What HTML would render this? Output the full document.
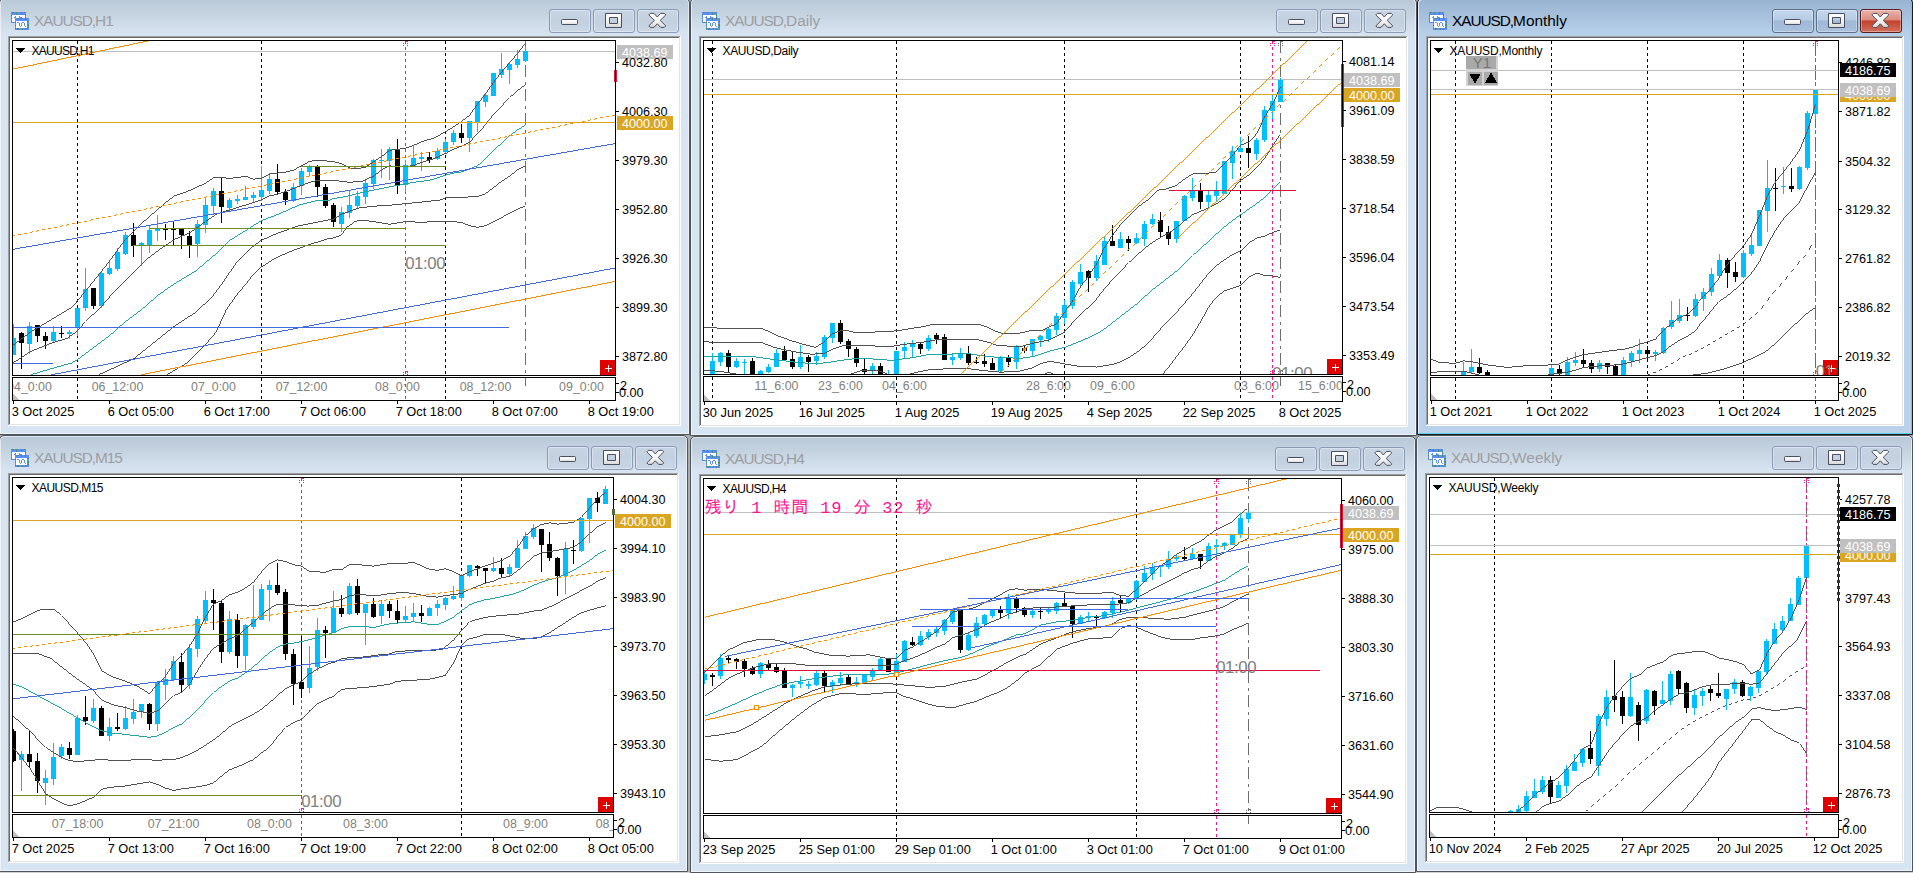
<!DOCTYPE html>
<html lang="ja"><head><meta charset="utf-8"><title>XAUUSD charts</title>
<style>
html,body{margin:0;padding:0}
body{width:1913px;height:873px;overflow:hidden;background:#ababab;position:relative;font-family:"Liberation Sans",sans-serif}
.win{position:absolute;box-sizing:border-box;border:1px solid #50565e;border-radius:5px 5px 0 0;
 background:linear-gradient(#b9c8d8 0,#c4d2e0 14px,#d7e3f0 34px,#d7e4f2 40px);box-shadow:inset 0 0 0 1px rgba(255,255,255,.55)}
.win.act{border-color:#1b1b1b;background:linear-gradient(#98b3d1 0,#a4bedb 14px,#b6cfe9 34px,#b9d1ea 40px);box-shadow:inset -1px -1px 0 0 #5fd0ea, inset 1px 1px 0 0 rgba(255,255,255,.7)}
.ico{position:absolute;left:11px;top:13px}
.tt{position:absolute;left:34px;top:11px;font-size:15.4px;line-height:22px;color:#9c9ea3;letter-spacing:-1.05px;white-space:nowrap}
.act .tt{color:#000}
.tt .lc{letter-spacing:0}
.b{position:absolute;top:10px;width:41.5px;height:23.5px;box-sizing:border-box;border:1px solid #8c9bb7;border-radius:3px;
 background:linear-gradient(#c6d4e3,#c2d0e0 50%,#c9d6e5);box-shadow:inset 0 0 0 1px rgba(255,255,255,.35)}
.b svg{position:absolute;left:-1px;top:-1px}
.act .b{border-color:#5f708c;background:linear-gradient(#c3d6ec 0,#b7cde6 45%,#9fb8d6 50%,#a9c1dd 100%)}
.act .b.x{border-color:#5a1e1e;background:linear-gradient(#e9b3a9 0,#dc8c7f 45%,#c4402a 50%,#d0705c 100%)}
.cl{position:absolute;left:8px;top:37px;overflow:hidden}
.cl svg{display:block}
</style></head><body>
<svg width="0" height="0" style="position:absolute"><defs><linearGradient id="gw" x1="0" y1="0" x2="0" y2="1"><stop offset="0" stop-color="#fff"/><stop offset=".55" stop-color="#f4f4f4"/><stop offset="1" stop-color="#d8d8d8"/></linearGradient></defs></svg>
<div style="position:absolute;left:0;top:872px;width:1913px;height:1px;background:#d2d2d2"></div>
<div class="win" style="left:-1px;top:-2px;width:691px;height:437px">
<svg class="ico" width="19" height="19" viewBox="0 0 19 19" shape-rendering="crispEdges"><rect x="0" y="0" width="15" height="11" fill="#5b8ff9"/><rect x="1" y="3" width="13" height="7" fill="#fff"/><path d="M3 5.5h2M4.5 4v2M8.5 4v2M8.5 5.5h2" stroke="#5b8ff9" fill="none"/><rect x="1" y="0" width="2" height="1" fill="#4c8d6a"/><rect x="5" y="0" width="1" height="3" fill="#4c8d6a"/><rect x="10" y="0" width="1" height="3" fill="#4c8d6a"/><rect x="13" y="0" width="1" height="1" fill="#4c8d6a"/><rect x="0" y="3" width="1" height="1" fill="#4c8d6a"/><rect x="0" y="6" width="1" height="1" fill="#4c8d6a"/><rect x="0" y="9" width="1" height="1" fill="#4c8d6a"/><rect x="14" y="2" width="1" height="2" fill="#4c8d6a"/><rect x="14" y="5" width="1" height="1" fill="#4c8d6a"/><rect x="2" y="10" width="1" height="1" fill="#4c8d6a"/><rect x="4" y="6" width="14" height="12" fill="#5b8ff9"/><rect x="5" y="9" width="11" height="7" fill="#fff"/><rect x="6" y="6" width="2" height="1" fill="#4c8d6a"/><rect x="10" y="6" width="1" height="2" fill="#4c8d6a"/><rect x="14" y="6" width="1" height="2" fill="#4c8d6a"/><rect x="4" y="10" width="1" height="1" fill="#4c8d6a"/><rect x="4" y="13" width="1" height="1" fill="#4c8d6a"/><rect x="4" y="16" width="1" height="1" fill="#4c8d6a"/><rect x="16" y="9" width="2" height="1" fill="#4c8d6a"/><rect x="16" y="12" width="2" height="2" fill="#4c8d6a"/><rect x="16" y="15" width="2" height="1" fill="#4c8d6a"/><rect x="6" y="16" width="2" height="2" fill="#4c8d6a"/><rect x="11" y="16" width="1" height="2" fill="#4c8d6a"/><rect x="14" y="16" width="1" height="2" fill="#4c8d6a"/><rect x="6" y="10" width="2" height="1" fill="#5b8ff9"/><rect x="8" y="11" width="1" height="3" fill="#5b8ff9"/><rect x="9" y="14" width="1" height="1" fill="#5b8ff9"/><rect x="10" y="11" width="1" height="3" fill="#5b8ff9"/><rect x="11" y="10" width="2" height="1" fill="#5b8ff9"/><rect x="13" y="11" width="1" height="3" fill="#5b8ff9"/><rect x="14" y="14" width="1" height="1" fill="#5b8ff9"/></svg>
<div class="tt">XAUUSD,H1</div>
<div class="b n" style="left:549px"><svg width="42" height="24" viewBox="0 0 42 24"><rect x="12.5" y="10.5" width="16" height="5" rx="1" fill="url(#gw)" stroke="#4b4f63"/></svg></div>
<div class="b m" style="left:593px"><svg width="42" height="24" viewBox="0 0 42 24"><path fill-rule="evenodd" d="M12.5 4.5h16v14h-16zM16.5 8.5v6h8v-6z" fill="url(#gw)" stroke="#4b4f63" stroke-linejoin="round"/></svg></div>
<div class="b x" style="left:637px"><svg width="42" height="24" viewBox="0 0 42 24"><path d="M11.8 5.9L13.3 4.4H17L20.3 8L23.6 4.4H27.3L28.8 5.9L23.2 11.4L28.8 16.9L27.3 18.4H23.6L20.3 14.8L17 18.4H13.3L11.8 16.9L17.4 11.4Z" fill="url(#gw)" stroke="#4b4f63" stroke-linejoin="round"/></svg></div>
<div class="cl" style="width:673px;height:390px">
<svg width="673" height="390" viewBox="8 36 673 390" font-family='"Liberation Sans", sans-serif' shape-rendering="crispEdges">
<defs><clipPath id="c139881245814864"><rect x="13" y="41" width="602" height="334"/></clipPath><clipPath id="s139881245814864"><rect x="13" y="378" width="602" height="22"/></clipPath></defs>
<rect x="8" y="36" width="673" height="390" fill="#fff"/>
<rect x="8" y="36" width="673" height="1" fill="#a0a0a0"/><rect x="8" y="36" width="1" height="390" fill="#a0a0a0"/>
<rect x="9" y="37" width="671" height="1" fill="#696969"/><rect x="9" y="37" width="1" height="388" fill="#696969"/>
<rect x="9" y="424" width="671" height="1" fill="#e3e3e3"/><rect x="679" y="37" width="1" height="388" fill="#e3e3e3"/>
<rect x="8" y="425" width="673" height="1" fill="#fff"/><rect x="680" y="36" width="1" height="390" fill="#fff"/>
<g clip-path="url(#c139881245814864)">
<line x1="77.5" y1="41" x2="77.5" y2="375" stroke="#000" stroke-width="1" stroke-dasharray="3 3"/>
<line x1="261.5" y1="41" x2="261.5" y2="375" stroke="#000" stroke-width="1" stroke-dasharray="3 3"/>
<line x1="445.5" y1="41" x2="445.5" y2="375" stroke="#000" stroke-width="1" stroke-dasharray="3 3"/>
<line x1="405.5" y1="41" x2="405.5" y2="375" stroke="#ff1493" stroke-width="1" stroke-dasharray="3 3"/>
<line x1="525.5" y1="41" x2="525.5" y2="375" stroke="#6e6e6e" stroke-width="1" stroke-dasharray="12 4.5 3 4.5"/>
<line x1="12" y1="51.5" x2="616" y2="51.5" stroke="#c0c0c0" stroke-width="1"/>
<rect x="13" y="324" width="1" height="31" fill="#00bfff"/>
<rect x="11" y="338" width="5" height="17" fill="#00bfff"/>
<rect x="21" y="332" width="1" height="37" fill="#000"/>
<rect x="19" y="333" width="5" height="10" fill="#000"/>
<rect x="29" y="322" width="1" height="32" fill="#00bfff"/>
<rect x="27" y="326" width="5" height="18" fill="#00bfff"/>
<rect x="37" y="325" width="1" height="17" fill="#000"/>
<rect x="35" y="325" width="5" height="11" fill="#000"/>
<rect x="45" y="332" width="1" height="17" fill="#000"/>
<rect x="43" y="336" width="5" height="5" fill="#000"/>
<rect x="53" y="326" width="1" height="16" fill="#00bfff"/>
<rect x="51" y="332" width="5" height="9" fill="#00bfff"/>
<rect x="61" y="326" width="1" height="12" fill="#000"/>
<rect x="59" y="333" width="5" height="1" fill="#000"/>
<rect x="69" y="330" width="1" height="9" fill="#00bfff"/>
<rect x="67" y="332" width="5" height="2" fill="#00bfff"/>
<rect x="77" y="308" width="1" height="28" fill="#00bfff"/>
<rect x="75" y="308" width="5" height="20" fill="#00bfff"/>
<rect x="85" y="268" width="1" height="43" fill="#00bfff"/>
<rect x="83" y="289" width="5" height="19" fill="#00bfff"/>
<rect x="93" y="288" width="1" height="21" fill="#000"/>
<rect x="91" y="288" width="5" height="18" fill="#000"/>
<rect x="101" y="272" width="1" height="36" fill="#00bfff"/>
<rect x="99" y="273" width="5" height="33" fill="#00bfff"/>
<rect x="109" y="261" width="1" height="14" fill="#00bfff"/>
<rect x="107" y="268" width="5" height="6" fill="#00bfff"/>
<rect x="117" y="248" width="1" height="23" fill="#00bfff"/>
<rect x="115" y="252" width="5" height="17" fill="#00bfff"/>
<rect x="125" y="232" width="1" height="23" fill="#00bfff"/>
<rect x="123" y="235" width="5" height="19" fill="#00bfff"/>
<rect x="133" y="223" width="1" height="34" fill="#000"/>
<rect x="131" y="235" width="5" height="11" fill="#000"/>
<rect x="141" y="242" width="1" height="24" fill="#00bfff"/>
<rect x="139" y="243" width="5" height="3" fill="#00bfff"/>
<rect x="149" y="226" width="1" height="27" fill="#00bfff"/>
<rect x="147" y="230" width="5" height="15" fill="#00bfff"/>
<rect x="157" y="215" width="1" height="26" fill="#00bfff"/>
<rect x="155" y="229" width="5" height="2" fill="#00bfff"/>
<rect x="165" y="224" width="1" height="16" fill="#000"/>
<rect x="163" y="229" width="5" height="1" fill="#000"/>
<rect x="173" y="222" width="1" height="24" fill="#000"/>
<rect x="171" y="229" width="5" height="1" fill="#000"/>
<rect x="181" y="229" width="1" height="20" fill="#000"/>
<rect x="179" y="229" width="5" height="6" fill="#000"/>
<rect x="189" y="231" width="1" height="27" fill="#000"/>
<rect x="187" y="236" width="5" height="9" fill="#000"/>
<rect x="197" y="220" width="1" height="37" fill="#00bfff"/>
<rect x="195" y="224" width="5" height="20" fill="#00bfff"/>
<rect x="205" y="198" width="1" height="35" fill="#00bfff"/>
<rect x="203" y="205" width="5" height="20" fill="#00bfff"/>
<rect x="213" y="188" width="1" height="27" fill="#00bfff"/>
<rect x="211" y="191" width="5" height="15" fill="#00bfff"/>
<rect x="221" y="178" width="1" height="45" fill="#000"/>
<rect x="219" y="191" width="5" height="16" fill="#000"/>
<rect x="229" y="198" width="1" height="14" fill="#00bfff"/>
<rect x="227" y="200" width="5" height="8" fill="#00bfff"/>
<rect x="237" y="195" width="1" height="9" fill="#00bfff"/>
<rect x="235" y="199" width="5" height="2" fill="#00bfff"/>
<rect x="245" y="186" width="1" height="14" fill="#00bfff"/>
<rect x="243" y="197" width="5" height="3" fill="#00bfff"/>
<rect x="253" y="192" width="1" height="10" fill="#00bfff"/>
<rect x="251" y="195" width="5" height="3" fill="#00bfff"/>
<rect x="261" y="166" width="1" height="35" fill="#00bfff"/>
<rect x="259" y="190" width="5" height="7" fill="#00bfff"/>
<rect x="269" y="173" width="1" height="21" fill="#00bfff"/>
<rect x="267" y="179" width="5" height="12" fill="#00bfff"/>
<rect x="277" y="164" width="1" height="30" fill="#000"/>
<rect x="275" y="179" width="5" height="13" fill="#000"/>
<rect x="285" y="189" width="1" height="16" fill="#000"/>
<rect x="283" y="192" width="5" height="8" fill="#000"/>
<rect x="293" y="183" width="1" height="19" fill="#00bfff"/>
<rect x="291" y="187" width="5" height="14" fill="#00bfff"/>
<rect x="301" y="168" width="1" height="27" fill="#00bfff"/>
<rect x="299" y="171" width="5" height="15" fill="#00bfff"/>
<rect x="309" y="165" width="1" height="11" fill="#00bfff"/>
<rect x="307" y="166" width="5" height="6" fill="#00bfff"/>
<rect x="317" y="165" width="1" height="32" fill="#000"/>
<rect x="315" y="167" width="5" height="20" fill="#000"/>
<rect x="325" y="184" width="1" height="24" fill="#000"/>
<rect x="323" y="187" width="5" height="19" fill="#000"/>
<rect x="333" y="203" width="1" height="24" fill="#000"/>
<rect x="331" y="205" width="5" height="17" fill="#000"/>
<rect x="341" y="207" width="1" height="25" fill="#00bfff"/>
<rect x="339" y="212" width="5" height="12" fill="#00bfff"/>
<rect x="349" y="190" width="1" height="28" fill="#00bfff"/>
<rect x="347" y="205" width="5" height="8" fill="#00bfff"/>
<rect x="357" y="191" width="1" height="17" fill="#00bfff"/>
<rect x="355" y="196" width="5" height="10" fill="#00bfff"/>
<rect x="365" y="179" width="1" height="25" fill="#00bfff"/>
<rect x="363" y="183" width="5" height="14" fill="#00bfff"/>
<rect x="373" y="159" width="1" height="30" fill="#00bfff"/>
<rect x="371" y="160" width="5" height="24" fill="#00bfff"/>
<rect x="381" y="149" width="1" height="29" fill="#00bfff"/>
<rect x="379" y="160" width="5" height="1" fill="#00bfff"/>
<rect x="389" y="147" width="1" height="33" fill="#00bfff"/>
<rect x="387" y="149" width="5" height="12" fill="#00bfff"/>
<rect x="397" y="139" width="1" height="55" fill="#000"/>
<rect x="395" y="149" width="5" height="37" fill="#000"/>
<rect x="405" y="160" width="1" height="32" fill="#00bfff"/>
<rect x="403" y="165" width="5" height="20" fill="#00bfff"/>
<rect x="413" y="145" width="1" height="21" fill="#00bfff"/>
<rect x="411" y="158" width="5" height="8" fill="#00bfff"/>
<rect x="421" y="152" width="1" height="19" fill="#00bfff"/>
<rect x="419" y="157" width="5" height="2" fill="#00bfff"/>
<rect x="429" y="152" width="1" height="11" fill="#000"/>
<rect x="427" y="157" width="5" height="3" fill="#000"/>
<rect x="437" y="148" width="1" height="12" fill="#00bfff"/>
<rect x="435" y="151" width="5" height="8" fill="#00bfff"/>
<rect x="445" y="139" width="1" height="14" fill="#00bfff"/>
<rect x="443" y="142" width="5" height="10" fill="#00bfff"/>
<rect x="453" y="130" width="1" height="15" fill="#00bfff"/>
<rect x="451" y="133" width="5" height="9" fill="#00bfff"/>
<rect x="461" y="124" width="1" height="19" fill="#000"/>
<rect x="459" y="133" width="5" height="5" fill="#000"/>
<rect x="469" y="121" width="1" height="31" fill="#00bfff"/>
<rect x="467" y="121" width="5" height="17" fill="#00bfff"/>
<rect x="477" y="101" width="1" height="31" fill="#00bfff"/>
<rect x="475" y="101" width="5" height="21" fill="#00bfff"/>
<rect x="485" y="93" width="1" height="14" fill="#00bfff"/>
<rect x="483" y="95" width="5" height="7" fill="#00bfff"/>
<rect x="493" y="73" width="1" height="23" fill="#00bfff"/>
<rect x="491" y="73" width="5" height="23" fill="#00bfff"/>
<rect x="501" y="53" width="1" height="25" fill="#00bfff"/>
<rect x="499" y="69" width="5" height="6" fill="#00bfff"/>
<rect x="509" y="62" width="1" height="22" fill="#00bfff"/>
<rect x="507" y="64" width="5" height="6" fill="#00bfff"/>
<rect x="517" y="50" width="1" height="18" fill="#00bfff"/>
<rect x="515" y="59" width="5" height="6" fill="#00bfff"/>
<rect x="525" y="47" width="1" height="15" fill="#00bfff"/>
<rect x="523" y="51" width="5" height="10" fill="#00bfff"/>
<path d="M10 346.9L30.6 331.5L30.6 332.5L10 347.9ZM30.6 331.5L51.2 319.1L51.2 320.1L30.6 332.5ZM51.2 319.1L71.9 306.7L71.9 307.7L51.2 320.1ZM71.4 307.2L76.9 301L77.9 301L72.4 307.2ZM76.9 301L92 282.5L93 282.5L77.9 301ZM92 282.5L108.5 261.9L109.5 261.9L93 282.5ZM108.5 261.9L125 239.2L126 239.2L109.5 261.9ZM125 239.2L137.3 226.8L138.3 226.8L126 239.2ZM137.8 226.3L154.3 211.9L154.3 212.9L137.8 227.3ZM154.3 211.9L168.8 199.5L168.8 200.5L154.3 212.9ZM168.8 199.5L174.9 195.2L174.9 196.2L168.8 200.5ZM174.9 195.2L187.3 191.1L187.3 192.1L174.9 196.2ZM187.3 191.1L195.6 187L195.6 188L187.3 192.1ZM195.6 187L205.5 182.9L205.5 183.9L195.6 188ZM205.5 182.9L213.5 177.3L213.5 178.3L205.5 183.9ZM213.5 177.3L221.5 177.3L221.5 178.3L213.5 178.3ZM221.5 177.3L229.6 177.7L229.6 178.7L221.5 178.3ZM229.6 177.7L237.6 177.3L237.6 178.3L229.6 178.7ZM237.6 177.3L245.7 175.6L245.7 176.6L237.6 178.3ZM245.7 175.6L253.5 178.7L253.5 179.7L245.7 176.6ZM253.5 178.7L261.5 177.7L261.5 178.7L253.5 179.7ZM261.5 177.7L269.6 173.6L269.6 174.6L261.5 178.7ZM269.6 173.6L277.6 172.6L277.6 173.6L269.6 174.6ZM277.6 172.6L285.7 171.5L285.7 172.5L277.6 173.6ZM285.7 171.5L293.7 169.5L293.7 170.5L285.7 172.5ZM293.7 169.5L301.5 165.3L301.5 166.3L293.7 170.5ZM301.5 165.3L309.6 160.8L309.6 161.8L301.5 166.3ZM309.6 160.8L317.6 159.6L317.6 160.6L309.6 161.8ZM317.6 159.6L330 160.8L330 161.8L317.6 160.6ZM330 160.8L333 160.8L333 161.8L330 161.8ZM333 160.8L341.2 163.3L341.2 164.3L333 161.8ZM341.2 163.3L349.5 167.4L349.5 168.4L341.2 164.3ZM349.5 167.4L357.7 168.4L357.7 169.4L349.5 168.4ZM357.7 168.4L366 166.4L366 167.4L357.7 169.4ZM366 166.4L373.6 161.2L373.6 162.2L366 167.4ZM373.6 161.2L381.6 156.1L381.6 157.1L373.6 162.2ZM381.6 156.1L389.5 149.9L389.5 150.9L381.6 157.1ZM389.5 149.9L397.5 148.8L397.5 149.8L389.5 150.9ZM397.5 148.8L405.6 147.8L405.6 148.8L397.5 149.8ZM405.6 147.8L413.6 144.7L413.6 145.7L405.6 148.8ZM413.6 144.7L423.7 140.6L423.7 141.6L413.6 145.7ZM423.7 140.6L434 137.5L434 138.5L423.7 141.6ZM434 137.5L445.6 131.3L445.6 132.3L434 138.5ZM445.6 131.3L453.6 126.2L453.6 127.2L445.6 132.3ZM453.6 126.2L461.4 121L461.4 122L453.6 127.2ZM461.4 121L469.5 114.8L469.5 115.8L461.4 122ZM469 115.3L477 104L478 104L470 115.3ZM477 104L485.1 93.7L486.1 93.7L478 104ZM485.1 93.7L493.1 82.3L494.1 82.3L486.1 93.7ZM493.1 82.3L501.1 72L502.1 72L494.1 82.3ZM501.1 72L509 62.7L510 62.7L502.1 72ZM509 62.7L517 53.5L518 53.5L510 62.7ZM517 53.5L524.2 44.2L525.2 44.2L518 53.5Z" fill="#505050"/>
<path d="M13.1 362.4L30.6 351L30.6 352L13.1 363.4ZM30.6 351L51.2 342.8L51.2 343.8L30.6 352ZM51.2 342.8L67.7 337.6L67.7 338.6L51.2 343.8ZM67.7 337.6L77.4 330.4L77.4 331.4L67.7 338.6ZM76.9 330.9L85 321.6L86 321.6L77.9 330.9ZM85.5 321.1L100.7 306.7L100.7 307.7L85.5 322.1ZM100.2 307.2L112.6 292.8L113.6 292.8L101.2 307.2ZM112.6 292.8L129.1 276.3L130.1 276.3L113.6 292.8ZM129.1 276.3L145.6 259.8L146.6 259.8L130.1 276.3ZM146.1 259.3L162.6 246.9L162.6 247.9L146.1 260.3ZM162.6 246.9L174.9 238.7L174.9 239.7L162.6 247.9ZM174.9 238.7L189.4 232.5L189.4 233.5L174.9 239.7ZM189.4 232.5L203.8 222.2L203.8 223.2L189.4 233.5ZM203.8 222.2L216.2 213.9L216.2 214.9L203.8 223.2ZM216.2 213.9L228.6 209.8L228.6 210.8L216.2 214.9ZM228.6 209.8L245.1 204.7L245.1 205.7L228.6 210.8ZM245.1 204.7L261.5 199.5L261.5 200.5L245.1 205.7ZM261.5 199.5L269.6 195.2L269.6 196.2L261.5 200.5ZM269.6 195.2L277.6 193.8L277.6 194.8L269.6 196.2ZM277.6 193.8L285.7 191.1L285.7 192.1L277.6 194.8ZM285.7 191.1L293.7 188L293.7 189L285.7 192.1ZM293.7 188L301.5 184.9L301.5 185.9L293.7 189ZM301.5 184.9L309.6 181.8L309.6 182.8L301.5 185.9ZM309.6 181.8L317.6 179.8L317.6 180.8L309.6 182.8ZM317.6 179.8L330 179.8L330 180.8L317.6 180.8ZM330 179.8L333 179.8L333 180.8L330 180.8ZM333 179.8L349.5 181.8L349.5 182.8L333 180.8ZM349.5 181.8L361.9 180.8L361.9 181.8L349.5 182.8ZM361.9 180.8L373.6 175.6L373.6 176.6L361.9 181.8ZM373.6 175.6L381.6 169.5L381.6 170.5L373.6 176.6ZM381.6 169.5L389.5 165.3L389.5 166.3L381.6 170.5ZM389.5 165.3L397.5 166.4L397.5 167.4L389.5 166.3ZM397.5 166.4L405.6 166.4L405.6 167.4L397.5 167.4ZM405.6 166.4L413.6 164.9L413.6 165.9L405.6 167.4ZM413.6 164.9L423.7 161.2L423.7 162.2L413.6 165.9ZM423.7 161.2L434 158.1L434 159.1L423.7 162.2ZM434 158.1L445.6 153L445.6 154L434 159.1ZM445.6 153L453.6 148.8L453.6 149.8L445.6 154ZM453.6 148.8L461.4 145.7L461.4 146.7L453.6 149.8ZM461.4 145.7L469.5 141.6L469.5 142.6L461.4 146.7ZM469 142.1L477 133.9L478 133.9L470 142.1ZM477 133.9L485.1 124.6L486.1 124.6L478 133.9ZM485.1 124.6L493.1 114.3L494.1 114.3L486.1 124.6ZM493.1 114.3L501.1 106L502.1 106L494.1 114.3ZM501.1 106L509 97.8L510 97.8L502.1 106ZM509.5 97.3L517.5 90.1L517.5 91.1L509.5 98.3ZM517.5 90.1L524.7 84.9L524.7 85.9L517.5 91.1Z" fill="#505050"/>
<path d="M30.6 374.3L51.2 368.2L51.2 369.2L30.6 375.3ZM51.2 368.2L71.9 362.4L71.9 363.4L51.2 369.2ZM71.9 362.4L77.4 359.3L77.4 360.3L71.9 363.4ZM77.4 359.3L92.5 348L92.5 349L77.4 360.3ZM92.5 348L109 335.6L109 336.6L92.5 349ZM109 335.6L125.5 321.1L125.5 322.1L109 336.6ZM125.5 321.1L142 308.8L142 309.8L125.5 322.1ZM142 308.8L158.5 294.3L158.5 295.3L142 309.8ZM158.5 294.3L174.9 283L174.9 284L158.5 295.3ZM174.9 283L195.6 270.6L195.6 271.6L174.9 284ZM195.6 270.6L216.2 253.1L216.2 254.1L195.6 271.6ZM216.2 253.1L228.6 240.7L228.6 241.7L216.2 254.1ZM228.6 240.7L245.1 230.4L245.1 231.4L228.6 241.7ZM245.1 230.4L261.5 220.1L261.5 221.1L245.1 231.4ZM261.5 220.1L278 213.9L278 214.9L261.5 221.1ZM278 213.9L298.7 204.7L298.7 205.7L278 214.9ZM298.7 204.7L315.2 200.5L315.2 201.5L298.7 205.7ZM315.2 200.5L330 199.5L330 200.5L315.2 201.5ZM330 199.5L333 198.3L333 199.3L330 200.5ZM333 198.3L349.5 195.2L349.5 196.2L333 199.3ZM349.5 195.2L366 191.1L366 192.1L349.5 196.2ZM366 191.1L381.6 188L381.6 189L366 192.1ZM381.6 188L397.5 184.9L397.5 185.9L381.6 189ZM397.5 184.9L413.6 181.8L413.6 182.8L397.5 185.9ZM413.6 181.8L429.5 179.8L429.5 180.8L413.6 182.8ZM429.5 179.8L445.6 174.6L445.6 175.6L429.5 180.8ZM445.6 174.6L453.6 172.6L453.6 173.6L445.6 175.6ZM453.6 172.6L461.4 171.5L461.4 172.5L453.6 173.6ZM461.4 171.5L469.5 168.4L469.5 169.4L461.4 172.5ZM469.5 168.4L477.5 165.3L477.5 166.3L469.5 169.4ZM477.5 165.3L485.6 158.1L485.6 159.1L477.5 166.3ZM485.1 158.6L493.1 150.4L494.1 150.4L486.1 158.6ZM493.6 149.9L501.6 142.7L501.6 143.7L493.6 150.9ZM501.6 142.7L509.5 135.4L509.5 136.4L501.6 143.7ZM509.5 135.4L517.5 129.3L517.5 130.3L509.5 136.4ZM517.5 129.3L524.7 125.1L524.7 126.1L517.5 130.3Z" fill="#1fa5a5"/>
<path d="M98.7 374.3L133.7 358.3L133.7 359.3L98.7 375.3ZM133.7 358.3L154.3 341.8L154.3 342.8L133.7 359.3ZM154.3 341.8L174.9 325.3L174.9 326.3L154.3 342.8ZM174.9 325.3L195.6 311.9L195.6 312.9L174.9 326.3ZM195.6 311.9L212.1 296.4L212.1 297.4L195.6 312.9ZM211.6 296.9L223.9 280.4L224.9 280.4L212.6 296.9ZM223.9 280.4L236.3 261.9L237.3 261.9L224.9 280.4ZM236.8 261.4L249.2 249L249.2 250L236.8 262.4ZM249.2 249L261.5 239.7L261.5 240.7L249.2 250ZM261.5 239.7L278 232.5L278 233.5L261.5 240.7ZM278 232.5L298.7 225.3L298.7 226.3L278 233.5ZM298.7 225.3L330 219.1L330 220.1L298.7 226.3ZM330 219.1L333 219.1L333 220.1L330 220.1ZM333 219.1L341.2 213.9L341.2 214.9L333 220.1ZM341.2 213.9L349.5 210.8L349.5 211.8L341.2 214.9ZM349.5 210.8L357.7 207.7L357.7 208.7L349.5 211.8ZM357.7 207.7L373.6 205.7L373.6 206.7L357.7 208.7ZM373.6 205.7L389.5 204.7L389.5 205.7L373.6 206.7ZM389.5 204.7L405.6 203.2L405.6 204.2L389.5 205.7ZM405.6 203.2L421.6 201.6L421.6 202.6L405.6 204.2ZM421.6 201.6L440.2 199.5L440.2 200.5L421.6 202.6ZM440.2 199.5L445.6 197.3L445.6 198.3L440.2 200.5ZM445.6 197.3L461.4 196.9L461.4 197.9L445.6 198.3ZM461.4 196.9L477.5 195.9L477.5 196.9L461.4 197.9ZM477.5 195.9L485.6 193.2L485.6 194.2L477.5 196.9ZM485.6 193.2L493.6 187L493.6 188L485.6 194.2ZM493.6 187L501.6 180.8L501.6 181.8L493.6 188ZM501.6 180.8L509.5 175.6L509.5 176.6L501.6 181.8ZM509.5 175.6L517.5 169.5L517.5 170.5L509.5 176.6ZM517.5 169.5L524.7 165.7L524.7 166.7L517.5 170.5Z" fill="#505050"/>
<path d="M166.7 374.3L187.3 362.4L187.3 363.4L166.7 375.3ZM187.3 362.4L203.8 345.9L203.8 346.9L187.3 363.4ZM203.3 346.4L215.7 332L216.7 332L204.3 346.4ZM215.7 332L226 309.3L227 309.3L216.7 332ZM226 309.3L236.3 294.8L237.3 294.8L227 309.3ZM236.3 294.8L246.6 282.5L247.6 282.5L237.3 294.8ZM246.6 282.5L252.8 274.2L253.8 274.2L247.6 282.5ZM253.3 273.7L261.5 266.5L261.5 267.5L253.3 274.7ZM261.5 266.5L273.9 258.3L273.9 259.3L261.5 267.5ZM273.9 258.3L290.4 251L290.4 252L273.9 259.3ZM290.4 251L306.9 244.9L306.9 245.9L290.4 252ZM306.9 244.9L330 237.6L330 238.6L306.9 245.9ZM330 237.6L333 237.6L333 238.6L330 238.6ZM333 237.6L341.2 234.6L341.2 235.6L333 238.6ZM340.7 235.1L346.9 226.8L347.9 226.8L341.7 235.1ZM347.4 226.3L355.7 220.7L355.7 221.7L347.4 227.3ZM355.7 220.7L363.9 219.7L363.9 220.7L355.7 221.7ZM363.9 219.7L373.6 221.1L373.6 222.1L363.9 220.7ZM373.6 221.1L389.5 223.8L389.5 224.8L373.6 222.1ZM389.5 223.8L405.6 221.1L405.6 222.1L389.5 224.8ZM405.6 221.1L421.6 221.8L421.6 222.8L405.6 222.1ZM421.6 221.8L434 221.1L434 222.1L421.6 222.8ZM434 221.1L445.6 220.7L445.6 221.7L434 222.1ZM445.6 220.7L461.4 221.8L461.4 222.8L445.6 221.7ZM461.4 221.8L469.5 225.3L469.5 226.3L461.4 222.8ZM469.5 225.3L477.5 226.7L477.5 227.7L469.5 226.3ZM477.5 226.7L485.6 225.3L485.6 226.3L477.5 227.7ZM485.6 225.3L493.6 221.1L493.6 222.1L485.6 226.3ZM493.6 221.1L501.6 217L501.6 218L493.6 222.1ZM501.6 217L509.5 212.9L509.5 213.9L501.6 218ZM509.5 212.9L517.5 208.8L517.5 209.8L509.5 213.9ZM517.5 208.8L524.7 205.7L524.7 206.7L517.5 209.8Z" fill="#505050"/>
<line x1="12" y1="122.5" x2="616" y2="122.5" stroke="#daa520" stroke-width="1"/>
<path d="M12 68.8L150.2 40L150.2 41L12 69.8Z" fill="#ff8c00"/>
<path d="M12 235.5L15 234.9L15 235.9L12 236.5ZM18 234.3L21 233.7L21 234.7L18 235.3ZM24 233.1L27 232.5L27 233.5L24 234.1ZM30 231.9L33 231.3L33 232.3L30 232.9ZM36 230.7L39 230.1L39 231.1L36 231.7ZM42 229.5L45 228.9L45 229.9L42 230.5ZM48 228.3L51 227.7L51 228.7L48 229.3ZM54 227.1L57 226.5L57 227.5L54 228.1ZM60 225.9L63 225.3L63 226.3L60 226.9ZM66 224.7L69 224.1L69 225.1L66 225.7ZM72 223.5L75 222.9L75 223.9L72 224.5ZM78 222.3L81 221.7L81 222.7L78 223.3ZM84 221.1L87 220.5L87 221.5L84 222.1ZM90 219.8L93 219.2L93 220.2L90 220.8ZM96 218.6L99 218L99 219L96 219.6ZM102 217.4L105 216.8L105 217.8L102 218.4ZM108 216.2L111 215.6L111 216.6L108 217.2ZM114 215L117 214.4L117 215.4L114 216ZM120 213.8L123 213.2L123 214.2L120 214.8ZM126 212.6L129 212L129 213L126 213.6ZM132 211.4L135 210.8L135 211.8L132 212.4ZM138 210.2L141 209.6L141 210.6L138 211.2ZM144 209L147 208.4L147 209.4L144 210ZM150 207.8L153 207.2L153 208.2L150 208.8ZM156 206.6L159 206L159 207L156 207.6ZM162 205.4L165 204.8L165 205.8L162 206.4ZM168 204.2L171 203.6L171 204.6L168 205.2ZM174 203L177 202.4L177 203.4L174 204ZM180 201.8L183 201.2L183 202.2L180 202.8ZM186 200.6L189 200L189 201L186 201.6ZM192 199.4L195 198.8L195 199.8L192 200.4ZM198 198.2L201 197.6L201 198.6L198 199.2ZM204 197L207 196.4L207 197.4L204 198ZM210 195.8L213 195.2L213 196.2L210 196.8ZM216 194.6L219 194L219 195L216 195.6ZM222 193.4L225 192.8L225 193.8L222 194.4ZM228 192.2L231 191.6L231 192.6L228 193.2ZM234 191L237 190.4L237 191.4L234 192ZM240 189.7L243 189.1L243 190.1L240 190.7ZM246 188.5L249 187.9L249 188.9L246 189.5ZM252 187.3L255 186.7L255 187.7L252 188.3ZM258 186.1L261 185.5L261 186.5L258 187.1ZM264 184.9L267 184.3L267 185.3L264 185.9ZM270 183.7L273 183.1L273 184.1L270 184.7ZM276 182.5L279 181.9L279 182.9L276 183.5ZM282 181.3L285 180.7L285 181.7L282 182.3ZM288 180.1L291 179.5L291 180.5L288 181.1ZM294 178.9L297 178.3L297 179.3L294 179.9ZM300 177.7L303 177.1L303 178.1L300 178.7ZM306 176.5L309 175.9L309 176.9L306 177.5ZM312 175.3L315 174.7L315 175.7L312 176.3ZM318 174.1L321 173.5L321 174.5L318 175.1ZM324 172.9L327 172.3L327 173.3L324 173.9ZM330 171.7L333 171.1L333 172.1L330 172.7ZM336 170.5L339 169.9L339 170.9L336 171.5ZM342 169.3L345 168.7L345 169.7L342 170.3ZM348 168.1L351 167.5L351 168.5L348 169.1ZM354 166.9L357 166.3L357 167.3L354 167.9ZM360 165.7L363 165.1L363 166.1L360 166.7ZM366 164.5L369 163.9L369 164.9L366 165.5ZM372 163.3L375 162.7L375 163.7L372 164.3ZM378 162.1L381 161.5L381 162.5L378 163.1ZM384 160.9L387 160.3L387 161.3L384 161.9ZM390 159.6L393 159L393 160L390 160.6ZM396 158.4L399 157.8L399 158.8L396 159.4ZM402 157.2L405 156.6L405 157.6L402 158.2ZM408 156L411 155.4L411 156.4L408 157ZM414 154.8L417 154.2L417 155.2L414 155.8ZM420 153.6L423 153L423 154L420 154.6ZM426 152.4L429 151.8L429 152.8L426 153.4ZM432 151.2L435 150.6L435 151.6L432 152.2ZM438 150L441 149.4L441 150.4L438 151ZM444 148.8L447 148.2L447 149.2L444 149.8ZM450 147.6L453 147L453 148L450 148.6ZM456 146.4L459 145.8L459 146.8L456 147.4ZM462 145.2L465 144.6L465 145.6L462 146.2ZM468 144L471 143.4L471 144.4L468 145ZM474 142.8L477 142.2L477 143.2L474 143.8ZM480 141.6L483 141L483 142L480 142.6ZM486 140.4L489 139.8L489 140.8L486 141.4ZM492 139.2L495 138.6L495 139.6L492 140.2ZM498 138L501 137.4L501 138.4L498 139ZM504 136.8L507 136.2L507 137.2L504 137.8ZM510 135.6L513 135L513 136L510 136.6ZM516 134.4L519 133.8L519 134.8L516 135.4ZM522 133.2L525 132.6L525 133.6L522 134.2ZM528 132L531 131.4L531 132.4L528 133ZM534 130.8L537 130.2L537 131.2L534 131.8ZM540 129.6L543 128.9L543 129.9L540 130.6ZM546 128.3L549 127.7L549 128.7L546 129.3ZM552 127.1L555 126.5L555 127.5L552 128.1ZM558 125.9L561 125.3L561 126.3L558 126.9ZM564 124.7L567 124.1L567 125.1L564 125.7ZM570 123.5L573 122.9L573 123.9L570 124.5ZM576 122.3L579 121.7L579 122.7L576 123.3ZM582 121.1L585 120.5L585 121.5L582 122.1ZM588 119.9L591 119.3L591 120.3L588 120.9ZM594 118.7L597 118.1L597 119.1L594 119.7ZM600 117.5L603 116.9L603 117.9L600 118.5ZM606 116.3L609 115.7L609 116.7L606 117.3ZM612 115.1L615 114.5L615 115.5L612 116.1Z" fill="#ff8c00"/>
<path d="M12 249L616 142.9L616 143.9L12 250Z" fill="#4169e1"/>
<path d="M51.2 374.3L616 267.3L616 268.3L51.2 375.3Z" fill="#4169e1"/>
<path d="M140.9 374.3L616 280.7L616 281.7L140.9 375.3Z" fill="#ff8c00"/>
<line x1="12" y1="327.5" x2="509" y2="327.5" stroke="#4169e1" stroke-width="1"/>
<line x1="12" y1="363.5" x2="53" y2="363.5" stroke="#4169e1" stroke-width="1"/>
<line x1="301" y1="166.5" x2="446" y2="166.5" stroke="#6b8e23" stroke-width="1"/>
<line x1="149" y1="228.5" x2="406" y2="228.5" stroke="#6b8e23" stroke-width="1"/>
<line x1="133" y1="245.5" x2="446" y2="245.5" stroke="#6b8e23" stroke-width="1"/>
<rect x="405" y="41" width="3" height="1" fill="#ff1493"/>
<rect x="403" y="43" width="1" height="1" fill="#ff1493"/>
<rect x="403" y="45" width="1" height="1" fill="#ff1493"/>
<rect x="407" y="43" width="1" height="1" fill="#ff1493"/>
<rect x="407" y="45" width="1" height="1" fill="#ff1493"/>
<rect x="405" y="371" width="3" height="1" fill="#ff1493"/>
<rect x="403" y="372" width="1" height="1" fill="#ff1493"/>
<rect x="403" y="374" width="1" height="1" fill="#ff1493"/>
<rect x="407" y="372" width="1" height="1" fill="#ff1493"/>
<rect x="407" y="374" width="1" height="1" fill="#ff1493"/>
<text x="405.2" y="269" font-size="16.8" fill="#808080" letter-spacing="-0.4">01:00</text>
<rect x="600" y="360" width="15" height="15" fill="#e00000"/>
<rect x="605" y="368" width="7" height="1" fill="#fff"/><rect x="608" y="365" width="1" height="7" fill="#fff"/>
</g>
<rect x="12.5" y="40.5" width="603" height="335" fill="none" stroke="#000"/>
<rect x="12.5" y="377.5" width="603" height="23" fill="none" stroke="#000"/>
<polygon points="13,394 13,400 19,400" fill="#c0c0c0"/>
<g clip-path="url(#s139881245814864)">
<text x="29.5" y="390.7" font-size="12.4" fill="#808080" text-anchor="middle">04_0:00</text>
<text x="117.5" y="390.7" font-size="12.4" fill="#808080" text-anchor="middle">06_12:00</text>
<text x="213.5" y="390.7" font-size="12.4" fill="#808080" text-anchor="middle">07_0:00</text>
<text x="301.5" y="390.7" font-size="12.4" fill="#808080" text-anchor="middle">07_12:00</text>
<text x="397.5" y="390.7" font-size="12.4" fill="#808080" text-anchor="middle">08_0:00</text>
<text x="485.5" y="390.7" font-size="12.4" fill="#808080" text-anchor="middle">08_12:00</text>
<text x="581.5" y="390.7" font-size="12.4" fill="#808080" text-anchor="middle">09_0:00</text>
</g>
<rect x="616" y="383" width="3" height="1" fill="#000"/><rect x="616" y="392" width="3" height="1" fill="#000"/>
<text x="620" y="389.6" font-size="12.6">2</text><text x="619" y="397" font-size="12.6">0.00</text>
<line x1="77.5" y1="378" x2="77.5" y2="400" stroke="#000" stroke-dasharray="3 3"/>
<line x1="261.5" y1="378" x2="261.5" y2="400" stroke="#000" stroke-dasharray="3 3"/>
<line x1="445.5" y1="378" x2="445.5" y2="400" stroke="#000" stroke-dasharray="3 3"/>
<line x1="405.5" y1="378" x2="405.5" y2="400" stroke="#ff1493" stroke-dasharray="3 3"/>
<line x1="525.5" y1="378" x2="525.5" y2="386" stroke="#6e6e6e"/>
<rect x="614" y="70" width="3" height="12" fill="#dc143c"/><rect x="615" y="70" width="1" height="12" fill="#000"/>
<polygon points="16,48 25,48 20.5,53" fill="#000"/>
<text x="31.5" y="55" font-size="12" fill="#000" textLength="63" lengthAdjust="spacing">XAUUSD,H1</text>
<rect x="617" y="45" width="56" height="14" fill="#c0c0c0"/>
<text x="622" y="56.6" font-size="12.6" fill="#fff">4038.69</text>
<rect x="616" y="62" width="3" height="1" fill="#000"/>
<text x="622" y="67" font-size="12.6" fill="#000">4032.80</text>
<rect x="616" y="111" width="3" height="1" fill="#000"/>
<text x="622" y="116" font-size="12.6" fill="#000">4006.30</text>
<rect x="616" y="160" width="3" height="1" fill="#000"/>
<text x="622" y="165" font-size="12.6" fill="#000">3979.30</text>
<rect x="616" y="209" width="3" height="1" fill="#000"/>
<text x="622" y="214" font-size="12.6" fill="#000">3952.80</text>
<rect x="616" y="258" width="3" height="1" fill="#000"/>
<text x="622" y="263" font-size="12.6" fill="#000">3926.30</text>
<rect x="616" y="307" width="3" height="1" fill="#000"/>
<text x="622" y="312" font-size="12.6" fill="#000">3899.30</text>
<rect x="616" y="356" width="3" height="1" fill="#000"/>
<text x="622" y="361" font-size="12.6" fill="#000">3872.80</text>
<rect x="617" y="116" width="56" height="14" fill="#daa520"/>
<text x="622" y="127.6" font-size="12.6" fill="#fff">4000.00</text>
<rect x="13" y="401" width="1" height="3" fill="#000"/>
<text x="11.7" y="416" font-size="12.8" fill="#000">3 Oct 2025</text>
<rect x="109" y="401" width="1" height="3" fill="#000"/>
<text x="107.7" y="416" font-size="12.8" fill="#000">6 Oct 05:00</text>
<rect x="205" y="401" width="1" height="3" fill="#000"/>
<text x="203.7" y="416" font-size="12.8" fill="#000">6 Oct 17:00</text>
<rect x="301" y="401" width="1" height="3" fill="#000"/>
<text x="299.7" y="416" font-size="12.8" fill="#000">7 Oct 06:00</text>
<rect x="397" y="401" width="1" height="3" fill="#000"/>
<text x="395.7" y="416" font-size="12.8" fill="#000">7 Oct 18:00</text>
<rect x="493" y="401" width="1" height="3" fill="#000"/>
<text x="491.7" y="416" font-size="12.8" fill="#000">8 Oct 07:00</text>
<rect x="589" y="401" width="1" height="3" fill="#000"/>
<text x="587.7" y="416" font-size="12.8" fill="#000">8 Oct 19:00</text>
</svg>
</div></div>
<div class="win" style="left:690px;top:-2px;width:727px;height:438px">
<svg class="ico" width="19" height="19" viewBox="0 0 19 19" shape-rendering="crispEdges"><rect x="0" y="0" width="15" height="11" fill="#5b8ff9"/><rect x="1" y="3" width="13" height="7" fill="#fff"/><path d="M3 5.5h2M4.5 4v2M8.5 4v2M8.5 5.5h2" stroke="#5b8ff9" fill="none"/><rect x="1" y="0" width="2" height="1" fill="#4c8d6a"/><rect x="5" y="0" width="1" height="3" fill="#4c8d6a"/><rect x="10" y="0" width="1" height="3" fill="#4c8d6a"/><rect x="13" y="0" width="1" height="1" fill="#4c8d6a"/><rect x="0" y="3" width="1" height="1" fill="#4c8d6a"/><rect x="0" y="6" width="1" height="1" fill="#4c8d6a"/><rect x="0" y="9" width="1" height="1" fill="#4c8d6a"/><rect x="14" y="2" width="1" height="2" fill="#4c8d6a"/><rect x="14" y="5" width="1" height="1" fill="#4c8d6a"/><rect x="2" y="10" width="1" height="1" fill="#4c8d6a"/><rect x="4" y="6" width="14" height="12" fill="#5b8ff9"/><rect x="5" y="9" width="11" height="7" fill="#fff"/><rect x="6" y="6" width="2" height="1" fill="#4c8d6a"/><rect x="10" y="6" width="1" height="2" fill="#4c8d6a"/><rect x="14" y="6" width="1" height="2" fill="#4c8d6a"/><rect x="4" y="10" width="1" height="1" fill="#4c8d6a"/><rect x="4" y="13" width="1" height="1" fill="#4c8d6a"/><rect x="4" y="16" width="1" height="1" fill="#4c8d6a"/><rect x="16" y="9" width="2" height="1" fill="#4c8d6a"/><rect x="16" y="12" width="2" height="2" fill="#4c8d6a"/><rect x="16" y="15" width="2" height="1" fill="#4c8d6a"/><rect x="6" y="16" width="2" height="2" fill="#4c8d6a"/><rect x="11" y="16" width="1" height="2" fill="#4c8d6a"/><rect x="14" y="16" width="1" height="2" fill="#4c8d6a"/><rect x="6" y="10" width="2" height="1" fill="#5b8ff9"/><rect x="8" y="11" width="1" height="3" fill="#5b8ff9"/><rect x="9" y="14" width="1" height="1" fill="#5b8ff9"/><rect x="10" y="11" width="1" height="3" fill="#5b8ff9"/><rect x="11" y="10" width="2" height="1" fill="#5b8ff9"/><rect x="13" y="11" width="1" height="3" fill="#5b8ff9"/><rect x="14" y="14" width="1" height="1" fill="#5b8ff9"/></svg>
<div class="tt">XAUUSD,<span class="lc">Daily</span></div>
<div class="b n" style="left:585px"><svg width="42" height="24" viewBox="0 0 42 24"><rect x="12.5" y="10.5" width="16" height="5" rx="1" fill="url(#gw)" stroke="#4b4f63"/></svg></div>
<div class="b m" style="left:629px"><svg width="42" height="24" viewBox="0 0 42 24"><path fill-rule="evenodd" d="M12.5 4.5h16v14h-16zM16.5 8.5v6h8v-6z" fill="url(#gw)" stroke="#4b4f63" stroke-linejoin="round"/></svg></div>
<div class="b x" style="left:673px"><svg width="42" height="24" viewBox="0 0 42 24"><path d="M11.8 5.9L13.3 4.4H17L20.3 8L23.6 4.4H27.3L28.8 5.9L23.2 11.4L28.8 16.9L27.3 18.4H23.6L20.3 14.8L17 18.4H13.3L11.8 16.9L17.4 11.4Z" fill="url(#gw)" stroke="#4b4f63" stroke-linejoin="round"/></svg></div>
<div class="cl" style="width:709px;height:391px">
<svg width="709" height="391" viewBox="699 36 709 391" font-family='"Liberation Sans", sans-serif' shape-rendering="crispEdges">
<defs><clipPath id="c139881245814816"><rect x="704" y="41" width="638" height="333"/></clipPath><clipPath id="s139881245814816"><rect x="704" y="377" width="638" height="24"/></clipPath></defs>
<rect x="699" y="36" width="709" height="391" fill="#fff"/>
<rect x="699" y="36" width="709" height="1" fill="#a0a0a0"/><rect x="699" y="36" width="1" height="391" fill="#a0a0a0"/>
<rect x="700" y="37" width="707" height="1" fill="#696969"/><rect x="700" y="37" width="1" height="389" fill="#696969"/>
<rect x="700" y="425" width="707" height="1" fill="#e3e3e3"/><rect x="1406" y="37" width="1" height="389" fill="#e3e3e3"/>
<rect x="699" y="426" width="709" height="1" fill="#fff"/><rect x="1407" y="36" width="1" height="391" fill="#fff"/>
<g clip-path="url(#c139881245814816)">
<line x1="712.5" y1="41" x2="712.5" y2="374" stroke="#000" stroke-width="1" stroke-dasharray="3 3"/>
<line x1="896.5" y1="41" x2="896.5" y2="374" stroke="#000" stroke-width="1" stroke-dasharray="3 3"/>
<line x1="1064.5" y1="41" x2="1064.5" y2="374" stroke="#000" stroke-width="1" stroke-dasharray="3 3"/>
<line x1="1240.5" y1="41" x2="1240.5" y2="374" stroke="#000" stroke-width="1" stroke-dasharray="3 3"/>
<line x1="1272.5" y1="41" x2="1272.5" y2="374" stroke="#ff1493" stroke-width="1" stroke-dasharray="3 3"/>
<line x1="1280.5" y1="41" x2="1280.5" y2="374" stroke="#6e6e6e" stroke-width="1" stroke-dasharray="12 4.5 3 4.5"/>
<line x1="703" y1="79.5" x2="1343" y2="79.5" stroke="#c0c0c0" stroke-width="1"/>
<rect x="712" y="353" width="1" height="24" fill="#00bfff"/>
<rect x="710" y="361" width="5" height="16" fill="#00bfff"/>
<rect x="720" y="352" width="1" height="14" fill="#00bfff"/>
<rect x="718" y="353" width="5" height="9" fill="#00bfff"/>
<rect x="728" y="350" width="1" height="22" fill="#000"/>
<rect x="726" y="353" width="5" height="14" fill="#000"/>
<rect x="736" y="358" width="1" height="10" fill="#00bfff"/>
<rect x="734" y="361" width="5" height="6" fill="#00bfff"/>
<rect x="744" y="359" width="1" height="18" fill="#00bfff"/>
<rect x="742" y="362" width="5" height="1" fill="#00bfff"/>
<rect x="752" y="358" width="1" height="19" fill="#000"/>
<rect x="750" y="361" width="5" height="16" fill="#000"/>
<rect x="760" y="370" width="1" height="7" fill="#00bfff"/>
<rect x="758" y="371" width="5" height="6" fill="#00bfff"/>
<rect x="768" y="364" width="1" height="9" fill="#00bfff"/>
<rect x="766" y="367" width="5" height="5" fill="#00bfff"/>
<rect x="776" y="349" width="1" height="18" fill="#00bfff"/>
<rect x="774" y="353" width="5" height="14" fill="#00bfff"/>
<rect x="784" y="346" width="1" height="15" fill="#000"/>
<rect x="782" y="351" width="5" height="9" fill="#000"/>
<rect x="792" y="351" width="1" height="18" fill="#000"/>
<rect x="790" y="359" width="5" height="8" fill="#000"/>
<rect x="800" y="345" width="1" height="24" fill="#00bfff"/>
<rect x="798" y="357" width="5" height="10" fill="#00bfff"/>
<rect x="808" y="355" width="1" height="17" fill="#000"/>
<rect x="806" y="357" width="5" height="5" fill="#000"/>
<rect x="816" y="352" width="1" height="13" fill="#00bfff"/>
<rect x="814" y="356" width="5" height="5" fill="#00bfff"/>
<rect x="824" y="335" width="1" height="24" fill="#00bfff"/>
<rect x="822" y="337" width="5" height="20" fill="#00bfff"/>
<rect x="832" y="323" width="1" height="20" fill="#00bfff"/>
<rect x="830" y="323" width="5" height="15" fill="#00bfff"/>
<rect x="840" y="320" width="1" height="24" fill="#000"/>
<rect x="838" y="323" width="5" height="19" fill="#000"/>
<rect x="848" y="339" width="1" height="18" fill="#000"/>
<rect x="846" y="341" width="5" height="8" fill="#000"/>
<rect x="856" y="347" width="1" height="20" fill="#000"/>
<rect x="854" y="349" width="5" height="14" fill="#000"/>
<rect x="864" y="359" width="1" height="18" fill="#000"/>
<rect x="862" y="369" width="5" height="3" fill="#000"/>
<rect x="872" y="363" width="1" height="14" fill="#00bfff"/>
<rect x="870" y="366" width="5" height="5" fill="#00bfff"/>
<rect x="880" y="363" width="1" height="14" fill="#000"/>
<rect x="878" y="366" width="5" height="11" fill="#000"/>
<rect x="888" y="370" width="1" height="9" fill="#00bfff"/>
<rect x="886" y="376" width="5" height="3" fill="#00bfff"/>
<rect x="896" y="351" width="1" height="26" fill="#00bfff"/>
<rect x="894" y="351" width="5" height="26" fill="#00bfff"/>
<rect x="904" y="342" width="1" height="17" fill="#00bfff"/>
<rect x="902" y="347" width="5" height="4" fill="#00bfff"/>
<rect x="912" y="340" width="1" height="18" fill="#00bfff"/>
<rect x="910" y="344" width="5" height="3" fill="#00bfff"/>
<rect x="920" y="342" width="1" height="12" fill="#000"/>
<rect x="918" y="344" width="5" height="5" fill="#000"/>
<rect x="928" y="335" width="1" height="16" fill="#00bfff"/>
<rect x="926" y="338" width="5" height="11" fill="#00bfff"/>
<rect x="936" y="333" width="1" height="11" fill="#000"/>
<rect x="934" y="335" width="5" height="4" fill="#000"/>
<rect x="944" y="334" width="1" height="26" fill="#000"/>
<rect x="942" y="337" width="5" height="23" fill="#000"/>
<rect x="952" y="354" width="1" height="11" fill="#00bfff"/>
<rect x="950" y="357" width="5" height="3" fill="#00bfff"/>
<rect x="960" y="348" width="1" height="12" fill="#00bfff"/>
<rect x="958" y="354" width="5" height="4" fill="#00bfff"/>
<rect x="968" y="346" width="1" height="19" fill="#000"/>
<rect x="966" y="354" width="5" height="9" fill="#000"/>
<rect x="976" y="357" width="1" height="7" fill="#000"/>
<rect x="974" y="362" width="5" height="1" fill="#000"/>
<rect x="984" y="354" width="1" height="13" fill="#000"/>
<rect x="982" y="361" width="5" height="3" fill="#000"/>
<rect x="992" y="358" width="1" height="12" fill="#000"/>
<rect x="990" y="363" width="5" height="7" fill="#000"/>
<rect x="1000" y="356" width="1" height="16" fill="#00bfff"/>
<rect x="998" y="358" width="5" height="13" fill="#00bfff"/>
<rect x="1008" y="355" width="1" height="12" fill="#000"/>
<rect x="1006" y="357" width="5" height="5" fill="#000"/>
<rect x="1016" y="345" width="1" height="24" fill="#00bfff"/>
<rect x="1014" y="347" width="5" height="15" fill="#00bfff"/>
<rect x="1024" y="345" width="1" height="8" fill="#000"/>
<rect x="1022" y="348" width="5" height="3" fill="#000"/>
<rect x="1032" y="339" width="1" height="17" fill="#00bfff"/>
<rect x="1030" y="339" width="5" height="12" fill="#00bfff"/>
<rect x="1040" y="335" width="1" height="12" fill="#00bfff"/>
<rect x="1038" y="336" width="5" height="4" fill="#00bfff"/>
<rect x="1048" y="328" width="1" height="14" fill="#00bfff"/>
<rect x="1046" y="329" width="5" height="10" fill="#00bfff"/>
<rect x="1056" y="313" width="1" height="22" fill="#00bfff"/>
<rect x="1054" y="316" width="5" height="14" fill="#00bfff"/>
<rect x="1064" y="300" width="1" height="24" fill="#00bfff"/>
<rect x="1062" y="305" width="5" height="13" fill="#00bfff"/>
<rect x="1072" y="280" width="1" height="29" fill="#00bfff"/>
<rect x="1070" y="282" width="5" height="24" fill="#00bfff"/>
<rect x="1080" y="264" width="1" height="22" fill="#00bfff"/>
<rect x="1078" y="272" width="5" height="12" fill="#00bfff"/>
<rect x="1088" y="270" width="1" height="22" fill="#000"/>
<rect x="1086" y="271" width="5" height="7" fill="#000"/>
<rect x="1096" y="255" width="1" height="26" fill="#00bfff"/>
<rect x="1094" y="261" width="5" height="17" fill="#00bfff"/>
<rect x="1104" y="237" width="1" height="28" fill="#00bfff"/>
<rect x="1102" y="241" width="5" height="24" fill="#00bfff"/>
<rect x="1112" y="225" width="1" height="21" fill="#000"/>
<rect x="1110" y="241" width="5" height="5" fill="#000"/>
<rect x="1120" y="232" width="1" height="16" fill="#00bfff"/>
<rect x="1118" y="239" width="5" height="9" fill="#00bfff"/>
<rect x="1128" y="236" width="1" height="15" fill="#000"/>
<rect x="1126" y="239" width="5" height="4" fill="#000"/>
<rect x="1136" y="233" width="1" height="11" fill="#00bfff"/>
<rect x="1134" y="238" width="5" height="5" fill="#00bfff"/>
<rect x="1144" y="221" width="1" height="25" fill="#00bfff"/>
<rect x="1142" y="224" width="5" height="15" fill="#00bfff"/>
<rect x="1152" y="214" width="1" height="11" fill="#00bfff"/>
<rect x="1150" y="219" width="5" height="5" fill="#00bfff"/>
<rect x="1160" y="212" width="1" height="26" fill="#000"/>
<rect x="1158" y="220" width="5" height="12" fill="#000"/>
<rect x="1168" y="226" width="1" height="19" fill="#000"/>
<rect x="1166" y="232" width="5" height="7" fill="#000"/>
<rect x="1176" y="221" width="1" height="22" fill="#00bfff"/>
<rect x="1174" y="221" width="5" height="18" fill="#00bfff"/>
<rect x="1184" y="195" width="1" height="26" fill="#00bfff"/>
<rect x="1182" y="196" width="5" height="25" fill="#00bfff"/>
<rect x="1192" y="178" width="1" height="23" fill="#00bfff"/>
<rect x="1190" y="190" width="5" height="8" fill="#00bfff"/>
<rect x="1200" y="183" width="1" height="26" fill="#000"/>
<rect x="1198" y="190" width="5" height="12" fill="#000"/>
<rect x="1208" y="191" width="1" height="16" fill="#00bfff"/>
<rect x="1206" y="195" width="5" height="7" fill="#00bfff"/>
<rect x="1216" y="181" width="1" height="21" fill="#00bfff"/>
<rect x="1214" y="190" width="5" height="6" fill="#00bfff"/>
<rect x="1224" y="161" width="1" height="33" fill="#00bfff"/>
<rect x="1222" y="161" width="5" height="33" fill="#00bfff"/>
<rect x="1232" y="146" width="1" height="33" fill="#00bfff"/>
<rect x="1230" y="151" width="5" height="12" fill="#00bfff"/>
<rect x="1240" y="137" width="1" height="15" fill="#00bfff"/>
<rect x="1238" y="148" width="5" height="4" fill="#00bfff"/>
<rect x="1248" y="136" width="1" height="32" fill="#000"/>
<rect x="1246" y="148" width="5" height="5" fill="#000"/>
<rect x="1256" y="138" width="1" height="22" fill="#00bfff"/>
<rect x="1254" y="140" width="5" height="14" fill="#00bfff"/>
<rect x="1264" y="106" width="1" height="36" fill="#00bfff"/>
<rect x="1262" y="110" width="5" height="30" fill="#00bfff"/>
<rect x="1272" y="95" width="1" height="24" fill="#00bfff"/>
<rect x="1270" y="101" width="5" height="10" fill="#00bfff"/>
<rect x="1280" y="78" width="1" height="24" fill="#00bfff"/>
<rect x="1278" y="80" width="5" height="22" fill="#00bfff"/>
<path d="M704.1 326.9L720.6 327.7L720.6 328.7L704.1 327.9ZM720.6 327.7L761.9 328L761.9 329L720.6 328.7ZM761.9 328L770.1 331.5L770.1 332.5L761.9 329ZM770.1 331.5L778.4 335.6L778.4 336.6L770.1 332.5ZM778.4 335.6L792.8 340.7L792.8 341.7L778.4 336.6ZM792.8 340.7L807.2 344.9L807.2 345.9L792.8 341.7ZM807.2 344.9L815.5 346.9L815.5 347.9L807.2 345.9ZM815.5 346.9L823.7 341.8L823.7 342.8L815.5 347.9ZM823.7 341.8L832 333.5L832 334.5L823.7 342.8ZM832 333.5L840.2 330.4L840.2 331.4L832 334.5ZM840.2 330.4L848.5 330.4L848.5 331.4L840.2 331.4ZM848.5 330.4L856.7 332.5L856.7 333.5L848.5 331.4ZM856.7 332.5L875.3 331.5L875.3 332.5L856.7 333.5ZM875.3 331.5L896.5 330.4L896.5 331.4L875.3 332.5ZM896.5 330.4L912.6 327.7L912.6 328.7L896.5 331.4ZM912.6 327.7L922.7 326.3L922.7 327.3L912.6 328.7ZM922.7 326.3L933 323.8L933 324.8L922.7 327.3ZM933 323.8L978.4 323.8L978.4 324.8L933 324.8ZM978.4 323.8L986.6 326.3L986.6 327.3L978.4 324.8ZM986.6 326.3L994.8 330.4L994.8 331.4L986.6 327.3ZM994.8 330.4L1003.1 333.1L1003.1 334.1L994.8 331.4ZM1003.1 333.1L1020 332.5L1020 333.5L1003.1 334.1ZM1020 332.5L1032.4 329.8L1032.4 330.8L1020 333.5ZM1032.4 329.8L1040.6 330.4L1040.6 331.4L1032.4 330.8ZM1040.6 330.4L1048.5 326.9L1048.5 327.9L1040.6 331.4ZM1048.5 326.9L1056.5 323.2L1056.5 324.2L1048.5 327.9ZM1056 323.7L1064 312.4L1065 312.4L1057 323.7ZM1064 312.4L1072.1 301L1073.1 301L1065 312.4ZM1072.1 301L1080.1 286.6L1081.1 286.6L1073.1 301ZM1080.1 286.6L1088 276.3L1089 276.3L1081.1 286.6ZM1088 276.3L1096 263.9L1097 263.9L1089 276.3ZM1096 263.9L1104 247.4L1105 247.4L1097 263.9ZM1104 247.4L1112.1 235.1L1113.1 235.1L1105 247.4ZM1112.1 235.1L1120.1 224.7L1121.1 224.7L1113.1 235.1ZM1120.1 224.7L1128 216.5L1129 216.5L1121.1 224.7ZM1128 216.5L1136 208.2L1137 208.2L1129 216.5ZM1136.5 207.7L1144.5 201.6L1144.5 202.6L1136.5 208.7ZM1144.5 201.6L1147.8 199.5L1147.8 200.5L1144.5 202.6ZM1147.8 199.5L1157.8 189.7L1157.8 190.7L1147.8 200.5ZM1157.8 189.7L1166.1 188.6L1166.1 189.6L1157.8 190.7ZM1166.1 188.6L1176.4 184.9L1176.4 185.9L1166.1 189.6ZM1176.4 184.9L1184.4 178.7L1184.4 179.7L1176.4 185.9ZM1184.4 178.7L1192.5 173.6L1192.5 174.6L1184.4 179.7ZM1192.5 173.6L1200.5 172.8L1200.5 173.8L1192.5 174.6ZM1200.5 172.8L1208.6 172.6L1208.6 173.6L1200.5 173.8ZM1208.6 172.6L1216.4 171.5L1216.4 172.5L1208.6 173.6ZM1215.9 172L1223.9 163.8L1224.9 163.8L1216.9 172ZM1223.9 163.8L1232 155.5L1233 155.5L1224.9 163.8ZM1232 155.5L1240 145.2L1241 145.2L1233 155.5ZM1240.5 144.7L1248.6 141.6L1248.6 142.6L1240.5 145.7ZM1248.1 142.1L1256.1 133.9L1257.1 133.9L1249.1 142.1ZM1256.1 133.9L1263.9 117.4L1264.9 117.4L1257.1 133.9ZM1263.9 117.4L1272 104L1273 104L1264.9 117.4ZM1272 104L1280 87.1L1281 87.1L1273 104Z" fill="#505050"/>
<path d="M704.1 341.4L720.6 341.8L720.6 342.8L704.1 342.4ZM720.6 341.8L761.9 342.2L761.9 343.2L720.6 342.8ZM761.9 342.2L774.2 346.9L774.2 347.9L761.9 343.2ZM774.2 346.9L792.8 351L792.8 352L774.2 347.9ZM792.8 351L811.3 353.7L811.3 354.7L792.8 352ZM811.3 353.7L823.7 353.1L823.7 354.1L811.3 354.7ZM823.7 353.1L834 348L834 349L823.7 354.1ZM834 348L844.3 344.9L844.3 345.9L834 349ZM844.3 344.9L856.7 344.9L856.7 345.9L844.3 345.9ZM856.7 344.9L875.3 345.5L875.3 346.5L856.7 345.9ZM875.3 345.5L891.8 345.9L891.8 346.9L875.3 346.5ZM891.8 345.9L904.5 343.8L904.5 344.8L891.8 346.9ZM904.5 343.8L922.7 341.8L922.7 342.8L904.5 344.8ZM922.7 341.8L936.5 339.3L936.5 340.3L922.7 342.8ZM936.5 339.3L959.8 338.9L959.8 339.9L936.5 340.3ZM959.8 338.9L978.4 339.3L978.4 340.3L959.8 339.9ZM978.4 339.3L988.7 341.8L988.7 342.8L978.4 340.3ZM988.7 341.8L996.9 344.9L996.9 345.9L988.7 342.8ZM996.9 344.9L1020 346.3L1020 347.3L996.9 345.9ZM1020 346.3L1032.4 342.8L1032.4 343.8L1020 347.3ZM1032.4 342.8L1048.5 339.7L1048.5 340.7L1032.4 343.8ZM1048.5 339.7L1056.5 335.6L1056.5 336.6L1048.5 340.7ZM1056.5 335.6L1064.5 331.5L1064.5 332.5L1056.5 336.6ZM1064 332L1072.1 322.7L1073.1 322.7L1065 332ZM1072.1 322.7L1080.1 314.4L1081.1 314.4L1073.1 322.7ZM1080.6 313.9L1088.5 306.7L1088.5 307.7L1080.6 314.9ZM1088 307.2L1096 299L1097 299L1089 307.2ZM1096 299L1104 288.7L1105 288.7L1097 299ZM1104 288.7L1112.1 279.4L1113.1 279.4L1105 288.7ZM1112.1 279.4L1120.1 271.1L1121.1 271.1L1113.1 279.4ZM1120.1 271.1L1128 262.9L1129 262.9L1121.1 271.1ZM1128.5 262.4L1136.5 255.2L1136.5 256.2L1128.5 263.4ZM1136.5 255.2L1144.5 248L1144.5 249L1136.5 256.2ZM1144.5 248L1152.6 241.8L1152.6 242.8L1144.5 249ZM1152.6 241.8L1160.6 237L1160.6 238L1152.6 242.8ZM1160.6 237L1168.7 232.5L1168.7 233.5L1160.6 238ZM1168.7 232.5L1176.5 227.3L1176.5 228.3L1168.7 233.5ZM1176.5 227.3L1184.5 220.1L1184.5 221.1L1176.5 228.3ZM1184.5 220.1L1192.6 214.3L1192.6 215.3L1184.5 221.1ZM1192.6 214.3L1200.6 210.8L1200.6 211.8L1192.6 215.3ZM1200.6 210.8L1208.7 207.3L1208.7 208.3L1200.6 211.8ZM1208.7 207.3L1216.5 203.2L1216.5 204.2L1208.7 208.3ZM1216.5 203.2L1222.1 199.5L1222.1 200.5L1216.5 204.2ZM1222.1 199.5L1224.4 198.3L1224.4 199.3L1222.1 200.5ZM1223.9 198.8L1232 189.5L1233 189.5L1224.9 198.8ZM1232 189.5L1240 180.3L1241 180.3L1233 189.5ZM1240.5 179.8L1248.6 174.6L1248.6 175.6L1240.5 180.8ZM1248.6 174.6L1256.6 167.4L1256.6 168.4L1248.6 175.6ZM1256.1 167.9L1263.9 158.6L1264.9 158.6L1257.1 167.9ZM1263.9 158.6L1272 146.2L1273 146.2L1264.9 158.6ZM1272 146.2L1279 135.3L1280 135.3L1273 146.2Z" fill="#505050"/>
<path d="M704.1 356.2L751.5 355.8L751.5 356.8L704.1 357.2ZM751.5 355.8L768 358.3L768 359.3L751.5 356.8ZM768 358.3L792.8 361.4L792.8 362.4L768 359.3ZM792.8 361.4L815.5 363.4L815.5 364.4L792.8 362.4ZM815.5 363.4L832 361.4L832 362.4L815.5 364.4ZM832 361.4L848.5 358.7L848.5 359.7L832 362.4ZM848.5 358.7L864.9 357.9L864.9 358.9L848.5 359.7ZM864.9 357.9L891.8 359.9L891.8 360.9L864.9 358.9ZM891.8 359.9L912.6 357.2L912.6 358.2L891.8 360.9ZM912.6 357.2L928.5 354.1L928.5 355.1L912.6 358.2ZM928.5 354.1L944.5 353.7L944.5 354.7L928.5 355.1ZM944.5 353.7L968 353.1L968 354.1L944.5 354.7ZM968 353.1L988.7 356.2L988.7 357.2L968 354.1ZM988.7 356.2L1020 357.9L1020 358.9L988.7 357.2ZM1020 357.9L1032.4 356.2L1032.4 357.2L1020 358.9ZM1032.4 356.2L1048.5 351L1048.5 352L1032.4 357.2ZM1048.5 351L1064.5 346.9L1064.5 347.9L1048.5 352ZM1064.5 346.9L1080.6 340.7L1080.6 341.7L1064.5 347.9ZM1080.6 340.7L1096.5 333.5L1096.5 334.5L1080.6 341.7ZM1096.5 333.5L1104.5 328.4L1104.5 329.4L1096.5 334.5ZM1104.5 328.4L1112.6 322.2L1112.6 323.2L1104.5 329.4ZM1112.6 322.2L1120.6 316L1120.6 317L1112.6 323.2ZM1120.6 316L1128.5 309.8L1128.5 310.8L1120.6 317ZM1128.5 309.8L1136.5 303.6L1136.5 304.6L1128.5 310.8ZM1136.5 303.6L1144.5 296.4L1144.5 297.4L1136.5 304.6ZM1144.5 296.4L1152.6 289.2L1152.6 290.2L1144.5 297.4ZM1152.6 289.2L1160.6 283L1160.6 284L1152.6 290.2ZM1160.6 283L1168.7 276.8L1168.7 277.8L1160.6 284ZM1168.7 276.8L1176.5 270.6L1176.5 271.6L1168.7 277.8ZM1176.5 270.6L1184.5 263.4L1184.5 264.4L1176.5 271.6ZM1184 263.9L1192.1 255.7L1193.1 255.7L1185 263.9ZM1192.6 255.2L1200.6 248L1200.6 249L1192.6 256.2ZM1200.6 248L1208.7 240.7L1208.7 241.7L1200.6 249ZM1208.7 240.7L1216.5 233.5L1216.5 234.5L1208.7 241.7ZM1216.5 233.5L1224.5 226.3L1224.5 227.3L1216.5 234.5ZM1224.5 226.3L1232.6 220.1L1232.6 221.1L1224.5 227.3ZM1232.6 220.1L1240.4 214.3L1240.4 215.3L1232.6 221.1ZM1240.4 214.3L1248.5 208.8L1248.5 209.8L1240.4 215.3ZM1248.5 208.8L1256.5 203.2L1256.5 204.2L1248.5 209.8ZM1256.5 203.2L1261.2 199.5L1261.2 200.5L1256.5 204.2ZM1261.2 199.5L1264.4 197.3L1264.4 198.3L1261.2 200.5ZM1263.9 197.8L1272 189.5L1273 189.5L1264.9 197.8ZM1272 189.5L1279 182.3L1280 182.3L1273 189.5Z" fill="#1fa5a5"/>
<path d="M704.1 369.6L720.6 371L720.6 372L704.1 370.6ZM720.6 371L741.2 374.3L741.2 375.3L720.6 372ZM741.2 374.3L753.6 380.9L753.6 381.9L741.2 375.3ZM753.6 380.9L836.1 380.9L836.1 381.9L753.6 381.9ZM836.1 380.9L848.5 374.3L848.5 375.3L836.1 381.9ZM848.5 374.3L860.8 370.2L860.8 371.2L848.5 375.3ZM860.8 370.2L877.3 369.8L877.3 370.8L860.8 371.2ZM877.3 369.8L889.7 374.3L889.7 375.3L877.3 370.8ZM889.7 374.3L897.9 378.9L897.9 379.9L889.7 375.3ZM897.9 378.9L906.2 374.3L906.2 375.3L897.9 379.9ZM906.2 374.3L926.8 369.6L926.8 370.6L906.2 375.3ZM926.8 369.6L947.4 368.2L947.4 369.2L926.8 370.6ZM947.4 368.2L968 368.2L968 369.2L947.4 369.2ZM968 368.2L988.7 370.6L988.7 371.6L968 369.2ZM988.7 370.6L1001 371.7L1001 372.7L988.7 371.6ZM1001 371.7L1020 370.6L1020 371.6L1001 372.7ZM1020 370.6L1032.4 367.5L1032.4 368.5L1020 371.6ZM1032.4 367.5L1040.6 363.4L1040.6 364.4L1032.4 368.5ZM1040.6 363.4L1048.5 360.9L1048.5 361.9L1040.6 364.4ZM1048.5 360.9L1056.5 361.8L1056.5 362.8L1048.5 361.9ZM1056.5 361.8L1064.5 363.4L1064.5 364.4L1056.5 362.8ZM1064.5 363.4L1080.6 366.1L1080.6 367.1L1064.5 364.4ZM1080.6 366.1L1096.5 366.5L1096.5 367.5L1080.6 367.1ZM1096.5 366.5L1112.6 364L1112.6 365L1096.5 367.5ZM1112.6 364L1120.6 361.4L1120.6 362.4L1112.6 365ZM1120.6 361.4L1128.5 357.2L1128.5 358.2L1120.6 362.4ZM1128.5 357.2L1136.5 352.1L1136.5 353.1L1128.5 358.2ZM1136.5 352.1L1144.5 345.9L1144.5 346.9L1136.5 353.1ZM1144 346.4L1152.1 338.1L1153.1 338.1L1145 346.4ZM1152.1 338.1L1160.1 328.9L1161.1 328.9L1153.1 338.1ZM1160.1 328.9L1168.2 320.6L1169.2 320.6L1161.1 328.9ZM1168.2 320.6L1176 312.4L1177 312.4L1169.2 320.6ZM1176 312.4L1184 303.1L1185 303.1L1177 312.4ZM1184 303.1L1192.1 293.8L1193.1 293.8L1185 303.1ZM1192.1 293.8L1200.1 283.5L1201.1 283.5L1193.1 293.8ZM1200.1 283.5L1208.2 273.2L1209.2 273.2L1201.1 283.5ZM1208.7 272.7L1216.5 265.1L1216.5 266.1L1208.7 273.7ZM1216.5 265.1L1224.5 259.3L1224.5 260.3L1216.5 266.1ZM1224.5 259.3L1232.6 254.1L1232.6 255.1L1224.5 260.3ZM1232.6 254.1L1240.4 250.6L1240.4 251.6L1232.6 255.1ZM1240.4 250.6L1248.5 242.8L1248.5 243.8L1240.4 251.6ZM1248.5 242.8L1256.5 237.6L1256.5 238.6L1248.5 243.8ZM1256.5 237.6L1264.5 235.6L1264.5 236.6L1256.5 238.6ZM1264.5 235.6L1272.6 232.1L1272.6 233.1L1264.5 236.6ZM1272.6 232.1L1279.8 229.4L1279.8 230.4L1272.6 233.1Z" fill="#505050"/>
<path d="M1042.7 374.3L1048.9 371.7L1048.9 372.7L1042.7 375.3ZM1048.9 371.7L1055.1 374.3L1055.1 375.3L1048.9 372.7Z" fill="#505050"/>
<path d="M1161.8 374.8L1168.2 367L1169.2 367L1162.8 374.8ZM1168.2 367L1176 356.7L1177 356.7L1169.2 367ZM1176 356.7L1184 346.4L1185 346.4L1177 356.7ZM1184 346.4L1192.1 335.1L1193.1 335.1L1185 346.4ZM1192.1 335.1L1200.1 321.6L1201.1 321.6L1193.1 335.1ZM1200.1 321.6L1208.2 307.2L1209.2 307.2L1201.1 321.6ZM1208.2 307.2L1216 296.9L1217 296.9L1209.2 307.2ZM1216.5 296.4L1224.5 290.2L1224.5 291.2L1216.5 297.4ZM1224.5 290.2L1232.6 287.7L1232.6 288.7L1224.5 291.2ZM1232.6 287.7L1240.4 285.1L1240.4 286.1L1232.6 288.7ZM1239.9 285.6L1248 277.3L1249 277.3L1240.9 285.6ZM1248.5 276.8L1256.5 272.7L1256.5 273.7L1248.5 277.8ZM1256.5 272.7L1264.5 274.8L1264.5 275.8L1256.5 273.7ZM1264.5 274.8L1272.6 275.4L1272.6 276.4L1264.5 275.8ZM1272.6 275.4L1279.8 276.8L1279.8 277.8L1272.6 276.4Z" fill="#505050"/>
<line x1="703" y1="94.5" x2="1343" y2="94.5" stroke="#daa520" stroke-width="1"/>
<path d="M960.8 373.7L1307.3 40.6L1307.3 41.6L960.8 374.7Z" fill="#ff8c00"/>
<path d="M995 377.5L998 374.6L998 375.6L995 378.5ZM1001 371.7L1004 368.9L1004 369.9L1001 372.7ZM1007 366L1010 363.1L1010 364.1L1007 367ZM1013 360.2L1016 357.3L1016 358.3L1013 361.2ZM1019 354.5L1022 351.6L1022 352.6L1019 355.5ZM1025 348.7L1028 345.8L1028 346.8L1025 349.7ZM1031 342.9L1034 340.1L1034 341.1L1031 343.9ZM1037 337.2L1040 334.3L1040 335.3L1037 338.2ZM1043 331.4L1046 328.6L1046 329.6L1043 332.4ZM1049 325.7L1052 322.8L1052 323.8L1049 326.7ZM1055 319.9L1058 317L1058 318L1055 320.9ZM1061 314.2L1064 311.3L1064 312.3L1061 315.2ZM1067 308.4L1070 305.5L1070 306.5L1067 309.4ZM1073 302.6L1076 299.8L1076 300.8L1073 303.6ZM1079 296.9L1082 294L1082 295L1079 297.9ZM1085 291.1L1088 288.2L1088 289.2L1085 292.1ZM1091 285.4L1094 282.5L1094 283.5L1091 286.4ZM1097 279.6L1100 276.7L1100 277.7L1097 280.6ZM1103 273.8L1106 271L1106 272L1103 274.8ZM1109 268.1L1112 265.2L1112 266.2L1109 269.1ZM1115 262.3L1118 259.4L1118 260.4L1115 263.3ZM1121 256.6L1124 253.7L1124 254.7L1121 257.6ZM1127 250.8L1130 247.9L1130 248.9L1127 251.8ZM1133 245.1L1136 242.2L1136 243.2L1133 246.1ZM1139 239.3L1142 236.4L1142 237.4L1139 240.3ZM1145 233.5L1148 230.7L1148 231.7L1145 234.5ZM1151 227.8L1154 224.9L1154 225.9L1151 228.8ZM1157 222L1160 219.1L1160 220.1L1157 223ZM1163 216.3L1166 213.4L1166 214.4L1163 217.3ZM1169 210.5L1172 207.6L1172 208.6L1169 211.5ZM1175 204.7L1178 201.9L1178 202.9L1175 205.7ZM1181 199L1184 196.1L1184 197.1L1181 200ZM1187 193.2L1190 190.3L1190 191.3L1187 194.2ZM1193 187.5L1196 184.6L1196 185.6L1193 188.5ZM1199 181.7L1202 178.8L1202 179.8L1199 182.7ZM1205 175.9L1208 173.1L1208 174.1L1205 176.9ZM1211 170.2L1214 167.3L1214 168.3L1211 171.2ZM1217 164.4L1220 161.6L1220 162.6L1217 165.4ZM1223 158.7L1226 155.8L1226 156.8L1223 159.7ZM1229 152.9L1232 150L1232 151L1229 153.9ZM1235 147.2L1238 144.3L1238 145.3L1235 148.2ZM1241 141.4L1244 138.5L1244 139.5L1241 142.4ZM1247 135.6L1250 132.8L1250 133.8L1247 136.6ZM1253 129.9L1256 127L1256 128L1253 130.9ZM1259 124.1L1262 121.2L1262 122.2L1259 125.1ZM1265 118.4L1268 115.5L1268 116.5L1265 119.4ZM1271 112.6L1274 109.7L1274 110.7L1271 113.6ZM1277 106.8L1280 104L1280 105L1277 107.8ZM1283 101.1L1286 98.2L1286 99.2L1283 102.1ZM1289 95.3L1292 92.4L1292 93.4L1289 96.3ZM1295 89.6L1298 86.7L1298 87.7L1295 90.6ZM1301 83.8L1304 80.9L1304 81.9L1301 84.8ZM1307 78.1L1310 75.2L1310 76.2L1307 79.1ZM1313 72.3L1316 69.4L1316 70.4L1313 73.3ZM1319 66.5L1322 63.7L1322 64.7L1319 67.5ZM1325 60.8L1328 57.9L1328 58.9L1325 61.8ZM1331 55L1334 52.1L1334 53.1L1331 56ZM1337 49.3L1340 46.4L1340 47.4L1337 50.3Z" fill="#ff8c00"/>
<path d="M1176.5 238.7L1343 80.2L1343 81.2L1176.5 239.7Z" fill="#ff8c00"/>
<line x1="1169" y1="190.5" x2="1296" y2="190.5" stroke="#dc143c" stroke-width="1"/>
<rect x="1023" y="348" width="3" height="3" fill="#ff8c00"/>
<rect x="1272" y="41" width="3" height="1" fill="#ff1493"/>
<rect x="1270" y="43" width="1" height="1" fill="#ff1493"/>
<rect x="1270" y="45" width="1" height="1" fill="#ff1493"/>
<rect x="1274" y="43" width="1" height="1" fill="#ff1493"/>
<rect x="1274" y="45" width="1" height="1" fill="#ff1493"/>
<rect x="1272" y="370" width="3" height="1" fill="#ff1493"/>
<rect x="1270" y="371" width="1" height="1" fill="#ff1493"/>
<rect x="1270" y="373" width="1" height="1" fill="#ff1493"/>
<rect x="1274" y="371" width="1" height="1" fill="#ff1493"/>
<rect x="1274" y="373" width="1" height="1" fill="#ff1493"/>
<rect x="1280" y="41" width="3" height="1" fill="#6e6e6e"/>
<rect x="1278" y="43" width="1" height="1" fill="#6e6e6e"/>
<rect x="1278" y="45" width="1" height="1" fill="#6e6e6e"/>
<rect x="1282" y="43" width="1" height="1" fill="#6e6e6e"/>
<rect x="1282" y="45" width="1" height="1" fill="#6e6e6e"/>
<rect x="1280" y="370" width="3" height="1" fill="#6e6e6e"/>
<rect x="1278" y="371" width="1" height="1" fill="#6e6e6e"/>
<rect x="1278" y="373" width="1" height="1" fill="#6e6e6e"/>
<rect x="1282" y="371" width="1" height="1" fill="#6e6e6e"/>
<rect x="1282" y="373" width="1" height="1" fill="#6e6e6e"/>
<text x="1272.2" y="378.5" font-size="16.8" fill="#808080" letter-spacing="-0.4">01:00</text>
<rect x="1327" y="359" width="15" height="15" fill="#e00000"/>
<rect x="1332" y="367" width="7" height="1" fill="#fff"/><rect x="1335" y="364" width="1" height="7" fill="#fff"/>
</g>
<rect x="703.5" y="40.5" width="639" height="334" fill="none" stroke="#000"/>
<rect x="703.5" y="376.5" width="639" height="25" fill="none" stroke="#000"/>
<polygon points="704,395 704,401 710,401" fill="#c0c0c0"/>
<g clip-path="url(#s139881245814816)">
<text x="776.5" y="389.7" font-size="12.4" fill="#808080" text-anchor="middle">11_6:00</text>
<text x="840.5" y="389.7" font-size="12.4" fill="#808080" text-anchor="middle">23_6:00</text>
<text x="904.5" y="389.7" font-size="12.4" fill="#808080" text-anchor="middle">04_6:00</text>
<text x="1048.5" y="389.7" font-size="12.4" fill="#808080" text-anchor="middle">28_6:00</text>
<text x="1112.5" y="389.7" font-size="12.4" fill="#808080" text-anchor="middle">09_6:00</text>
<text x="1256.5" y="389.7" font-size="12.4" fill="#808080" text-anchor="middle">03_6:00</text>
<text x="1320.5" y="389.7" font-size="12.4" fill="#808080" text-anchor="middle">15_6:00</text>
</g>
<rect x="1343" y="382" width="3" height="1" fill="#000"/><rect x="1343" y="391" width="3" height="1" fill="#000"/>
<text x="1347" y="388.6" font-size="12.6">2</text><text x="1346" y="396" font-size="12.6">0.00</text>
<line x1="712.5" y1="377" x2="712.5" y2="401" stroke="#000" stroke-dasharray="3 3"/>
<line x1="896.5" y1="377" x2="896.5" y2="401" stroke="#000" stroke-dasharray="3 3"/>
<line x1="1064.5" y1="377" x2="1064.5" y2="401" stroke="#000" stroke-dasharray="3 3"/>
<line x1="1240.5" y1="377" x2="1240.5" y2="401" stroke="#000" stroke-dasharray="3 3"/>
<line x1="1272.5" y1="377" x2="1272.5" y2="401" stroke="#ff1493" stroke-dasharray="3 3"/>
<line x1="1280.5" y1="377" x2="1280.5" y2="386" stroke="#6e6e6e"/>
<rect x="1341" y="64" width="3" height="63" fill="#dc143c"/><rect x="1342" y="64" width="1" height="63" fill="#000"/>
<polygon points="707,48 716,48 711.5,53" fill="#000"/>
<text x="722.5" y="55" font-size="12" fill="#000" textLength="76" lengthAdjust="spacing">XAUUSD,Daily</text>
<rect x="1343" y="61" width="3" height="1" fill="#000"/>
<text x="1349" y="66" font-size="12.6" fill="#000">4081.14</text>
<rect x="1343" y="110" width="3" height="1" fill="#000"/>
<text x="1349" y="115" font-size="12.6" fill="#000">3961.09</text>
<rect x="1343" y="159" width="3" height="1" fill="#000"/>
<text x="1349" y="164" font-size="12.6" fill="#000">3838.59</text>
<rect x="1343" y="208" width="3" height="1" fill="#000"/>
<text x="1349" y="213" font-size="12.6" fill="#000">3718.54</text>
<rect x="1343" y="257" width="3" height="1" fill="#000"/>
<text x="1349" y="262" font-size="12.6" fill="#000">3596.04</text>
<rect x="1343" y="306" width="3" height="1" fill="#000"/>
<text x="1349" y="311" font-size="12.6" fill="#000">3473.54</text>
<rect x="1343" y="355" width="3" height="1" fill="#000"/>
<text x="1349" y="360" font-size="12.6" fill="#000">3353.49</text>
<rect x="1344" y="73" width="56" height="14" fill="#c0c0c0"/>
<text x="1349" y="84.6" font-size="12.6" fill="#fff">4038.69</text>
<rect x="1344" y="88" width="56" height="14" fill="#daa520"/>
<text x="1349" y="99.6" font-size="12.6" fill="#fff">4000.00</text>
<rect x="704" y="402" width="1" height="3" fill="#000"/>
<text x="702.7" y="417" font-size="12.8" fill="#000">30 Jun 2025</text>
<rect x="800" y="402" width="1" height="3" fill="#000"/>
<text x="798.7" y="417" font-size="12.8" fill="#000">16 Jul 2025</text>
<rect x="896" y="402" width="1" height="3" fill="#000"/>
<text x="894.7" y="417" font-size="12.8" fill="#000">1 Aug 2025</text>
<rect x="992" y="402" width="1" height="3" fill="#000"/>
<text x="990.7" y="417" font-size="12.8" fill="#000">19 Aug 2025</text>
<rect x="1088" y="402" width="1" height="3" fill="#000"/>
<text x="1086.7" y="417" font-size="12.8" fill="#000">4 Sep 2025</text>
<rect x="1184" y="402" width="1" height="3" fill="#000"/>
<text x="1182.7" y="417" font-size="12.8" fill="#000">22 Sep 2025</text>
<rect x="1280" y="402" width="1" height="3" fill="#000"/>
<text x="1278.7" y="417" font-size="12.8" fill="#000">8 Oct 2025</text>
</svg>
</div></div>
<div class="win act" style="left:1417px;top:-2px;width:496px;height:437px">
<svg class="ico" width="19" height="19" viewBox="0 0 19 19" shape-rendering="crispEdges"><rect x="0" y="0" width="15" height="11" fill="#5b8ff9"/><rect x="1" y="3" width="13" height="7" fill="#fff"/><path d="M3 5.5h2M4.5 4v2M8.5 4v2M8.5 5.5h2" stroke="#5b8ff9" fill="none"/><rect x="1" y="0" width="2" height="1" fill="#4c8d6a"/><rect x="5" y="0" width="1" height="3" fill="#4c8d6a"/><rect x="10" y="0" width="1" height="3" fill="#4c8d6a"/><rect x="13" y="0" width="1" height="1" fill="#4c8d6a"/><rect x="0" y="3" width="1" height="1" fill="#4c8d6a"/><rect x="0" y="6" width="1" height="1" fill="#4c8d6a"/><rect x="0" y="9" width="1" height="1" fill="#4c8d6a"/><rect x="14" y="2" width="1" height="2" fill="#4c8d6a"/><rect x="14" y="5" width="1" height="1" fill="#4c8d6a"/><rect x="2" y="10" width="1" height="1" fill="#4c8d6a"/><rect x="4" y="6" width="14" height="12" fill="#5b8ff9"/><rect x="5" y="9" width="11" height="7" fill="#fff"/><rect x="6" y="6" width="2" height="1" fill="#4c8d6a"/><rect x="10" y="6" width="1" height="2" fill="#4c8d6a"/><rect x="14" y="6" width="1" height="2" fill="#4c8d6a"/><rect x="4" y="10" width="1" height="1" fill="#4c8d6a"/><rect x="4" y="13" width="1" height="1" fill="#4c8d6a"/><rect x="4" y="16" width="1" height="1" fill="#4c8d6a"/><rect x="16" y="9" width="2" height="1" fill="#4c8d6a"/><rect x="16" y="12" width="2" height="2" fill="#4c8d6a"/><rect x="16" y="15" width="2" height="1" fill="#4c8d6a"/><rect x="6" y="16" width="2" height="2" fill="#4c8d6a"/><rect x="11" y="16" width="1" height="2" fill="#4c8d6a"/><rect x="14" y="16" width="1" height="2" fill="#4c8d6a"/><rect x="6" y="10" width="2" height="1" fill="#5b8ff9"/><rect x="8" y="11" width="1" height="3" fill="#5b8ff9"/><rect x="9" y="14" width="1" height="1" fill="#5b8ff9"/><rect x="10" y="11" width="1" height="3" fill="#5b8ff9"/><rect x="11" y="10" width="2" height="1" fill="#5b8ff9"/><rect x="13" y="11" width="1" height="3" fill="#5b8ff9"/><rect x="14" y="14" width="1" height="1" fill="#5b8ff9"/></svg>
<div class="tt">XAUUSD,<span class="lc">Monthly</span></div>
<div class="b n" style="left:354px"><svg width="42" height="24" viewBox="0 0 42 24"><rect x="12.5" y="10.5" width="16" height="5" rx="1" fill="url(#gw)" stroke="#4b4f63"/></svg></div>
<div class="b m" style="left:398px"><svg width="42" height="24" viewBox="0 0 42 24"><path fill-rule="evenodd" d="M12.5 4.5h16v14h-16zM16.5 8.5v6h8v-6z" fill="url(#gw)" stroke="#4b4f63" stroke-linejoin="round"/></svg></div>
<div class="b x" style="left:442px"><svg width="42" height="24" viewBox="0 0 42 24"><path d="M11.8 5.9L13.3 4.4H17L20.3 8L23.6 4.4H27.3L28.8 5.9L23.2 11.4L28.8 16.9L27.3 18.4H23.6L20.3 14.8L17 18.4H13.3L11.8 16.9L17.4 11.4Z" fill="url(#gw)" stroke="#4b4f63" stroke-linejoin="round"/></svg></div>
<div class="cl" style="width:478px;height:390px">
<svg width="478" height="390" viewBox="1426 36 478 390" font-family='"Liberation Sans", sans-serif' shape-rendering="crispEdges">
<defs><clipPath id="c139881247097536"><rect x="1431" y="41" width="407" height="334"/></clipPath><clipPath id="s139881247097536"><rect x="1431" y="378" width="407" height="22"/></clipPath></defs>
<rect x="1426" y="36" width="478" height="390" fill="#fff"/>
<rect x="1426" y="36" width="478" height="1" fill="#a0a0a0"/><rect x="1426" y="36" width="1" height="390" fill="#a0a0a0"/>
<rect x="1427" y="37" width="476" height="1" fill="#696969"/><rect x="1427" y="37" width="1" height="388" fill="#696969"/>
<rect x="1427" y="424" width="476" height="1" fill="#e3e3e3"/><rect x="1902" y="37" width="1" height="388" fill="#e3e3e3"/>
<rect x="1426" y="425" width="478" height="1" fill="#fff"/><rect x="1903" y="36" width="1" height="390" fill="#fff"/>
<g clip-path="url(#c139881247097536)">
<line x1="1455.5" y1="41" x2="1455.5" y2="375" stroke="#000" stroke-width="1" stroke-dasharray="3 3"/>
<line x1="1551.5" y1="41" x2="1551.5" y2="375" stroke="#000" stroke-width="1" stroke-dasharray="3 3"/>
<line x1="1647.5" y1="41" x2="1647.5" y2="375" stroke="#000" stroke-width="1" stroke-dasharray="3 3"/>
<line x1="1743.5" y1="41" x2="1743.5" y2="375" stroke="#000" stroke-width="1" stroke-dasharray="3 3"/>
<line x1="1815.5" y1="41" x2="1815.5" y2="375" stroke="#6e6e6e" stroke-width="1" stroke-dasharray="12 4.5 3 4.5"/>
<line x1="1815.5" y1="41" x2="1815.5" y2="375" stroke="#ff1493" stroke-width="1" stroke-dasharray="3 3"/>
<line x1="1430" y1="70.5" x2="1839" y2="70.5" stroke="#c0c0c0" stroke-width="1"/>
<line x1="1430" y1="89.5" x2="1839" y2="89.5" stroke="#c0c0c0" stroke-width="1"/>
<rect x="1463" y="362" width="1" height="15" fill="#00bfff"/>
<rect x="1461" y="371" width="5" height="6" fill="#00bfff"/>
<rect x="1471" y="349" width="1" height="25" fill="#00bfff"/>
<rect x="1469" y="367" width="5" height="5" fill="#00bfff"/>
<rect x="1479" y="358" width="1" height="16" fill="#000"/>
<rect x="1477" y="367" width="5" height="6" fill="#000"/>
<rect x="1487" y="370" width="1" height="7" fill="#000"/>
<rect x="1485" y="372" width="5" height="5" fill="#000"/>
<rect x="1551" y="365" width="1" height="12" fill="#00bfff"/>
<rect x="1549" y="368" width="5" height="9" fill="#00bfff"/>
<rect x="1559" y="365" width="1" height="10" fill="#000"/>
<rect x="1557" y="369" width="5" height="5" fill="#000"/>
<rect x="1567" y="357" width="1" height="20" fill="#00bfff"/>
<rect x="1565" y="362" width="5" height="15" fill="#00bfff"/>
<rect x="1575" y="352" width="1" height="14" fill="#00bfff"/>
<rect x="1573" y="360" width="5" height="3" fill="#00bfff"/>
<rect x="1583" y="349" width="1" height="19" fill="#000"/>
<rect x="1581" y="360" width="5" height="4" fill="#000"/>
<rect x="1591" y="360" width="1" height="13" fill="#000"/>
<rect x="1589" y="363" width="5" height="6" fill="#000"/>
<rect x="1599" y="360" width="1" height="12" fill="#00bfff"/>
<rect x="1597" y="363" width="5" height="6" fill="#00bfff"/>
<rect x="1607" y="363" width="1" height="11" fill="#000"/>
<rect x="1605" y="363" width="5" height="4" fill="#000"/>
<rect x="1615" y="365" width="1" height="12" fill="#000"/>
<rect x="1613" y="366" width="5" height="11" fill="#000"/>
<rect x="1623" y="357" width="1" height="20" fill="#00bfff"/>
<rect x="1621" y="360" width="5" height="17" fill="#00bfff"/>
<rect x="1631" y="351" width="1" height="16" fill="#00bfff"/>
<rect x="1629" y="353" width="5" height="8" fill="#00bfff"/>
<rect x="1639" y="339" width="1" height="24" fill="#00bfff"/>
<rect x="1637" y="350" width="5" height="4" fill="#00bfff"/>
<rect x="1647" y="346" width="1" height="14" fill="#000"/>
<rect x="1645" y="350" width="5" height="4" fill="#000"/>
<rect x="1655" y="350" width="1" height="11" fill="#00bfff"/>
<rect x="1653" y="352" width="5" height="2" fill="#00bfff"/>
<rect x="1663" y="327" width="1" height="27" fill="#00bfff"/>
<rect x="1661" y="328" width="5" height="25" fill="#00bfff"/>
<rect x="1671" y="301" width="1" height="28" fill="#00bfff"/>
<rect x="1669" y="320" width="5" height="7" fill="#00bfff"/>
<rect x="1679" y="299" width="1" height="24" fill="#00bfff"/>
<rect x="1677" y="315" width="5" height="6" fill="#00bfff"/>
<rect x="1687" y="307" width="1" height="14" fill="#000"/>
<rect x="1685" y="315" width="5" height="1" fill="#000"/>
<rect x="1695" y="294" width="1" height="23" fill="#00bfff"/>
<rect x="1693" y="299" width="5" height="17" fill="#00bfff"/>
<rect x="1703" y="288" width="1" height="23" fill="#00bfff"/>
<rect x="1701" y="292" width="5" height="7" fill="#00bfff"/>
<rect x="1711" y="268" width="1" height="28" fill="#00bfff"/>
<rect x="1709" y="274" width="5" height="18" fill="#00bfff"/>
<rect x="1719" y="254" width="1" height="24" fill="#00bfff"/>
<rect x="1717" y="260" width="5" height="16" fill="#00bfff"/>
<rect x="1727" y="258" width="1" height="30" fill="#000"/>
<rect x="1725" y="260" width="5" height="13" fill="#000"/>
<rect x="1735" y="262" width="1" height="20" fill="#000"/>
<rect x="1733" y="272" width="5" height="5" fill="#000"/>
<rect x="1743" y="250" width="1" height="28" fill="#00bfff"/>
<rect x="1741" y="253" width="5" height="24" fill="#00bfff"/>
<rect x="1751" y="234" width="1" height="22" fill="#00bfff"/>
<rect x="1749" y="245" width="5" height="9" fill="#00bfff"/>
<rect x="1759" y="210" width="1" height="36" fill="#00bfff"/>
<rect x="1757" y="210" width="5" height="36" fill="#00bfff"/>
<rect x="1767" y="160" width="1" height="72" fill="#00bfff"/>
<rect x="1765" y="188" width="5" height="23" fill="#00bfff"/>
<rect x="1775" y="168" width="1" height="43" fill="#000"/>
<rect x="1773" y="188" width="5" height="1" fill="#000"/>
<rect x="1783" y="167" width="1" height="27" fill="#00bfff"/>
<rect x="1781" y="186" width="5" height="1" fill="#00bfff"/>
<rect x="1791" y="168" width="1" height="24" fill="#000"/>
<rect x="1789" y="186" width="5" height="3" fill="#000"/>
<rect x="1799" y="166" width="1" height="24" fill="#00bfff"/>
<rect x="1797" y="167" width="5" height="22" fill="#00bfff"/>
<rect x="1807" y="111" width="1" height="59" fill="#00bfff"/>
<rect x="1805" y="113" width="5" height="55" fill="#00bfff"/>
<rect x="1815" y="90" width="1" height="29" fill="#00bfff"/>
<rect x="1813" y="90" width="5" height="24" fill="#00bfff"/>
<path d="M1431.2 358.7L1439.4 362L1439.4 363L1431.2 359.7ZM1439.4 362L1455.5 362.8L1455.5 363.8L1439.4 363ZM1455.5 362.8L1463.6 360.3L1463.6 361.3L1455.5 363.8ZM1463.6 360.3L1472.4 361.4L1472.4 362.4L1463.6 361.3ZM1472.4 361.4L1486.9 364.4L1486.9 365.4L1472.4 362.4ZM1486.9 364.4L1507.5 366.9L1507.5 367.9L1486.9 365.4ZM1507.5 366.9L1528.1 365.1L1528.1 366.1L1507.5 367.9ZM1528.1 365.1L1551.6 364.4L1551.6 365.4L1528.1 366.1ZM1551.6 364.4L1559.4 363.4L1559.4 364.4L1551.6 365.4ZM1559.4 363.4L1567.5 359.3L1567.5 360.3L1559.4 364.4ZM1567.5 359.3L1575.5 356.6L1575.5 357.6L1567.5 360.3ZM1575.5 356.6L1583.6 354.1L1583.6 355.1L1575.5 357.6ZM1583.6 354.1L1600.3 351.7L1600.3 352.7L1583.6 355.1ZM1600.3 351.7L1615.5 349.6L1615.5 350.6L1600.3 352.7ZM1615.5 349.6L1623.6 349L1623.6 350L1615.5 350.6ZM1623.6 349L1631.6 346.9L1631.6 347.9L1623.6 350ZM1631.6 346.9L1639.4 343.8L1639.4 344.8L1631.6 347.9ZM1639.4 343.8L1647.5 341.4L1647.5 342.4L1639.4 344.8ZM1647.5 341.4L1655.5 338.7L1655.5 339.7L1647.5 342.4ZM1655 339.2L1663.1 329.9L1664.1 329.9L1656 339.2ZM1663.6 329.4L1671.6 323.2L1671.6 324.2L1663.6 330.4ZM1671.6 323.2L1679.4 317L1679.4 318L1671.6 324.2ZM1679.4 317L1687.5 313.9L1687.5 314.9L1679.4 318ZM1687.5 313.9L1695.5 306.7L1695.5 307.7L1687.5 314.9ZM1695 307.2L1698.1 301.7L1699.1 301.7L1696 307.2ZM1698.6 301.2L1707.2 292.6L1707.2 293.6L1698.6 302.2ZM1706.7 293.1L1718.1 278.8L1719.1 278.8L1707.7 293.1ZM1718.1 278.8L1726.7 264.5L1727.7 264.5L1719.1 278.8ZM1726.7 264.5L1735.3 254.5L1736.3 254.5L1727.7 264.5ZM1735.3 254.5L1743 245.9L1744 245.9L1736.3 254.5ZM1743 245.9L1751 234.5L1752 234.5L1744 245.9ZM1751 234.5L1759 215.9L1760 215.9L1752 234.5ZM1759 215.9L1767.1 195.8L1768.1 195.8L1760 215.9ZM1767.1 195.8L1775.1 181.5L1776.1 181.5L1768.1 195.8ZM1775.1 181.5L1783.1 172L1784.1 172L1776.1 181.5ZM1783.1 172L1790.9 161.7L1791.9 161.7L1784.1 172ZM1790.9 161.7L1799 150.4L1800 150.4L1791.9 161.7ZM1799 150.4L1807 130.8L1808 130.8L1800 150.4ZM1807 130.8L1815.1 104L1816.1 104L1808 130.8Z" fill="#505050"/>
<path d="M1431.2 371.7L1463.6 370.6L1463.6 371.6L1431.2 372.7ZM1463.6 370.6L1478.6 374.3L1478.6 375.3L1463.6 371.6ZM1478.6 374.3L1486.9 380.9L1486.9 381.9L1478.6 375.3ZM1486.9 380.9L1540.5 380.9L1540.5 381.9L1486.9 381.9ZM1540.5 380.9L1548.7 374.3L1548.7 375.3L1540.5 381.9ZM1548.7 374.3L1567.5 371.7L1567.5 372.7L1548.7 375.3ZM1567.5 371.7L1575.5 369.6L1575.5 370.6L1567.5 372.7ZM1575.5 369.6L1583.6 366.9L1583.6 367.9L1575.5 370.6ZM1583.6 366.9L1591.6 366.1L1591.6 367.1L1583.6 367.9ZM1591.6 366.1L1607.5 364.9L1607.5 365.9L1591.6 367.1ZM1607.5 364.9L1615.5 364.4L1615.5 365.4L1607.5 365.9ZM1615.5 364.4L1623.6 363.4L1623.6 364.4L1615.5 365.4ZM1623.6 363.4L1631.6 361.4L1631.6 362.4L1623.6 364.4ZM1631.6 361.4L1639.4 359.3L1639.4 360.3L1631.6 362.4ZM1639.4 359.3L1647.5 357.2L1647.5 358.2L1639.4 360.3ZM1647.5 357.2L1655.5 355.2L1655.5 356.2L1647.5 358.2ZM1655.5 355.2L1663.6 351L1663.6 352L1655.5 356.2ZM1663.6 351L1671.6 344.9L1671.6 345.9L1663.6 352ZM1671.6 344.9L1679.4 339.7L1679.4 340.7L1671.6 345.9ZM1679.4 339.7L1687.5 335.6L1687.5 336.6L1679.4 340.7ZM1687.5 335.6L1695.5 330.4L1695.5 331.4L1687.5 336.6ZM1695 330.9L1698.1 326.1L1699.1 326.1L1696 330.9ZM1698.1 326.1L1706.7 316L1707.7 316L1699.1 326.1ZM1706.7 316L1718.1 301.7L1719.1 301.7L1707.7 316ZM1718.6 301.2L1727.2 295.5L1727.2 296.5L1718.6 302.2ZM1727.2 295.5L1735.8 288.3L1735.8 289.3L1727.2 296.5ZM1735.8 288.3L1743.5 281.2L1743.5 282.2L1735.8 289.3ZM1743 281.7L1751 273.1L1752 273.1L1744 281.7ZM1751 273.1L1759 261.7L1760 261.7L1752 273.1ZM1759 261.7L1767.1 244.5L1768.1 244.5L1760 261.7ZM1767.1 244.5L1775.1 230.2L1776.1 230.2L1768.1 244.5ZM1775.1 230.2L1783.1 218.7L1784.1 218.7L1776.1 230.2ZM1783.1 218.7L1791.1 210.1L1792.1 210.1L1784.1 218.7ZM1791.6 209.6L1798.8 202.5L1798.8 203.5L1791.6 210.6ZM1798.3 203L1806.8 187.2L1807.8 187.2L1799.3 203ZM1806.8 187.2L1814.9 172.4L1815.9 172.4L1807.8 187.2Z" fill="#505050"/>
<path d="M1647.5 374.3L1650 373.5L1650 374.5L1647.5 375.3ZM1653 372.5L1656 371.5L1656 372.5L1653 373.5ZM1659 370.1L1662 368.8L1662 369.8L1659 371.1ZM1665 367.3L1668 365.5L1668 366.5L1665 368.3ZM1671 363.8L1674 361.8L1674 362.8L1671 364.8ZM1677 359.9L1680 358L1680 359L1677 360.9ZM1683 356.4L1686 354.9L1686 355.9L1683 357.4ZM1689 354.2L1692 353.2L1692 354.2L1689 355.2ZM1695 351.7L1698 350.2L1698 351.2L1695 352.7ZM1701 348.7L1704 347L1704 348L1701 349.7ZM1707 345.2L1710 343.5L1710 344.5L1707 346.2ZM1713 341.7L1716 340L1716 341L1713 342.7ZM1719 338.2L1722 336.5L1722 337.5L1719 339.2ZM1725 334.7L1728 333L1728 334L1725 335.7ZM1731 331.2L1734 329.5L1734 330.5L1731 332.2ZM1737 327.7L1740 326.1L1740 327.1L1737 328.7ZM1743 324.4L1746 322L1746 323L1743 325.4ZM1749 319.4L1752 316.9L1752 317.9L1749 320.4ZM1755 314.3L1758 311.7L1758 312.7L1755 315.3ZM1760.5 309L1763.5 305L1764.5 305L1761.5 309ZM1766.5 301L1769.5 297.2L1770.5 297.2L1767.5 301ZM1772.5 293.5L1775.5 289.8L1776.5 289.8L1773.5 293.5ZM1778.5 286.6L1781.5 283.4L1782.5 283.4L1779.5 286.6ZM1784.5 279.9L1787.5 276.2L1788.5 276.2L1785.5 279.9ZM1790.5 272.4L1793.5 268.7L1794.5 268.7L1791.5 272.4ZM1796.5 264.9L1799.5 261.2L1800.5 261.2L1797.5 264.9ZM1802.5 257.9L1805.5 254.6L1806.5 254.6L1803.5 257.9ZM1808.5 250.1L1811.5 244.7L1812.5 244.7L1809.5 250.1Z" fill="#505050"/>
<path d="M1693 374.3L1707.2 372.8L1707.2 373.8L1693 375.3ZM1707.2 372.8L1727.2 367.6L1727.2 368.6L1707.2 373.8ZM1727.2 367.6L1743.5 361.9L1743.5 362.9L1727.2 368.6ZM1743.5 361.9L1759.5 354.2L1759.5 355.2L1743.5 362.9ZM1759.5 354.2L1767.6 349.9L1767.6 350.9L1759.5 355.2ZM1767.6 349.9L1775.6 342.7L1775.6 343.7L1767.6 350.9ZM1775.6 342.7L1783.6 335L1783.6 336L1775.6 343.7ZM1783.6 335L1791.6 327L1791.6 328L1783.6 336ZM1791.6 327L1799.6 319.8L1799.6 320.8L1791.6 328ZM1799.6 319.8L1807.3 312.7L1807.3 313.7L1799.6 320.8ZM1807.3 312.7L1815.4 306.9L1815.4 307.9L1807.3 313.7Z" fill="#505050"/>
<line x1="1430" y1="94.5" x2="1839" y2="94.5" stroke="#daa520" stroke-width="1"/>
<rect x="1815" y="41" width="3" height="1" fill="#ff1493"/>
<rect x="1813" y="43" width="1" height="1" fill="#ff1493"/>
<rect x="1813" y="45" width="1" height="1" fill="#ff1493"/>
<rect x="1817" y="43" width="1" height="1" fill="#ff1493"/>
<rect x="1817" y="45" width="1" height="1" fill="#ff1493"/>
<rect x="1815" y="371" width="3" height="1" fill="#ff1493"/>
<rect x="1813" y="372" width="1" height="1" fill="#ff1493"/>
<rect x="1813" y="374" width="1" height="1" fill="#ff1493"/>
<rect x="1817" y="372" width="1" height="1" fill="#ff1493"/>
<rect x="1817" y="374" width="1" height="1" fill="#ff1493"/>
<rect x="1823" y="360" width="15" height="15" fill="#e00000"/>
<rect x="1828" y="368" width="7" height="1" fill="#fff"/><rect x="1831" y="365" width="1" height="7" fill="#fff"/>
<text x="1815.7" y="377" font-size="16.8" fill="#808080" letter-spacing="-0.4">01:00</text>
</g>
<rect x="1430.5" y="40.5" width="408" height="335" fill="none" stroke="#000"/>
<rect x="1430.5" y="377.5" width="408" height="23" fill="none" stroke="#000"/>
<polygon points="1431,394 1431,400 1437,400" fill="#c0c0c0"/>
<g clip-path="url(#s139881247097536)">
</g>
<rect x="1839" y="383" width="3" height="1" fill="#000"/><rect x="1839" y="392" width="3" height="1" fill="#000"/>
<text x="1843" y="389.6" font-size="12.6">2</text><text x="1842" y="397" font-size="12.6">0.00</text>
<line x1="1455.5" y1="378" x2="1455.5" y2="400" stroke="#000" stroke-dasharray="3 3"/>
<line x1="1551.5" y1="378" x2="1551.5" y2="400" stroke="#000" stroke-dasharray="3 3"/>
<line x1="1647.5" y1="378" x2="1647.5" y2="400" stroke="#000" stroke-dasharray="3 3"/>
<line x1="1743.5" y1="378" x2="1743.5" y2="400" stroke="#000" stroke-dasharray="3 3"/>
<line x1="1815.5" y1="378" x2="1815.5" y2="400" stroke="#ff1493" stroke-dasharray="3 3"/>
<polygon points="1434,48 1443,48 1438.5,53" fill="#000"/>
<text x="1449.5" y="55" font-size="12" fill="#000" textLength="93" lengthAdjust="spacing">XAUUSD,Monthly</text>
<rect x="1466" y="56" width="32" height="30" fill="#d3d3d3"/>
<rect x="1466" y="56" width="30" height="13" fill="#a9a9a9"/>
<rect x="1468" y="72" width="14" height="13" fill="#a9a9a9"/><rect x="1484" y="72" width="14" height="13" fill="#a9a9a9"/>
<text x="1482" y="68" font-size="15" fill="#767676" text-anchor="middle">Y1</text>
<polygon points="1469,73.5 1481,73.5 1475,83.5" fill="#000"/><polygon points="1485,82.5 1497,82.5 1491,72.5" fill="#000"/>
<rect x="1839" y="62" width="3" height="1" fill="#000"/>
<text x="1845" y="67" font-size="12.6" fill="#000">4246.82</text>
<rect x="1839" y="111" width="3" height="1" fill="#000"/>
<text x="1845" y="116" font-size="12.6" fill="#000">3871.82</text>
<rect x="1839" y="161" width="3" height="1" fill="#000"/>
<text x="1845" y="166" font-size="12.6" fill="#000">3504.32</text>
<rect x="1839" y="209" width="3" height="1" fill="#000"/>
<text x="1845" y="214" font-size="12.6" fill="#000">3129.32</text>
<rect x="1839" y="258" width="3" height="1" fill="#000"/>
<text x="1845" y="263" font-size="12.6" fill="#000">2761.82</text>
<rect x="1839" y="307" width="3" height="1" fill="#000"/>
<text x="1845" y="312" font-size="12.6" fill="#000">2386.82</text>
<rect x="1839" y="356" width="3" height="1" fill="#000"/>
<text x="1845" y="361" font-size="12.6" fill="#000">2019.32</text>
<rect x="1840" y="88" width="56" height="14" fill="#daa520"/>
<text x="1845" y="99.6" font-size="12.6" fill="#fff">4000.00</text>
<rect x="1840" y="83" width="56" height="14" fill="#c0c0c0"/>
<text x="1845" y="94.6" font-size="12.6" fill="#fff">4038.69</text>
<rect x="1840" y="63" width="56" height="14" fill="#000"/>
<text x="1845" y="74.6" font-size="12.6" fill="#fff">4186.75</text>
<rect x="1431" y="401" width="1" height="3" fill="#000"/>
<text x="1429.7" y="416" font-size="12.8" fill="#000">1 Oct 2021</text>
<rect x="1527" y="401" width="1" height="3" fill="#000"/>
<text x="1525.7" y="416" font-size="12.8" fill="#000">1 Oct 2022</text>
<rect x="1623" y="401" width="1" height="3" fill="#000"/>
<text x="1621.7" y="416" font-size="12.8" fill="#000">1 Oct 2023</text>
<rect x="1719" y="401" width="1" height="3" fill="#000"/>
<text x="1717.7" y="416" font-size="12.8" fill="#000">1 Oct 2024</text>
<rect x="1815" y="401" width="1" height="3" fill="#000"/>
<text x="1813.7" y="416" font-size="12.8" fill="#000">1 Oct 2025</text>
</svg>
</div></div>
<div class="win" style="left:-1px;top:435px;width:689px;height:437px">
<svg class="ico" width="19" height="19" viewBox="0 0 19 19" shape-rendering="crispEdges"><rect x="0" y="0" width="15" height="11" fill="#5b8ff9"/><rect x="1" y="3" width="13" height="7" fill="#fff"/><path d="M3 5.5h2M4.5 4v2M8.5 4v2M8.5 5.5h2" stroke="#5b8ff9" fill="none"/><rect x="1" y="0" width="2" height="1" fill="#4c8d6a"/><rect x="5" y="0" width="1" height="3" fill="#4c8d6a"/><rect x="10" y="0" width="1" height="3" fill="#4c8d6a"/><rect x="13" y="0" width="1" height="1" fill="#4c8d6a"/><rect x="0" y="3" width="1" height="1" fill="#4c8d6a"/><rect x="0" y="6" width="1" height="1" fill="#4c8d6a"/><rect x="0" y="9" width="1" height="1" fill="#4c8d6a"/><rect x="14" y="2" width="1" height="2" fill="#4c8d6a"/><rect x="14" y="5" width="1" height="1" fill="#4c8d6a"/><rect x="2" y="10" width="1" height="1" fill="#4c8d6a"/><rect x="4" y="6" width="14" height="12" fill="#5b8ff9"/><rect x="5" y="9" width="11" height="7" fill="#fff"/><rect x="6" y="6" width="2" height="1" fill="#4c8d6a"/><rect x="10" y="6" width="1" height="2" fill="#4c8d6a"/><rect x="14" y="6" width="1" height="2" fill="#4c8d6a"/><rect x="4" y="10" width="1" height="1" fill="#4c8d6a"/><rect x="4" y="13" width="1" height="1" fill="#4c8d6a"/><rect x="4" y="16" width="1" height="1" fill="#4c8d6a"/><rect x="16" y="9" width="2" height="1" fill="#4c8d6a"/><rect x="16" y="12" width="2" height="2" fill="#4c8d6a"/><rect x="16" y="15" width="2" height="1" fill="#4c8d6a"/><rect x="6" y="16" width="2" height="2" fill="#4c8d6a"/><rect x="11" y="16" width="1" height="2" fill="#4c8d6a"/><rect x="14" y="16" width="1" height="2" fill="#4c8d6a"/><rect x="6" y="10" width="2" height="1" fill="#5b8ff9"/><rect x="8" y="11" width="1" height="3" fill="#5b8ff9"/><rect x="9" y="14" width="1" height="1" fill="#5b8ff9"/><rect x="10" y="11" width="1" height="3" fill="#5b8ff9"/><rect x="11" y="10" width="2" height="1" fill="#5b8ff9"/><rect x="13" y="11" width="1" height="3" fill="#5b8ff9"/><rect x="14" y="14" width="1" height="1" fill="#5b8ff9"/></svg>
<div class="tt">XAUUSD,M15</div>
<div class="b n" style="left:547px"><svg width="42" height="24" viewBox="0 0 42 24"><rect x="12.5" y="10.5" width="16" height="5" rx="1" fill="url(#gw)" stroke="#4b4f63"/></svg></div>
<div class="b m" style="left:591px"><svg width="42" height="24" viewBox="0 0 42 24"><path fill-rule="evenodd" d="M12.5 4.5h16v14h-16zM16.5 8.5v6h8v-6z" fill="url(#gw)" stroke="#4b4f63" stroke-linejoin="round"/></svg></div>
<div class="b x" style="left:635px"><svg width="42" height="24" viewBox="0 0 42 24"><path d="M11.8 5.9L13.3 4.4H17L20.3 8L23.6 4.4H27.3L28.8 5.9L23.2 11.4L28.8 16.9L27.3 18.4H23.6L20.3 14.8L17 18.4H13.3L11.8 16.9L17.4 11.4Z" fill="url(#gw)" stroke="#4b4f63" stroke-linejoin="round"/></svg></div>
<div class="cl" style="width:671px;height:390px">
<svg width="671" height="390" viewBox="8 473 671 390" font-family='"Liberation Sans", sans-serif' shape-rendering="crispEdges">
<defs><clipPath id="c139881247110592"><rect x="13" y="478" width="600" height="334"/></clipPath><clipPath id="s139881247110592"><rect x="13" y="815" width="600" height="22"/></clipPath></defs>
<rect x="8" y="473" width="671" height="390" fill="#fff"/>
<rect x="8" y="473" width="671" height="1" fill="#a0a0a0"/><rect x="8" y="473" width="1" height="390" fill="#a0a0a0"/>
<rect x="9" y="474" width="669" height="1" fill="#696969"/><rect x="9" y="474" width="1" height="388" fill="#696969"/>
<rect x="9" y="861" width="669" height="1" fill="#e3e3e3"/><rect x="677" y="474" width="1" height="388" fill="#e3e3e3"/>
<rect x="8" y="862" width="671" height="1" fill="#fff"/><rect x="678" y="473" width="1" height="390" fill="#fff"/>
<g clip-path="url(#c139881247110592)">
<line x1="461.5" y1="478" x2="461.5" y2="812" stroke="#000" stroke-width="1" stroke-dasharray="3 3"/>
<line x1="301.5" y1="478" x2="301.5" y2="812" stroke="#ff1493" stroke-width="1" stroke-dasharray="3 3"/>
<rect x="13" y="729" width="1" height="33" fill="#000"/>
<rect x="11" y="731" width="5" height="30" fill="#000"/>
<rect x="21" y="751" width="1" height="40" fill="#00bfff"/>
<rect x="19" y="754" width="5" height="6" fill="#00bfff"/>
<rect x="29" y="731" width="1" height="37" fill="#000"/>
<rect x="27" y="754" width="5" height="8" fill="#000"/>
<rect x="37" y="753" width="1" height="40" fill="#000"/>
<rect x="35" y="761" width="5" height="20" fill="#000"/>
<rect x="45" y="770" width="1" height="35" fill="#00bfff"/>
<rect x="43" y="778" width="5" height="5" fill="#00bfff"/>
<rect x="53" y="743" width="1" height="42" fill="#00bfff"/>
<rect x="51" y="757" width="5" height="22" fill="#00bfff"/>
<rect x="61" y="744" width="1" height="15" fill="#00bfff"/>
<rect x="59" y="747" width="5" height="9" fill="#00bfff"/>
<rect x="69" y="742" width="1" height="17" fill="#000"/>
<rect x="67" y="748" width="5" height="7" fill="#000"/>
<rect x="77" y="715" width="1" height="40" fill="#00bfff"/>
<rect x="75" y="718" width="5" height="37" fill="#00bfff"/>
<rect x="85" y="696" width="1" height="29" fill="#000"/>
<rect x="83" y="717" width="5" height="4" fill="#000"/>
<rect x="93" y="699" width="1" height="24" fill="#00bfff"/>
<rect x="91" y="708" width="5" height="13" fill="#00bfff"/>
<rect x="101" y="706" width="1" height="30" fill="#000"/>
<rect x="99" y="708" width="5" height="28" fill="#000"/>
<rect x="109" y="718" width="1" height="23" fill="#00bfff"/>
<rect x="107" y="727" width="5" height="9" fill="#00bfff"/>
<rect x="117" y="713" width="1" height="18" fill="#000"/>
<rect x="115" y="727" width="5" height="2" fill="#000"/>
<rect x="125" y="706" width="1" height="24" fill="#00bfff"/>
<rect x="123" y="718" width="5" height="11" fill="#00bfff"/>
<rect x="133" y="699" width="1" height="25" fill="#00bfff"/>
<rect x="131" y="712" width="5" height="7" fill="#00bfff"/>
<rect x="141" y="704" width="1" height="14" fill="#00bfff"/>
<rect x="139" y="704" width="5" height="8" fill="#00bfff"/>
<rect x="149" y="703" width="1" height="27" fill="#000"/>
<rect x="147" y="704" width="5" height="20" fill="#000"/>
<rect x="157" y="681" width="1" height="50" fill="#00bfff"/>
<rect x="155" y="682" width="5" height="42" fill="#00bfff"/>
<rect x="165" y="669" width="1" height="31" fill="#00bfff"/>
<rect x="163" y="679" width="5" height="6" fill="#00bfff"/>
<rect x="173" y="656" width="1" height="24" fill="#00bfff"/>
<rect x="171" y="661" width="5" height="19" fill="#00bfff"/>
<rect x="181" y="653" width="1" height="39" fill="#000"/>
<rect x="179" y="662" width="5" height="23" fill="#000"/>
<rect x="189" y="644" width="1" height="45" fill="#00bfff"/>
<rect x="187" y="648" width="5" height="37" fill="#00bfff"/>
<rect x="197" y="616" width="1" height="41" fill="#00bfff"/>
<rect x="195" y="619" width="5" height="30" fill="#00bfff"/>
<rect x="205" y="591" width="1" height="32" fill="#00bfff"/>
<rect x="203" y="600" width="5" height="21" fill="#00bfff"/>
<rect x="213" y="589" width="1" height="41" fill="#000"/>
<rect x="211" y="600" width="5" height="3" fill="#000"/>
<rect x="221" y="601" width="1" height="62" fill="#000"/>
<rect x="219" y="603" width="5" height="49" fill="#000"/>
<rect x="229" y="611" width="1" height="43" fill="#00bfff"/>
<rect x="227" y="619" width="5" height="33" fill="#00bfff"/>
<rect x="237" y="614" width="1" height="54" fill="#000"/>
<rect x="235" y="620" width="5" height="36" fill="#000"/>
<rect x="245" y="624" width="1" height="46" fill="#00bfff"/>
<rect x="243" y="625" width="5" height="31" fill="#00bfff"/>
<rect x="253" y="585" width="1" height="44" fill="#00bfff"/>
<rect x="251" y="619" width="5" height="8" fill="#00bfff"/>
<rect x="261" y="584" width="1" height="36" fill="#00bfff"/>
<rect x="259" y="589" width="5" height="31" fill="#00bfff"/>
<rect x="269" y="580" width="1" height="41" fill="#00bfff"/>
<rect x="267" y="585" width="5" height="5" fill="#00bfff"/>
<rect x="277" y="563" width="1" height="32" fill="#000"/>
<rect x="275" y="585" width="5" height="8" fill="#000"/>
<rect x="285" y="589" width="1" height="71" fill="#000"/>
<rect x="283" y="592" width="5" height="62" fill="#000"/>
<rect x="293" y="649" width="1" height="56" fill="#000"/>
<rect x="291" y="654" width="5" height="30" fill="#000"/>
<rect x="301" y="636" width="1" height="62" fill="#000"/>
<rect x="299" y="682" width="5" height="7" fill="#000"/>
<rect x="309" y="646" width="1" height="47" fill="#00bfff"/>
<rect x="307" y="668" width="5" height="20" fill="#00bfff"/>
<rect x="317" y="618" width="1" height="53" fill="#00bfff"/>
<rect x="315" y="630" width="5" height="37" fill="#00bfff"/>
<rect x="325" y="626" width="1" height="32" fill="#000"/>
<rect x="323" y="630" width="5" height="3" fill="#000"/>
<rect x="333" y="591" width="1" height="42" fill="#00bfff"/>
<rect x="331" y="608" width="5" height="25" fill="#00bfff"/>
<rect x="341" y="595" width="1" height="22" fill="#000"/>
<rect x="339" y="608" width="5" height="6" fill="#000"/>
<rect x="349" y="583" width="1" height="32" fill="#00bfff"/>
<rect x="347" y="586" width="5" height="28" fill="#00bfff"/>
<rect x="357" y="579" width="1" height="36" fill="#000"/>
<rect x="355" y="586" width="5" height="27" fill="#000"/>
<rect x="365" y="604" width="1" height="41" fill="#00bfff"/>
<rect x="363" y="604" width="5" height="9" fill="#00bfff"/>
<rect x="373" y="598" width="1" height="20" fill="#000"/>
<rect x="371" y="604" width="5" height="13" fill="#000"/>
<rect x="381" y="600" width="1" height="24" fill="#00bfff"/>
<rect x="379" y="604" width="5" height="12" fill="#00bfff"/>
<rect x="389" y="601" width="1" height="17" fill="#000"/>
<rect x="387" y="604" width="5" height="7" fill="#000"/>
<rect x="397" y="600" width="1" height="23" fill="#000"/>
<rect x="395" y="611" width="5" height="9" fill="#000"/>
<rect x="405" y="606" width="1" height="16" fill="#00bfff"/>
<rect x="403" y="616" width="5" height="4" fill="#00bfff"/>
<rect x="413" y="603" width="1" height="18" fill="#00bfff"/>
<rect x="411" y="613" width="5" height="4" fill="#00bfff"/>
<rect x="421" y="605" width="1" height="17" fill="#000"/>
<rect x="419" y="613" width="5" height="3" fill="#000"/>
<rect x="429" y="607" width="1" height="9" fill="#00bfff"/>
<rect x="427" y="608" width="5" height="8" fill="#00bfff"/>
<rect x="437" y="600" width="1" height="16" fill="#00bfff"/>
<rect x="435" y="604" width="5" height="4" fill="#00bfff"/>
<rect x="445" y="597" width="1" height="13" fill="#00bfff"/>
<rect x="443" y="598" width="5" height="7" fill="#00bfff"/>
<rect x="453" y="586" width="1" height="14" fill="#00bfff"/>
<rect x="451" y="596" width="5" height="3" fill="#00bfff"/>
<rect x="461" y="574" width="1" height="27" fill="#00bfff"/>
<rect x="459" y="575" width="5" height="23" fill="#00bfff"/>
<rect x="469" y="565" width="1" height="12" fill="#00bfff"/>
<rect x="467" y="565" width="5" height="11" fill="#00bfff"/>
<rect x="477" y="565" width="1" height="11" fill="#000"/>
<rect x="475" y="566" width="5" height="2" fill="#000"/>
<rect x="485" y="568" width="1" height="15" fill="#000"/>
<rect x="483" y="568" width="5" height="3" fill="#000"/>
<rect x="493" y="557" width="1" height="15" fill="#00bfff"/>
<rect x="491" y="568" width="5" height="3" fill="#00bfff"/>
<rect x="501" y="558" width="1" height="19" fill="#000"/>
<rect x="499" y="568" width="5" height="6" fill="#000"/>
<rect x="509" y="564" width="1" height="12" fill="#00bfff"/>
<rect x="507" y="567" width="5" height="7" fill="#00bfff"/>
<rect x="517" y="540" width="1" height="28" fill="#00bfff"/>
<rect x="515" y="548" width="5" height="20" fill="#00bfff"/>
<rect x="525" y="532" width="1" height="17" fill="#00bfff"/>
<rect x="523" y="536" width="5" height="13" fill="#00bfff"/>
<rect x="533" y="524" width="1" height="15" fill="#00bfff"/>
<rect x="531" y="528" width="5" height="9" fill="#00bfff"/>
<rect x="541" y="529" width="1" height="43" fill="#000"/>
<rect x="539" y="529" width="5" height="16" fill="#000"/>
<rect x="549" y="532" width="1" height="29" fill="#000"/>
<rect x="547" y="544" width="5" height="14" fill="#000"/>
<rect x="557" y="557" width="1" height="39" fill="#000"/>
<rect x="555" y="558" width="5" height="18" fill="#000"/>
<rect x="565" y="542" width="1" height="52" fill="#00bfff"/>
<rect x="563" y="549" width="5" height="27" fill="#00bfff"/>
<rect x="573" y="540" width="1" height="24" fill="#000"/>
<rect x="571" y="550" width="5" height="1" fill="#000"/>
<rect x="581" y="518" width="1" height="34" fill="#00bfff"/>
<rect x="579" y="518" width="5" height="33" fill="#00bfff"/>
<rect x="589" y="498" width="1" height="45" fill="#00bfff"/>
<rect x="587" y="498" width="5" height="21" fill="#00bfff"/>
<rect x="597" y="492" width="1" height="20" fill="#000"/>
<rect x="595" y="498" width="5" height="5" fill="#000"/>
<rect x="605" y="486" width="1" height="18" fill="#00bfff"/>
<rect x="603" y="489" width="5" height="15" fill="#00bfff"/>
<path d="M12.5 621.9L22.4 617.8L22.4 618.8L12.5 622.9ZM22.4 617.8L30.6 613.7L30.6 614.7L22.4 618.8ZM30.6 613.7L38.9 609.6L38.9 610.6L30.6 614.7ZM38.9 609.6L53.3 608.5L53.3 609.5L38.9 610.6ZM53.3 608.5L61.5 614.7L61.5 615.7L53.3 609.5ZM61 615.2L69.3 624.5L70.3 624.5L62 615.2ZM69.3 624.5L79.6 635.8L80.6 635.8L70.3 624.5ZM79.6 635.8L87.9 646.1L88.9 646.1L80.6 635.8ZM87.9 646.1L92 652.4L93 652.4L88.9 646.1ZM92 652.4L101.3 670.9L102.3 670.9L93 652.4ZM101.8 670.4L113.1 676.6L113.1 677.6L101.8 671.4ZM113.1 676.6L125.5 680.7L125.5 681.7L113.1 677.6ZM125.5 680.7L137.8 685.9L137.8 686.9L125.5 681.7ZM137.8 685.9L149.4 693.1L149.4 694.1L137.8 686.9ZM148.9 693.6L156.9 684.3L157.9 684.3L149.9 693.6ZM156.9 684.3L165 676.1L166 676.1L157.9 684.3ZM165 676.1L173 663.7L174 663.7L166 676.1ZM173 663.7L181 655.5L182 655.5L174 663.7ZM181 655.5L188.9 646.2L189.9 646.2L182 655.5ZM188.9 646.2L196.9 633.8L197.9 633.8L189.9 646.2ZM196.9 633.8L205 617.3L206 617.3L197.9 633.8ZM205 617.3L213 603.9L214 603.9L206 617.3ZM213.5 603.4L221.5 600.3L221.5 601.3L213.5 604.4ZM221.5 600.3L229.4 594.1L229.4 595.1L221.5 601.3ZM229.4 594.1L237.4 592L237.4 593L229.4 595.1ZM237.4 592L245.5 587.5L245.5 588.5L237.4 593ZM245.5 587.5L253.5 581.7L253.5 582.7L245.5 588.5ZM253 582.2L261 571.9L262 571.9L254 582.2ZM261 571.9L268.9 563.7L269.9 563.7L262 571.9ZM269.4 563.2L277.4 559.4L277.4 560.4L269.4 564.2ZM277.4 559.4L285.5 561.1L285.5 562.1L277.4 560.4ZM285.5 561.1L293.5 564.2L293.5 565.2L285.5 562.1ZM293.5 564.2L301.5 565.6L301.5 566.6L293.5 565.2ZM301.5 565.6L308.2 570.4L308.2 571.4L301.5 566.6ZM308.2 570.4L317.5 571.4L317.5 572.4L308.2 571.4ZM317.5 571.4L325.6 571.8L325.6 572.8L317.5 572.4ZM325.6 571.8L333.6 568.9L333.6 569.9L325.6 572.8ZM333.6 568.9L341.4 569.3L341.4 570.3L333.6 569.9ZM341.4 569.3L349.5 564.2L349.5 565.2L341.4 570.3ZM349.5 564.2L357.5 563.6L357.5 564.6L349.5 565.2ZM357.5 563.6L365.6 565.2L365.6 566.2L357.5 564.6ZM365.6 565.2L373.6 565.6L373.6 566.6L365.6 566.2ZM373.6 565.6L381.4 564.2L381.4 565.2L373.6 566.6ZM381.4 564.2L389.5 563.2L389.5 564.2L381.4 565.2ZM389.5 563.2L397.5 563.2L397.5 564.2L389.5 564.2ZM397.5 563.2L405.6 562.7L405.6 563.7L397.5 564.2ZM405.6 562.7L413.6 562.1L413.6 563.1L405.6 563.7ZM413.6 562.1L421.4 565.2L421.4 566.2L413.6 563.1ZM421.4 565.2L429.5 568.9L429.5 569.9L421.4 566.2ZM429.5 568.9L437.5 569.8L437.5 570.8L429.5 569.9ZM437.5 569.8L445.6 568.3L445.6 569.3L437.5 570.8ZM445.6 568.3L453.6 571L453.6 572L445.6 569.3ZM453.6 571L461.4 575.5L461.4 576.5L453.6 572ZM461.4 575.5L469.5 571.4L469.5 572.4L461.4 576.5ZM469.5 571.4L477.5 568.3L477.5 569.3L469.5 572.4ZM477.5 568.3L485.6 565.2L485.6 566.2L477.5 569.3ZM485.6 565.2L493.6 562.7L493.6 563.7L485.6 566.2ZM493.6 562.7L501.4 560.1L501.4 561.1L493.6 563.7ZM501.4 560.1L509.5 555.9L509.5 556.9L501.4 561.1ZM509 556.4L517 547.2L518 547.2L510 556.4ZM517 547.2L525.1 535.8L526.1 535.8L518 547.2ZM525.6 535.3L533.6 528.1L533.6 529.1L525.6 536.3ZM533.6 528.1L541.4 524L541.4 525L533.6 529.1ZM541.4 524L549.5 522.3L549.5 523.3L541.4 525ZM549.5 522.3L557.5 523.6L557.5 524.6L549.5 523.3ZM557.5 523.6L565.6 523L565.6 524L557.5 524.6ZM565.6 523L573.6 521.5L573.6 522.5L565.6 524ZM573.6 521.5L581.4 516.8L581.4 517.8L573.6 522.5ZM580.9 517.3L589 508L590 508L581.9 517.3ZM589 508L597 498.7L598 498.7L590 508ZM597.5 498.2L605.6 492L605.6 493L597.5 499.2Z" fill="#505050"/>
<path d="M12.5 652.9L38.9 653.5L38.9 654.5L12.5 653.9ZM38.9 653.5L51.2 658.1L51.2 659.1L38.9 654.5ZM51.2 658.1L61.5 666.3L61.5 667.3L51.2 659.1ZM61.5 666.3L71.9 674.6L71.9 675.6L61.5 667.3ZM71.9 674.6L82.2 681.8L82.2 682.8L71.9 675.6ZM82.2 681.8L92.5 689L92.5 690L82.2 682.8ZM92 689.5L101.3 700.2L102.3 700.2L93 689.5ZM101.8 699.7L113.1 704.4L113.1 705.4L101.8 700.7ZM113.1 704.4L125.5 707.1L125.5 708.1L113.1 705.4ZM125.5 707.1L137.8 710.6L137.8 711.6L125.5 708.1ZM137.8 710.6L149.4 712.7L149.4 713.7L137.8 711.6ZM149.4 712.7L157.4 710.6L157.4 711.6L149.4 713.7ZM157.4 710.6L165.5 703.4L165.5 704.4L157.4 711.6ZM165 703.9L173 695.7L174 695.7L166 703.9ZM173.5 695.2L181.5 692.1L181.5 693.1L173.5 696.2ZM181 692.6L188.9 684.3L189.9 684.3L182 692.6ZM188.9 684.3L196.9 670.9L197.9 670.9L189.9 684.3ZM196.9 670.9L205 658.6L206 658.6L197.9 670.9ZM205 658.6L213 648.2L214 648.2L206 658.6ZM213.5 647.7L229.4 638.4L229.4 639.4L213.5 648.7ZM229.4 638.4L237.4 635.3L237.4 636.3L229.4 639.4ZM237.4 635.3L245.5 628.1L245.5 629.1L237.4 636.3ZM245.5 628.1L253.5 621.9L253.5 622.9L245.5 629.1ZM253.5 621.9L261.5 614.7L261.5 615.7L253.5 622.9ZM261.5 614.7L269.4 608.1L269.4 609.1L261.5 615.7ZM269.4 608.1L277.4 604L277.4 605L269.4 609.1ZM277.4 604L285.5 604L285.5 605L277.4 605ZM285.5 604L293.5 604.4L293.5 605.4L285.5 605ZM293.5 604.4L301.5 605L301.5 606L293.5 605.4ZM301.5 605L308.2 605.6L308.2 606.6L301.5 606ZM308.2 605.6L317.5 604.8L317.5 605.8L308.2 606.6ZM317.5 604.8L325.6 602.7L325.6 603.7L317.5 605.8ZM325.6 602.7L333.6 600.3L333.6 601.3L325.6 603.7ZM333.6 600.3L341.4 599.2L341.4 600.2L333.6 601.3ZM341.4 599.2L349.5 595.1L349.5 596.1L341.4 600.2ZM349.5 595.1L357.5 594.1L357.5 595.1L349.5 596.1ZM357.5 594.1L365.6 594.5L365.6 595.5L357.5 595.1ZM365.6 594.5L373.6 595.1L373.6 596.1L365.6 595.5ZM373.6 595.1L381.4 594.5L381.4 595.5L373.6 596.1ZM381.4 594.5L389.5 593.1L389.5 594.1L381.4 595.5ZM389.5 593.1L397.5 592.4L397.5 593.4L389.5 594.1ZM397.5 592.4L405.6 592L405.6 593L397.5 593.4ZM405.6 592L413.6 593.1L413.6 594.1L405.6 593ZM413.6 593.1L421.4 594.5L421.4 595.5L413.6 594.1ZM421.4 594.5L429.5 596.1L429.5 597.1L421.4 595.5ZM429.5 596.1L437.5 596.6L437.5 597.6L429.5 597.1ZM437.5 596.6L445.6 595.1L445.6 596.1L437.5 597.6ZM445.6 595.1L453.6 594.1L453.6 595.1L445.6 596.1ZM453.6 594.1L461.4 593.1L461.4 594.1L453.6 595.1ZM461.4 593.1L469.5 588.9L469.5 589.9L461.4 594.1ZM469.5 588.9L477.5 585.8L477.5 586.8L469.5 589.9ZM477.5 585.8L485.6 582.7L485.6 583.7L477.5 586.8ZM485.6 582.7L493.6 580.7L493.6 581.7L485.6 583.7ZM493.6 580.7L501.4 577.2L501.4 578.2L493.6 581.7ZM501.4 577.2L509.5 575.9L509.5 576.9L501.4 578.2ZM509.5 575.9L517.5 570.4L517.5 571.4L509.5 576.9ZM517.5 570.4L525.6 563.2L525.6 564.2L517.5 571.4ZM525.6 563.2L533.6 555.9L533.6 556.9L525.6 564.2ZM533.6 555.9L541.4 552.4L541.4 553.4L533.6 556.9ZM541.4 552.4L549.5 551.2L549.5 552.2L541.4 553.4ZM549.5 551.2L557.5 549.8L557.5 550.8L549.5 552.2ZM557.5 549.8L565.6 548.3L565.6 549.3L557.5 550.8ZM565.6 548.3L573.6 546.7L573.6 547.7L565.6 549.3ZM573.6 546.7L581.4 541.5L581.4 542.5L573.6 547.7ZM580.9 542L589 533.8L590 533.8L581.9 542ZM589.5 533.3L597.5 526.5L597.5 527.5L589.5 534.3ZM597.5 526.5L605.6 521.9L605.6 522.9L597.5 527.5Z" fill="#505050"/>
<path d="M12.5 683.2L22.4 686.5L22.4 687.5L12.5 684.2ZM22.4 686.5L34.7 693.5L34.7 694.5L22.4 687.5ZM34.7 693.5L51.2 702.4L51.2 703.4L34.7 694.5ZM51.2 702.4L63.6 709.2L63.6 710.2L51.2 703.4ZM63.6 709.2L77.4 717.4L77.4 718.4L63.6 710.2ZM77.4 717.4L85.5 722L85.5 723L77.4 718.4ZM85.5 722L93.5 726.1L93.5 727.1L85.5 723ZM93.5 726.1L101.5 730.2L101.5 731.2L93.5 727.1ZM101.5 730.2L109.6 732.3L109.6 733.3L101.5 731.2ZM109.6 732.3L125.5 733.9L125.5 734.9L109.6 733.3ZM125.5 733.9L137.8 735.4L137.8 736.4L125.5 734.9ZM137.8 735.4L149.4 736.8L149.4 737.8L137.8 736.4ZM149.4 736.8L157.4 735.4L157.4 736.4L149.4 737.8ZM157.4 735.4L165.5 731.9L165.5 732.9L157.4 736.4ZM165.5 731.9L173.5 727.1L173.5 728.1L165.5 732.9ZM173.5 727.1L181.5 723.6L181.5 724.6L173.5 728.1ZM181.5 723.6L189.4 716.8L189.4 717.8L181.5 724.6ZM189.4 716.8L197.4 709.6L197.4 710.6L189.4 717.8ZM196.9 710.1L205 700.8L206 700.8L197.9 710.1ZM205 700.8L213 692.6L214 692.6L206 700.8ZM213.5 692.1L221.5 685.9L221.5 686.9L213.5 693.1ZM221.5 685.9L229.4 680.7L229.4 681.7L221.5 686.9ZM229.4 680.7L237.4 677.6L237.4 678.6L229.4 681.7ZM237.4 677.6L245.5 672.5L245.5 673.5L237.4 678.6ZM245.5 672.5L253.5 666.3L253.5 667.3L245.5 673.5ZM253.5 666.3L261.5 659.1L261.5 660.1L253.5 667.3ZM261.5 659.1L269.4 651.9L269.4 652.9L261.5 660.1ZM269.4 651.9L277.4 646.7L277.4 647.7L269.4 652.9ZM277.4 646.7L285.5 643.6L285.5 644.6L277.4 647.7ZM285.5 643.6L293.5 642.6L293.5 643.6L285.5 644.6ZM293.5 642.6L301.5 641.1L301.5 642.1L293.5 643.6ZM301.5 641.1L308.2 639.4L308.2 640.4L301.5 642.1ZM308.2 639.4L317.5 637.4L317.5 638.4L308.2 640.4ZM317.5 637.4L325.6 634.3L325.6 635.3L317.5 638.4ZM325.6 634.3L333.6 632.2L333.6 633.2L325.6 635.3ZM333.6 632.2L341.4 628.1L341.4 629.1L333.6 633.2ZM341.4 628.1L349.5 626L349.5 627L341.4 629.1ZM349.5 626L357.5 626L357.5 627L349.5 627ZM357.5 626L365.6 626L365.6 627L357.5 627ZM365.6 626L373.6 627.1L373.6 628.1L365.6 627ZM373.6 627.1L381.4 625L381.4 626L373.6 628.1ZM381.4 625L389.5 623.4L389.5 624.4L381.4 626ZM389.5 623.4L397.5 622.5L397.5 623.5L389.5 624.4ZM397.5 622.5L405.6 621.9L405.6 622.9L397.5 623.5ZM405.6 621.9L413.6 621.3L413.6 622.3L405.6 622.9ZM413.6 621.3L421.4 622.5L421.4 623.5L413.6 622.3ZM421.4 622.5L429.5 624L429.5 625L421.4 623.5ZM429.5 624L437.5 624L437.5 625L429.5 625ZM437.5 624L445.6 620.9L445.6 621.9L437.5 625ZM445.6 620.9L453.6 616.8L453.6 617.8L445.6 621.9ZM453.6 616.8L461.4 610.2L461.4 611.2L453.6 617.8ZM461.4 610.2L469.5 604.4L469.5 605.4L461.4 611.2ZM469.5 604.4L477.5 601.3L477.5 602.3L469.5 605.4ZM477.5 601.3L485.6 599.2L485.6 600.2L477.5 602.3ZM485.6 599.2L493.6 597.8L493.6 598.8L485.6 600.2ZM493.6 597.8L501.4 596.1L501.4 597.1L493.6 598.8ZM501.4 596.1L509.5 594.5L509.5 595.5L501.4 597.1ZM509.5 594.5L517.5 592L517.5 593L509.5 595.5ZM517.5 592L525.6 588.9L525.6 589.9L517.5 593ZM525.6 588.9L533.6 584.8L533.6 585.8L525.6 589.9ZM533.6 584.8L541.4 581.7L541.4 582.7L533.6 585.8ZM541.4 581.7L549.5 579.2L549.5 580.2L541.4 582.7ZM549.5 579.2L557.5 577.2L557.5 578.2L549.5 580.2ZM557.5 577.2L565.6 573.5L565.6 574.5L557.5 578.2ZM565.6 573.5L573.6 569.8L573.6 570.8L565.6 574.5ZM573.6 569.8L581.4 565.2L581.4 566.2L573.6 570.8ZM581.4 565.2L589.5 560.1L589.5 561.1L581.4 566.2ZM589.5 560.1L597.5 553.9L597.5 554.9L589.5 561.1ZM597.5 553.9L605.6 549.8L605.6 550.8L597.5 554.9Z" fill="#1fa5a5"/>
<path d="M12.5 714.8L22.4 724L22.4 725L12.5 715.8ZM22.4 724L29.6 730.2L29.6 731.2L22.4 725ZM29.1 730.7L36.9 739L37.9 739L30.1 730.7ZM36.9 739L45 747.2L46 747.2L37.9 739ZM45.5 746.7L53.5 751.9L53.5 752.9L45.5 747.7ZM53.5 751.9L61.5 757L61.5 758L53.5 752.9ZM61.5 757L69.4 760.1L69.4 761.1L61.5 758ZM69.4 760.1L77.4 761.1L77.4 762.1L69.4 761.1ZM77.4 761.1L93.5 759.7L93.5 760.7L77.4 762.1ZM93.5 759.7L101.5 758.7L101.5 759.7L93.5 760.7ZM101.5 758.7L109.6 759.7L109.6 760.7L101.5 759.7ZM109.6 759.7L125.5 759.7L125.5 760.7L109.6 760.7ZM125.5 759.7L141.5 759.1L141.5 760.1L125.5 760.7ZM141.5 759.1L157.4 759.7L157.4 760.7L141.5 760.1ZM157.4 759.7L173.5 759.1L173.5 760.1L157.4 760.7ZM173.5 759.1L181.5 757L181.5 758L173.5 760.1ZM181.5 757L189.4 753.9L189.4 754.9L181.5 758ZM189.4 753.9L197.4 749.8L197.4 750.8L189.4 754.9ZM197.4 749.8L205.5 744.7L205.5 745.7L197.4 750.8ZM205.5 744.7L213.5 739.5L213.5 740.5L205.5 745.7ZM213.5 739.5L221.5 733.3L221.5 734.3L213.5 740.5ZM221.5 733.3L229.4 726.1L229.4 727.1L221.5 734.3ZM229.4 726.1L237.4 722L237.4 723L229.4 727.1ZM237.4 722L245.5 717.9L245.5 718.9L237.4 723ZM245.5 717.9L253.5 713.7L253.5 714.7L245.5 718.9ZM253.5 713.7L261.5 708.6L261.5 709.6L253.5 714.7ZM261.5 708.6L269.4 702.4L269.4 703.4L261.5 709.6ZM269.4 702.4L277.4 695.2L277.4 696.2L269.4 703.4ZM277.4 695.2L285.5 688L285.5 689L277.4 696.2ZM285.5 688L293.5 684.4L293.5 685.4L285.5 689ZM293.5 684.4L301.5 680.7L301.5 681.7L293.5 685.4ZM301.5 680.7L309.4 673.5L309.4 674.5L301.5 681.7ZM309.4 673.5L317.4 668.4L317.4 669.4L309.4 674.5ZM317.4 668.4L325.5 664.7L325.5 665.7L317.4 669.4ZM325.5 664.7L330 662.6L330 663.6L325.5 665.7ZM330 662.6L333.6 662.2L333.6 663.2L330 663.6ZM333.6 662.2L341.4 658.5L341.4 659.5L333.6 663.2ZM341.4 658.5L349.5 657L349.5 658L341.4 659.5ZM349.5 657L365.6 656.4L365.6 657.4L349.5 658ZM365.6 656.4L381.4 653.9L381.4 654.9L365.6 657.4ZM381.4 653.9L389.5 653.5L389.5 654.5L381.4 654.9ZM389.5 653.5L397.5 650.8L397.5 651.8L389.5 654.5ZM397.5 650.8L413.6 650.2L413.6 651.2L397.5 651.8ZM413.6 650.2L429.5 650.2L429.5 651.2L413.6 651.2ZM429.5 650.2L442.3 648.8L442.3 649.8L429.5 651.2ZM442.3 648.8L453.6 639.5L453.6 640.5L442.3 649.8ZM453.1 640L460.9 630.7L461.9 630.7L454.1 640ZM460.9 630.7L469 621.8L470 621.8L461.9 630.7ZM469.5 621.3L477.5 618.8L477.5 619.8L469.5 622.3ZM477.5 618.8L485.6 616.8L485.6 617.8L477.5 619.8ZM485.6 616.8L493.6 615.7L493.6 616.7L485.6 617.8ZM493.6 615.7L501.4 615.1L501.4 616.1L493.6 616.7ZM501.4 615.1L509.5 614.3L509.5 615.3L501.4 616.1ZM509.5 614.3L517.5 613.7L517.5 614.7L509.5 615.3ZM517.5 613.7L525.6 612.2L525.6 613.2L517.5 614.7ZM525.6 612.2L533.6 610.6L533.6 611.6L525.6 613.2ZM533.6 610.6L541.4 609.6L541.4 610.6L533.6 611.6ZM541.4 609.6L549.5 606.5L549.5 607.5L541.4 610.6ZM549.5 606.5L557.5 602.7L557.5 603.7L549.5 607.5ZM557.5 602.7L565.6 598.2L565.6 599.2L557.5 603.7ZM565.6 598.2L573.6 594.1L573.6 595.1L565.6 599.2ZM573.6 594.1L581.4 590L581.4 591L573.6 595.1ZM581.4 590L589.5 585.8L589.5 586.8L581.4 591ZM589.5 585.8L597.5 580.7L597.5 581.7L589.5 586.8ZM597.5 580.7L605.6 577.2L605.6 578.2L597.5 581.7Z" fill="#505050"/>
<path d="M12 747.2L21 757.5L22 757.5L13 747.2ZM21 757.5L29.1 767.8L30.1 767.8L22 757.5ZM29.1 767.8L36.9 780.2L37.9 780.2L30.1 767.8ZM36.9 780.2L45 793.6L46 793.6L37.9 780.2ZM45.5 793.1L53.5 798.3L53.5 799.3L45.5 794.1ZM53.5 798.3L61.5 802.4L61.5 803.4L53.5 799.3ZM61.5 802.4L69.4 805.5L69.4 806.5L61.5 803.4ZM69.4 805.5L77.4 803.4L77.4 804.4L69.4 806.5ZM77.4 803.4L85.5 800.3L85.5 801.3L77.4 804.4ZM85.5 800.3L93.5 796.6L93.5 797.6L85.5 801.3ZM93.5 796.6L101.5 789L101.5 790L93.5 797.6ZM101.5 789L109.6 786.9L109.6 787.9L101.5 790ZM109.6 786.9L125.5 785.5L125.5 786.5L109.6 787.9ZM125.5 785.5L137.8 783.4L137.8 784.4L125.5 786.5ZM137.8 783.4L149.4 781.4L149.4 782.4L137.8 784.4ZM149.4 781.4L157.4 783.8L157.4 784.8L149.4 782.4ZM157.4 783.8L165.5 787.5L165.5 788.5L157.4 784.8ZM165.5 787.5L173.5 790L173.5 791L165.5 788.5ZM173.5 790L181.5 788.4L181.5 789.4L173.5 791ZM181.5 788.4L189.4 787.5L189.4 788.5L181.5 789.4ZM189.4 787.5L205.5 784.9L205.5 785.9L189.4 788.5ZM205.5 784.9L213.5 782.2L213.5 783.2L205.5 785.9ZM213.5 782.2L221.5 775.6L221.5 776.6L213.5 783.2ZM221.5 775.6L229.4 769.4L229.4 770.4L221.5 776.6ZM229.4 769.4L237.4 766.3L237.4 767.3L229.4 770.4ZM237.4 766.3L245.5 762.8L245.5 763.8L237.4 767.3ZM245.5 762.8L253.5 759.1L253.5 760.1L245.5 763.8ZM253.5 759.1L261.5 752.5L261.5 753.5L253.5 760.1ZM261.5 752.5L269.4 746.7L269.4 747.7L261.5 753.5ZM268.9 747.2L276.9 736.9L277.9 736.9L269.9 747.2ZM276.9 736.9L285 727.6L286 727.6L277.9 736.9ZM285.5 727.1L293.5 722L293.5 723L285.5 728.1ZM293.5 722L301.5 718.9L301.5 719.9L293.5 723ZM301 719.4L308.9 711.1L309.9 711.1L302 719.4ZM309.4 710.6L317.4 703.4L317.4 704.4L309.4 711.6ZM317.4 703.4L325.5 699.3L325.5 700.3L317.4 704.4ZM325.5 699.3L330 697.2L330 698.2L325.5 700.3ZM330 697.2L333.6 695.6L333.6 696.6L330 698.2ZM333.6 695.6L341.4 689L341.4 690L333.6 696.6ZM341.4 689L349.5 688L349.5 689L341.4 690ZM349.5 688L365.6 686.9L365.6 687.9L349.5 689ZM365.6 686.9L381.4 684.9L381.4 685.9L365.6 687.9ZM381.4 684.9L389.5 683.8L389.5 684.8L381.4 685.9ZM389.5 683.8L397.5 680.7L397.5 681.7L389.5 684.8ZM397.5 680.7L413.6 679.7L413.6 680.7L397.5 681.7ZM413.6 679.7L429.5 678.7L429.5 679.7L413.6 680.7ZM429.5 678.7L437.5 677L437.5 678L429.5 679.7ZM437.5 677L445.6 674.6L445.6 675.6L437.5 678ZM445.1 675.1L453.1 662.7L454.1 662.7L446.1 675.1ZM453.1 662.7L460.9 646.2L461.9 646.2L454.1 662.7ZM460.9 646.2L466.5 640L467.5 640L461.9 646.2ZM467 639.5L469.5 638.4L469.5 639.4L467 640.5ZM469.5 638.4L477.5 636.4L477.5 637.4L469.5 639.4ZM477.5 636.4L485.6 633.7L485.6 634.7L477.5 637.4ZM485.6 633.7L493.6 634.3L493.6 635.3L485.6 634.7ZM493.6 634.3L501.4 633.7L501.4 634.7L493.6 635.3ZM501.4 633.7L509.5 635.3L509.5 636.3L501.4 634.7ZM509.5 635.3L517.5 637L517.5 638L509.5 636.3ZM517.5 637L525.6 638.4L525.6 639.4L517.5 638ZM525.6 638.4L533.6 638.4L533.6 639.4L525.6 639.4ZM533.6 638.4L541.4 636.4L541.4 637.4L533.6 639.4ZM541.4 636.4L549.5 632.2L549.5 633.2L541.4 637.4ZM549.5 632.2L557.5 627.1L557.5 628.1L549.5 633.2ZM557.5 627.1L565.6 621.9L565.6 622.9L557.5 628.1ZM565.6 621.9L573.6 616.8L573.6 617.8L565.6 622.9ZM573.6 616.8L581.4 612.2L581.4 613.2L573.6 617.8ZM581.4 612.2L589.5 609.6L589.5 610.6L581.4 613.2ZM589.5 609.6L597.5 607.5L597.5 608.5L589.5 610.6ZM597.5 607.5L605.6 605.4L605.6 606.4L597.5 608.5Z" fill="#505050"/>
<line x1="12" y1="520.5" x2="614" y2="520.5" stroke="#daa520" stroke-width="1"/>
<line x1="12" y1="634.5" x2="462" y2="634.5" stroke="#6b8e23" stroke-width="1"/>
<line x1="12" y1="795.5" x2="302" y2="795.5" stroke="#6b8e23" stroke-width="1"/>
<path d="M12 648.1L15 647.7L15 648.7L12 649.1ZM18 647.3L21 646.9L21 647.9L18 648.3ZM24 646.5L27 646.2L27 647.2L24 647.5ZM30 645.8L33 645.4L33 646.4L30 646.8ZM36 645L39 644.6L39 645.6L36 646ZM42 644.2L45 643.8L45 644.8L42 645.2ZM48 643.4L51 643L51 644L48 644.4ZM54 642.6L57 642.3L57 643.3L54 643.6ZM60 641.9L63 641.5L63 642.5L60 642.9ZM66 641.1L69 640.7L69 641.7L66 642.1ZM72 640.3L75 639.9L75 640.9L72 641.3ZM78 639.5L81 639.1L81 640.1L78 640.5ZM84 638.7L87 638.4L87 639.4L84 639.7ZM90 638L93 637.6L93 638.6L90 639ZM96 637.2L99 636.8L99 637.8L96 638.2ZM102 636.4L105 636L105 637L102 637.4ZM108 635.6L111 635.2L111 636.2L108 636.6ZM114 634.9L117 634.5L117 635.5L114 635.9ZM120 634.1L123 633.7L123 634.7L120 635.1ZM126 633.3L129 632.9L129 633.9L126 634.3ZM132 632.5L135 632.1L135 633.1L132 633.5ZM138 631.7L141 631.3L141 632.3L138 632.7ZM144 631L147 630.6L147 631.6L144 632ZM150 630.2L153 629.8L153 630.8L150 631.2ZM156 629.4L159 629L159 630L156 630.4ZM162 628.6L165 628.2L165 629.2L162 629.6ZM168 627.8L171 627.4L171 628.4L168 628.8ZM174 627.1L177 626.7L177 627.7L174 628.1ZM180 626.3L183 625.9L183 626.9L180 627.3ZM186 625.5L189 625.1L189 626.1L186 626.5ZM192 624.7L195 624.3L195 625.3L192 625.7ZM198 623.9L201 623.5L201 624.5L198 624.9ZM204 623.2L207 622.8L207 623.8L204 624.2ZM210 622.4L213 622L213 623L210 623.4ZM216 621.6L219 621.2L219 622.2L216 622.6ZM222 620.8L225 620.4L225 621.4L222 621.8ZM228 620L231 619.7L231 620.7L228 621ZM234 619.3L237 618.9L237 619.9L234 620.3ZM240 618.5L243 618.1L243 619.1L240 619.5ZM246 617.7L249 617.3L249 618.3L246 618.7ZM252 616.9L255 616.5L255 617.5L252 617.9ZM258 616.1L261 615.8L261 616.8L258 617.1ZM264 615.4L267 615L267 616L264 616.4ZM270 614.6L273 614.2L273 615.2L270 615.6ZM276 613.8L279 613.4L279 614.4L276 614.8ZM282 613L285 612.6L285 613.6L282 614ZM288 612.2L291 611.9L291 612.9L288 613.2ZM294 611.5L297 611.1L297 612.1L294 612.5ZM300 610.7L303 610.3L303 611.3L300 611.7ZM306 609.9L309 609.5L309 610.5L306 610.9ZM312 609.1L315 608.7L315 609.7L312 610.1ZM318 608.4L321 608L321 609L318 609.4ZM324 607.6L327 607.2L327 608.2L324 608.6ZM330 606.8L333 606.4L333 607.4L330 607.8ZM336 606L339 605.6L339 606.6L336 607ZM342 605.2L345 604.8L345 605.8L342 606.2ZM348 604.5L351 604.1L351 605.1L348 605.5ZM354 603.7L357 603.3L357 604.3L354 604.7ZM360 602.9L363 602.5L363 603.5L360 603.9ZM366 602.1L369 601.7L369 602.7L366 603.1ZM372 601.3L375 600.9L375 601.9L372 602.3ZM378 600.6L381 600.2L381 601.2L378 601.6ZM384 599.8L387 599.4L387 600.4L384 600.8ZM390 599L393 598.6L393 599.6L390 600ZM396 598.2L399 597.8L399 598.8L396 599.2ZM402 597.4L405 597L405 598L402 598.4ZM408 596.7L411 596.3L411 597.3L408 597.7ZM414 595.9L417 595.5L417 596.5L414 596.9ZM420 595.1L423 594.7L423 595.7L420 596.1ZM426 594.3L429 593.9L429 594.9L426 595.3ZM432 593.5L435 593.2L435 594.2L432 594.5ZM438 592.8L441 592.4L441 593.4L438 593.8ZM444 592L447 591.6L447 592.6L444 593ZM450 591.2L453 590.8L453 591.8L450 592.2ZM456 590.4L459 590L459 591L456 591.4ZM462 589.6L465 589.3L465 590.3L462 590.6ZM468 588.9L471 588.5L471 589.5L468 589.9ZM474 588.1L477 587.7L477 588.7L474 589.1ZM480 587.3L483 586.9L483 587.9L480 588.3ZM486 586.5L489 586.1L489 587.1L486 587.5ZM492 585.7L495 585.4L495 586.4L492 586.7ZM498 585L501 584.6L501 585.6L498 586ZM504 584.2L507 583.8L507 584.8L504 585.2ZM510 583.4L513 583L513 584L510 584.4ZM516 582.6L519 582.2L519 583.2L516 583.6ZM522 581.9L525 581.5L525 582.5L522 582.9ZM528 581.1L531 580.7L531 581.7L528 582.1ZM534 580.3L537 579.9L537 580.9L534 581.3ZM540 579.5L543 579.1L543 580.1L540 580.5ZM546 578.7L549 578.3L549 579.3L546 579.7ZM552 578L555 577.6L555 578.6L552 579ZM558 577.2L561 576.8L561 577.8L558 578.2ZM564 576.4L567 576L567 577L564 577.4ZM570 575.6L573 575.2L573 576.2L570 576.6ZM576 574.8L579 574.4L579 575.4L576 575.8ZM582 574.1L585 573.7L585 574.7L582 575.1ZM588 573.3L591 572.9L591 573.9L588 574.3ZM594 572.5L597 572.1L597 573.1L594 573.5ZM600 571.7L603 571.3L603 572.3L600 572.7ZM606 570.9L609 570.5L609 571.5L606 571.9ZM612 570.2L614 569.9L614 570.9L612 571.2Z" fill="#ff8c00"/>
<path d="M12 698.4L614 628.1L614 629.1L12 699.4Z" fill="#4169e1"/>
<rect x="301" y="478" width="3" height="1" fill="#ff1493"/>
<rect x="299" y="480" width="1" height="1" fill="#ff1493"/>
<rect x="299" y="482" width="1" height="1" fill="#ff1493"/>
<rect x="303" y="480" width="1" height="1" fill="#ff1493"/>
<rect x="303" y="482" width="1" height="1" fill="#ff1493"/>
<rect x="301" y="808" width="3" height="1" fill="#ff1493"/>
<rect x="299" y="809" width="1" height="1" fill="#ff1493"/>
<rect x="299" y="811" width="1" height="1" fill="#ff1493"/>
<rect x="303" y="809" width="1" height="1" fill="#ff1493"/>
<rect x="303" y="811" width="1" height="1" fill="#ff1493"/>
<text x="301.2" y="806.9" font-size="16.8" fill="#808080" letter-spacing="-0.4">01:00</text>
<rect x="598" y="797" width="15" height="15" fill="#e00000"/>
<rect x="603" y="805" width="7" height="1" fill="#fff"/><rect x="606" y="802" width="1" height="7" fill="#fff"/>
</g>
<rect x="12.5" y="477.5" width="601" height="335" fill="none" stroke="#000"/>
<rect x="12.5" y="814.5" width="601" height="23" fill="none" stroke="#000"/>
<polygon points="13,831 13,837 19,837" fill="#c0c0c0"/>
<g clip-path="url(#s139881247110592)">
<text x="77.5" y="827.7" font-size="12.4" fill="#808080" text-anchor="middle">07_18:00</text>
<text x="173.5" y="827.7" font-size="12.4" fill="#808080" text-anchor="middle">07_21:00</text>
<text x="269.5" y="827.7" font-size="12.4" fill="#808080" text-anchor="middle">08_0:00</text>
<text x="365.5" y="827.7" font-size="12.4" fill="#808080" text-anchor="middle">08_3:00</text>
<text x="525.5" y="827.7" font-size="12.4" fill="#808080" text-anchor="middle">08_9:00</text>
<text x="621.5" y="827.7" font-size="12.4" fill="#808080" text-anchor="middle">08_12:00</text>
</g>
<rect x="614" y="820" width="3" height="1" fill="#000"/><rect x="614" y="829" width="3" height="1" fill="#000"/>
<text x="618" y="826.6" font-size="12.6">2</text><text x="617" y="834" font-size="12.6">0.00</text>
<line x1="461.5" y1="815" x2="461.5" y2="837" stroke="#000" stroke-dasharray="3 3"/>
<line x1="301.5" y1="815" x2="301.5" y2="837" stroke="#ff1493" stroke-dasharray="3 3"/>
<rect x="612" y="509" width="3" height="6" fill="#556b2f"/>
<polygon points="16,485 25,485 20.5,490" fill="#000"/>
<text x="31.5" y="492" font-size="12" fill="#000" textLength="72" lengthAdjust="spacing">XAUUSD,M15</text>
<rect x="614" y="499" width="3" height="1" fill="#000"/>
<text x="620" y="504" font-size="12.6" fill="#000">4004.30</text>
<rect x="614" y="548" width="3" height="1" fill="#000"/>
<text x="620" y="553" font-size="12.6" fill="#000">3994.10</text>
<rect x="614" y="597" width="3" height="1" fill="#000"/>
<text x="620" y="602" font-size="12.6" fill="#000">3983.90</text>
<rect x="614" y="646" width="3" height="1" fill="#000"/>
<text x="620" y="651" font-size="12.6" fill="#000">3973.70</text>
<rect x="614" y="695" width="3" height="1" fill="#000"/>
<text x="620" y="700" font-size="12.6" fill="#000">3963.50</text>
<rect x="614" y="744" width="3" height="1" fill="#000"/>
<text x="620" y="749" font-size="12.6" fill="#000">3953.30</text>
<rect x="614" y="793" width="3" height="1" fill="#000"/>
<text x="620" y="798" font-size="12.6" fill="#000">3943.10</text>
<rect x="615" y="514" width="56" height="14" fill="#daa520"/>
<text x="620" y="525.6" font-size="12.6" fill="#fff">4000.00</text>
<rect x="13" y="838" width="1" height="3" fill="#000"/>
<text x="11.7" y="853" font-size="12.8" fill="#000">7 Oct 2025</text>
<rect x="109" y="838" width="1" height="3" fill="#000"/>
<text x="107.7" y="853" font-size="12.8" fill="#000">7 Oct 13:00</text>
<rect x="205" y="838" width="1" height="3" fill="#000"/>
<text x="203.7" y="853" font-size="12.8" fill="#000">7 Oct 16:00</text>
<rect x="301" y="838" width="1" height="3" fill="#000"/>
<text x="299.7" y="853" font-size="12.8" fill="#000">7 Oct 19:00</text>
<rect x="397" y="838" width="1" height="3" fill="#000"/>
<text x="395.7" y="853" font-size="12.8" fill="#000">7 Oct 22:00</text>
<rect x="493" y="838" width="1" height="3" fill="#000"/>
<text x="491.7" y="853" font-size="12.8" fill="#000">8 Oct 02:00</text>
<rect x="589" y="838" width="1" height="3" fill="#000"/>
<text x="587.7" y="853" font-size="12.8" fill="#000">8 Oct 05:00</text>
</svg>
</div></div>
<div class="win" style="left:690px;top:436px;width:726px;height:437px">
<svg class="ico" width="19" height="19" viewBox="0 0 19 19" shape-rendering="crispEdges"><rect x="0" y="0" width="15" height="11" fill="#5b8ff9"/><rect x="1" y="3" width="13" height="7" fill="#fff"/><path d="M3 5.5h2M4.5 4v2M8.5 4v2M8.5 5.5h2" stroke="#5b8ff9" fill="none"/><rect x="1" y="0" width="2" height="1" fill="#4c8d6a"/><rect x="5" y="0" width="1" height="3" fill="#4c8d6a"/><rect x="10" y="0" width="1" height="3" fill="#4c8d6a"/><rect x="13" y="0" width="1" height="1" fill="#4c8d6a"/><rect x="0" y="3" width="1" height="1" fill="#4c8d6a"/><rect x="0" y="6" width="1" height="1" fill="#4c8d6a"/><rect x="0" y="9" width="1" height="1" fill="#4c8d6a"/><rect x="14" y="2" width="1" height="2" fill="#4c8d6a"/><rect x="14" y="5" width="1" height="1" fill="#4c8d6a"/><rect x="2" y="10" width="1" height="1" fill="#4c8d6a"/><rect x="4" y="6" width="14" height="12" fill="#5b8ff9"/><rect x="5" y="9" width="11" height="7" fill="#fff"/><rect x="6" y="6" width="2" height="1" fill="#4c8d6a"/><rect x="10" y="6" width="1" height="2" fill="#4c8d6a"/><rect x="14" y="6" width="1" height="2" fill="#4c8d6a"/><rect x="4" y="10" width="1" height="1" fill="#4c8d6a"/><rect x="4" y="13" width="1" height="1" fill="#4c8d6a"/><rect x="4" y="16" width="1" height="1" fill="#4c8d6a"/><rect x="16" y="9" width="2" height="1" fill="#4c8d6a"/><rect x="16" y="12" width="2" height="2" fill="#4c8d6a"/><rect x="16" y="15" width="2" height="1" fill="#4c8d6a"/><rect x="6" y="16" width="2" height="2" fill="#4c8d6a"/><rect x="11" y="16" width="1" height="2" fill="#4c8d6a"/><rect x="14" y="16" width="1" height="2" fill="#4c8d6a"/><rect x="6" y="10" width="2" height="1" fill="#5b8ff9"/><rect x="8" y="11" width="1" height="3" fill="#5b8ff9"/><rect x="9" y="14" width="1" height="1" fill="#5b8ff9"/><rect x="10" y="11" width="1" height="3" fill="#5b8ff9"/><rect x="11" y="10" width="2" height="1" fill="#5b8ff9"/><rect x="13" y="11" width="1" height="3" fill="#5b8ff9"/><rect x="14" y="14" width="1" height="1" fill="#5b8ff9"/></svg>
<div class="tt">XAUUSD,H4</div>
<div class="b n" style="left:584px"><svg width="42" height="24" viewBox="0 0 42 24"><rect x="12.5" y="10.5" width="16" height="5" rx="1" fill="url(#gw)" stroke="#4b4f63"/></svg></div>
<div class="b m" style="left:628px"><svg width="42" height="24" viewBox="0 0 42 24"><path fill-rule="evenodd" d="M12.5 4.5h16v14h-16zM16.5 8.5v6h8v-6z" fill="url(#gw)" stroke="#4b4f63" stroke-linejoin="round"/></svg></div>
<div class="b x" style="left:672px"><svg width="42" height="24" viewBox="0 0 42 24"><path d="M11.8 5.9L13.3 4.4H17L20.3 8L23.6 4.4H27.3L28.8 5.9L23.2 11.4L28.8 16.9L27.3 18.4H23.6L20.3 14.8L17 18.4H13.3L11.8 16.9L17.4 11.4Z" fill="url(#gw)" stroke="#4b4f63" stroke-linejoin="round"/></svg></div>
<div class="cl" style="width:708px;height:390px">
<svg width="708" height="390" viewBox="699 474 708 390" font-family='"Liberation Sans", sans-serif' shape-rendering="crispEdges">
<defs><clipPath id="c139881245754768"><rect x="704" y="479" width="637" height="334"/></clipPath><clipPath id="s139881245754768"><rect x="704" y="816" width="637" height="22"/></clipPath></defs>
<rect x="699" y="474" width="708" height="390" fill="#fff"/>
<rect x="699" y="474" width="708" height="1" fill="#a0a0a0"/><rect x="699" y="474" width="1" height="390" fill="#a0a0a0"/>
<rect x="700" y="475" width="706" height="1" fill="#696969"/><rect x="700" y="475" width="1" height="388" fill="#696969"/>
<rect x="700" y="862" width="706" height="1" fill="#e3e3e3"/><rect x="1405" y="475" width="1" height="388" fill="#e3e3e3"/>
<rect x="699" y="863" width="708" height="1" fill="#fff"/><rect x="1406" y="474" width="1" height="390" fill="#fff"/>
<g clip-path="url(#c139881245754768)">
<line x1="896.5" y1="479" x2="896.5" y2="813" stroke="#000" stroke-width="1" stroke-dasharray="3 3"/>
<line x1="1136.5" y1="479" x2="1136.5" y2="813" stroke="#000" stroke-width="1" stroke-dasharray="3 3"/>
<line x1="1216.5" y1="479" x2="1216.5" y2="813" stroke="#ff1493" stroke-width="1" stroke-dasharray="3 3"/>
<line x1="1248.5" y1="479" x2="1248.5" y2="813" stroke="#6e6e6e" stroke-width="1" stroke-dasharray="12 4.5 3 4.5"/>
<line x1="703" y1="512.5" x2="1342" y2="512.5" stroke="#c0c0c0" stroke-width="1"/>
<rect x="704" y="671" width="1" height="13" fill="#00bfff"/>
<rect x="702" y="674" width="5" height="6" fill="#00bfff"/>
<rect x="712" y="673" width="1" height="13" fill="#000"/>
<rect x="710" y="675" width="5" height="2" fill="#000"/>
<rect x="720" y="654" width="1" height="25" fill="#00bfff"/>
<rect x="718" y="658" width="5" height="18" fill="#00bfff"/>
<rect x="728" y="655" width="1" height="8" fill="#000"/>
<rect x="726" y="658" width="5" height="2" fill="#000"/>
<rect x="736" y="658" width="1" height="11" fill="#000"/>
<rect x="734" y="659" width="5" height="3" fill="#000"/>
<rect x="744" y="659" width="1" height="18" fill="#000"/>
<rect x="742" y="661" width="5" height="8" fill="#000"/>
<rect x="752" y="666" width="1" height="9" fill="#000"/>
<rect x="750" y="668" width="5" height="6" fill="#000"/>
<rect x="760" y="662" width="1" height="16" fill="#00bfff"/>
<rect x="758" y="663" width="5" height="11" fill="#00bfff"/>
<rect x="768" y="660" width="1" height="11" fill="#000"/>
<rect x="766" y="664" width="5" height="4" fill="#000"/>
<rect x="776" y="664" width="1" height="9" fill="#000"/>
<rect x="774" y="667" width="5" height="5" fill="#000"/>
<rect x="784" y="668" width="1" height="20" fill="#000"/>
<rect x="782" y="670" width="5" height="18" fill="#000"/>
<rect x="792" y="684" width="1" height="13" fill="#00bfff"/>
<rect x="790" y="685" width="5" height="3" fill="#00bfff"/>
<rect x="800" y="676" width="1" height="12" fill="#00bfff"/>
<rect x="798" y="682" width="5" height="2" fill="#00bfff"/>
<rect x="808" y="681" width="1" height="8" fill="#00bfff"/>
<rect x="806" y="684" width="5" height="2" fill="#00bfff"/>
<rect x="816" y="670" width="1" height="16" fill="#00bfff"/>
<rect x="814" y="673" width="5" height="12" fill="#00bfff"/>
<rect x="824" y="671" width="1" height="22" fill="#000"/>
<rect x="822" y="673" width="5" height="13" fill="#000"/>
<rect x="832" y="680" width="1" height="13" fill="#00bfff"/>
<rect x="830" y="682" width="5" height="4" fill="#00bfff"/>
<rect x="840" y="672" width="1" height="14" fill="#00bfff"/>
<rect x="838" y="678" width="5" height="5" fill="#00bfff"/>
<rect x="848" y="675" width="1" height="9" fill="#000"/>
<rect x="846" y="677" width="5" height="7" fill="#000"/>
<rect x="856" y="677" width="1" height="10" fill="#00bfff"/>
<rect x="854" y="682" width="5" height="2" fill="#00bfff"/>
<rect x="864" y="674" width="1" height="10" fill="#00bfff"/>
<rect x="862" y="675" width="5" height="8" fill="#00bfff"/>
<rect x="872" y="668" width="1" height="12" fill="#00bfff"/>
<rect x="870" y="671" width="5" height="6" fill="#00bfff"/>
<rect x="880" y="658" width="1" height="13" fill="#00bfff"/>
<rect x="878" y="659" width="5" height="12" fill="#00bfff"/>
<rect x="888" y="658" width="1" height="14" fill="#000"/>
<rect x="886" y="659" width="5" height="13" fill="#000"/>
<rect x="896" y="654" width="1" height="21" fill="#00bfff"/>
<rect x="894" y="661" width="5" height="13" fill="#00bfff"/>
<rect x="904" y="640" width="1" height="22" fill="#00bfff"/>
<rect x="902" y="641" width="5" height="21" fill="#00bfff"/>
<rect x="912" y="637" width="1" height="9" fill="#000"/>
<rect x="910" y="642" width="5" height="3" fill="#000"/>
<rect x="920" y="631" width="1" height="15" fill="#00bfff"/>
<rect x="918" y="636" width="5" height="9" fill="#00bfff"/>
<rect x="928" y="629" width="1" height="11" fill="#00bfff"/>
<rect x="926" y="632" width="5" height="5" fill="#00bfff"/>
<rect x="936" y="627" width="1" height="10" fill="#00bfff"/>
<rect x="934" y="629" width="5" height="4" fill="#00bfff"/>
<rect x="944" y="619" width="1" height="16" fill="#00bfff"/>
<rect x="942" y="620" width="5" height="11" fill="#00bfff"/>
<rect x="952" y="609" width="1" height="15" fill="#00bfff"/>
<rect x="950" y="610" width="5" height="12" fill="#00bfff"/>
<rect x="960" y="609" width="1" height="44" fill="#000"/>
<rect x="958" y="610" width="5" height="40" fill="#000"/>
<rect x="968" y="633" width="1" height="18" fill="#00bfff"/>
<rect x="966" y="635" width="5" height="15" fill="#00bfff"/>
<rect x="976" y="617" width="1" height="21" fill="#00bfff"/>
<rect x="974" y="623" width="5" height="13" fill="#00bfff"/>
<rect x="984" y="614" width="1" height="12" fill="#00bfff"/>
<rect x="982" y="615" width="5" height="9" fill="#00bfff"/>
<rect x="992" y="610" width="1" height="8" fill="#00bfff"/>
<rect x="990" y="610" width="5" height="6" fill="#00bfff"/>
<rect x="1000" y="606" width="1" height="12" fill="#000"/>
<rect x="998" y="610" width="5" height="3" fill="#000"/>
<rect x="1008" y="594" width="1" height="25" fill="#00bfff"/>
<rect x="1006" y="598" width="5" height="15" fill="#00bfff"/>
<rect x="1016" y="597" width="1" height="15" fill="#000"/>
<rect x="1014" y="598" width="5" height="10" fill="#000"/>
<rect x="1024" y="607" width="1" height="10" fill="#000"/>
<rect x="1022" y="608" width="5" height="7" fill="#000"/>
<rect x="1032" y="608" width="1" height="10" fill="#00bfff"/>
<rect x="1030" y="611" width="5" height="4" fill="#00bfff"/>
<rect x="1040" y="608" width="1" height="11" fill="#000"/>
<rect x="1038" y="611" width="5" height="1" fill="#000"/>
<rect x="1048" y="608" width="1" height="6" fill="#00bfff"/>
<rect x="1046" y="609" width="5" height="3" fill="#00bfff"/>
<rect x="1056" y="602" width="1" height="12" fill="#00bfff"/>
<rect x="1054" y="603" width="5" height="8" fill="#00bfff"/>
<rect x="1064" y="593" width="1" height="14" fill="#000"/>
<rect x="1062" y="603" width="5" height="4" fill="#000"/>
<rect x="1072" y="605" width="1" height="33" fill="#000"/>
<rect x="1070" y="606" width="5" height="18" fill="#000"/>
<rect x="1080" y="615" width="1" height="9" fill="#00bfff"/>
<rect x="1078" y="617" width="5" height="7" fill="#00bfff"/>
<rect x="1088" y="612" width="1" height="10" fill="#00bfff"/>
<rect x="1086" y="616" width="5" height="2" fill="#00bfff"/>
<rect x="1096" y="615" width="1" height="13" fill="#000"/>
<rect x="1094" y="616" width="5" height="2" fill="#000"/>
<rect x="1104" y="611" width="1" height="8" fill="#00bfff"/>
<rect x="1102" y="612" width="5" height="6" fill="#00bfff"/>
<rect x="1112" y="597" width="1" height="21" fill="#00bfff"/>
<rect x="1110" y="601" width="5" height="12" fill="#00bfff"/>
<rect x="1120" y="596" width="1" height="17" fill="#000"/>
<rect x="1118" y="600" width="5" height="3" fill="#000"/>
<rect x="1128" y="598" width="1" height="6" fill="#00bfff"/>
<rect x="1126" y="599" width="5" height="4" fill="#00bfff"/>
<rect x="1136" y="580" width="1" height="20" fill="#00bfff"/>
<rect x="1134" y="581" width="5" height="18" fill="#00bfff"/>
<rect x="1144" y="566" width="1" height="16" fill="#00bfff"/>
<rect x="1142" y="573" width="5" height="9" fill="#00bfff"/>
<rect x="1152" y="563" width="1" height="17" fill="#00bfff"/>
<rect x="1150" y="567" width="5" height="7" fill="#00bfff"/>
<rect x="1160" y="565" width="1" height="12" fill="#00bfff"/>
<rect x="1158" y="566" width="5" height="1" fill="#00bfff"/>
<rect x="1168" y="551" width="1" height="18" fill="#00bfff"/>
<rect x="1166" y="559" width="5" height="8" fill="#00bfff"/>
<rect x="1176" y="554" width="1" height="7" fill="#00bfff"/>
<rect x="1174" y="557" width="5" height="2" fill="#00bfff"/>
<rect x="1184" y="547" width="1" height="14" fill="#000"/>
<rect x="1182" y="557" width="5" height="2" fill="#000"/>
<rect x="1192" y="548" width="1" height="12" fill="#00bfff"/>
<rect x="1190" y="554" width="5" height="5" fill="#00bfff"/>
<rect x="1200" y="554" width="1" height="15" fill="#000"/>
<rect x="1198" y="554" width="5" height="7" fill="#000"/>
<rect x="1208" y="543" width="1" height="18" fill="#00bfff"/>
<rect x="1206" y="546" width="5" height="15" fill="#00bfff"/>
<rect x="1216" y="539" width="1" height="17" fill="#00bfff"/>
<rect x="1214" y="545" width="5" height="2" fill="#00bfff"/>
<rect x="1224" y="542" width="1" height="8" fill="#00bfff"/>
<rect x="1222" y="543" width="5" height="3" fill="#00bfff"/>
<rect x="1232" y="534" width="1" height="11" fill="#00bfff"/>
<rect x="1230" y="535" width="5" height="10" fill="#00bfff"/>
<rect x="1240" y="513" width="1" height="25" fill="#00bfff"/>
<rect x="1238" y="518" width="5" height="17" fill="#00bfff"/>
<rect x="1248" y="511" width="1" height="12" fill="#00bfff"/>
<rect x="1246" y="513" width="5" height="6" fill="#00bfff"/>
<path d="M704 673L711.9 664.7L712.9 664.7L705 673ZM712.4 664.2L720.6 656L720.6 657L712.4 665.2ZM720.6 656L728.9 648.8L728.9 649.8L720.6 657ZM728.9 648.8L733 647.7L733 648.7L728.9 649.8ZM733 647.7L743.3 642.5L743.3 643.5L733 648.7ZM743.3 642.5L757.7 639L757.7 640L743.3 643.5ZM757.7 639L772.2 639L772.2 640L757.7 640ZM772.2 639L782.5 641.1L782.5 642.1L772.2 640ZM782.5 641.1L792.8 644.6L792.8 645.6L782.5 642.1ZM792.8 644.6L807.2 648.7L807.2 649.7L792.8 645.6ZM807.2 648.7L815.5 651.9L815.5 652.9L807.2 649.7ZM815.5 651.9L832 655L832 656L815.5 652.9ZM832 655L848.5 655.6L848.5 656.6L832 656ZM848.5 655.6L869.1 654.3L869.1 655.3L848.5 656.6ZM869.1 654.3L888.5 658.1L888.5 659.1L869.1 655.3ZM888.5 658.1L896.5 657.6L896.5 658.6L888.5 659.1ZM896.5 657.6L904.5 649.8L904.5 650.8L896.5 658.6ZM904.5 649.8L912.6 646.7L912.6 647.7L904.5 650.8ZM912.6 646.7L920.4 641.5L920.4 642.5L912.6 647.7ZM920.4 641.5L928.5 636.4L928.5 637.4L920.4 642.5ZM928.5 636.4L936.5 631.2L936.5 632.2L928.5 637.4ZM936 631.7L944 622.4L945 622.4L937 631.7ZM944 622.4L952.1 612.1L953.1 612.1L945 622.4ZM952.6 611.6L960.4 609.6L960.4 610.6L952.6 612.6ZM960.4 609.6L968.5 608.5L968.5 609.5L960.4 610.6ZM968.5 608.5L976.5 606.5L976.5 607.5L968.5 609.5ZM976.5 606.5L984.5 602.3L984.5 603.3L976.5 607.5ZM984.5 602.3L992.6 598.2L992.6 599.2L984.5 603.3ZM992.6 598.2L1000.6 594.1L1000.6 595.1L992.6 599.2ZM1000.6 594.1L1008.5 589.6L1008.5 590.6L1000.6 595.1ZM1008.5 589.6L1016.5 588.3L1016.5 589.3L1008.5 590.6ZM1016.5 588.3L1025 589.6L1025 590.6L1016.5 589.3ZM1025 589.6L1040.5 588.9L1040.5 589.9L1025 590.6ZM1040.5 588.9L1056.5 590.4L1056.5 591.4L1040.5 589.9ZM1056.5 590.4L1072.4 592.4L1072.4 593.4L1056.5 591.4ZM1072.4 592.4L1088.5 593.1L1088.5 594.1L1072.4 593.4ZM1088.5 593.1L1104.6 592.4L1104.6 593.4L1088.5 594.1ZM1104.6 592.4L1112.4 592L1112.4 593L1104.6 593.4ZM1112.4 592L1120.5 595.1L1120.5 596.1L1112.4 593ZM1120.5 595.1L1128.5 595.7L1128.5 596.7L1120.5 596.1ZM1128.5 595.7L1136.5 588.9L1136.5 589.9L1128.5 596.7ZM1136.5 588.9L1144.6 581.3L1144.6 582.3L1136.5 589.9ZM1144.1 581.8L1151.9 573.6L1152.9 573.6L1145.1 581.8ZM1152.4 573.1L1160.5 565.2L1160.5 566.2L1152.4 574.1ZM1160.5 565.2L1168.5 560.1L1168.5 561.1L1160.5 566.2ZM1168.5 560.1L1176.5 553.9L1176.5 554.9L1168.5 561.1ZM1176.5 553.9L1184.6 549.1L1184.6 550.1L1176.5 554.9ZM1184.6 549.1L1192.4 545L1192.4 546L1184.6 550.1ZM1192.4 545L1200.5 540.9L1200.5 541.9L1192.4 546ZM1200.5 540.9L1208.5 534.7L1208.5 535.7L1200.5 541.9ZM1208.5 534.7L1216.5 529.1L1216.5 530.1L1208.5 535.7ZM1216.5 529.1L1224.6 525L1224.6 526L1216.5 530.1ZM1224.6 525L1232.4 521.5L1232.4 522.5L1224.6 526ZM1231.9 522L1240 513.8L1241 513.8L1232.9 522ZM1240.5 513.3L1246.6 508.5L1246.6 509.5L1240.5 514.3Z" fill="#505050"/>
<path d="M704.5 695.2L712.4 690L712.4 691L704.5 696.2ZM712.4 690L720.6 683.8L720.6 684.8L712.4 691ZM720.6 683.8L728.9 677.6L728.9 678.6L720.6 684.8ZM728.9 677.6L737.1 673.5L737.1 674.5L728.9 678.6ZM737.1 673.5L745.4 670.4L745.4 671.4L737.1 674.5ZM745.4 670.4L755.7 666.7L755.7 667.7L745.4 671.4ZM755.7 666.7L766 663.8L766 664.8L755.7 667.7ZM766 663.8L776.5 662.6L776.5 663.6L766 664.8ZM776.5 662.6L792.8 663.2L792.8 664.2L776.5 663.6ZM792.8 663.2L807.2 664.7L807.2 665.7L792.8 664.2ZM807.2 664.7L823.7 665.3L823.7 666.3L807.2 665.7ZM823.7 665.3L848.5 665.3L848.5 666.3L823.7 666.3ZM848.5 665.3L872.4 665.3L872.4 666.3L848.5 666.3ZM872.4 665.3L888.5 664.7L888.5 665.7L872.4 666.3ZM888.5 664.7L896.5 663.8L896.5 664.8L888.5 665.7ZM896.5 663.8L904.5 660.1L904.5 661.1L896.5 664.8ZM904.5 660.1L912.6 657.6L912.6 658.6L904.5 661.1ZM912.6 657.6L920.4 654.3L920.4 655.3L912.6 658.6ZM920.4 654.3L928.5 650.8L928.5 651.8L920.4 655.3ZM928.5 650.8L936.5 646.7L936.5 647.7L928.5 651.8ZM936.5 646.7L944.5 643.6L944.5 644.6L936.5 647.7ZM944.5 643.6L952.6 637.4L952.6 638.4L944.5 644.6ZM952.6 637.4L960.4 634.9L960.4 635.9L952.6 638.4ZM960.4 634.9L968.5 632.2L968.5 633.2L960.4 635.9ZM968.5 632.2L976.5 629.1L976.5 630.1L968.5 633.2ZM976.5 629.1L984.5 625L984.5 626L976.5 630.1ZM984.5 625L992.6 620.9L992.6 621.9L984.5 626ZM992.6 620.9L1000.6 617.8L1000.6 618.8L992.6 621.9ZM1000.6 617.8L1008.5 613.7L1008.5 614.7L1000.6 618.8ZM1008.5 613.7L1016.5 611.6L1016.5 612.6L1008.5 614.7ZM1016.5 611.6L1025 608.1L1025 609.1L1016.5 612.6ZM1025 608.1L1040.5 606.9L1040.5 607.9L1025 609.1ZM1040.5 606.9L1056.5 606.5L1056.5 607.5L1040.5 607.9ZM1056.5 606.5L1072.4 605.4L1072.4 606.4L1056.5 607.5ZM1072.4 605.4L1088.5 604.4L1088.5 605.4L1072.4 606.4ZM1088.5 604.4L1104.6 604.4L1104.6 605.4L1088.5 605.4ZM1104.6 604.4L1120.5 603.4L1120.5 604.4L1104.6 605.4ZM1120.5 603.4L1128.5 602.3L1128.5 603.3L1120.5 604.4ZM1128.5 602.3L1136.5 597.8L1136.5 598.8L1128.5 603.3ZM1136.5 597.8L1144.6 593.1L1144.6 594.1L1136.5 598.8ZM1144.6 593.1L1152.4 588.9L1152.4 589.9L1144.6 594.1ZM1152.4 588.9L1160.5 584.8L1160.5 585.8L1152.4 589.9ZM1160.5 584.8L1168.5 580.7L1168.5 581.7L1160.5 585.8ZM1168.5 580.7L1176.5 576.6L1176.5 577.6L1168.5 581.7ZM1176.5 576.6L1184.6 572.4L1184.6 573.4L1176.5 577.6ZM1184.6 572.4L1192.4 568.9L1192.4 569.9L1184.6 573.4ZM1192.4 568.9L1200.5 566.9L1200.5 567.9L1192.4 569.9ZM1200.5 566.9L1208.5 560.1L1208.5 561.1L1200.5 567.9ZM1208.5 560.1L1216.5 555.9L1216.5 556.9L1208.5 561.1ZM1216.5 555.9L1224.6 552.4L1224.6 553.4L1216.5 556.9ZM1224.6 552.4L1232.4 547.7L1232.4 548.7L1224.6 553.4ZM1232.4 547.7L1240.5 541.5L1240.5 542.5L1232.4 548.7ZM1240.5 541.5L1247.7 538L1247.7 539L1240.5 542.5Z" fill="#505050"/>
<path d="M704.5 715.8L720.6 709.6L720.6 710.6L704.5 716.8ZM720.6 709.6L737.1 702.4L737.1 703.4L720.6 710.6ZM737.1 702.4L753.6 694.8L753.6 695.8L737.1 703.4ZM753.6 694.8L770.1 688L770.1 689L753.6 695.8ZM770.1 688L782.5 683.8L782.5 684.8L770.1 689ZM782.5 683.8L792.6 681.8L792.6 682.8L782.5 684.8ZM792.6 681.8L808.5 679.1L808.5 680.1L792.6 682.8ZM808.5 679.1L824.5 676.6L824.5 677.6L808.5 680.1ZM824.5 676.6L840.4 674.6L840.4 675.6L824.5 677.6ZM840.4 674.6L856.5 674.1L856.5 675.1L840.4 675.6ZM856.5 674.1L872.4 673.5L872.4 674.5L856.5 675.1ZM872.4 673.5L888.5 673.5L888.5 674.5L872.4 674.5ZM888.5 673.5L896.5 672.5L896.5 673.5L888.5 674.5ZM896.5 672.5L904.5 670.4L904.5 671.4L896.5 673.5ZM904.5 670.4L912.6 668.4L912.6 669.4L904.5 671.4ZM912.6 668.4L920.4 666.3L920.4 667.3L912.6 669.4ZM920.4 666.3L928.5 664.2L928.5 665.2L920.4 667.3ZM928.5 664.2L936.5 662.2L936.5 663.2L928.5 665.2ZM936.5 662.2L944.5 660.1L944.5 661.1L936.5 663.2ZM944.5 660.1L952.6 658.5L952.6 659.5L944.5 661.1ZM952.6 658.5L960.4 657L960.4 658L952.6 659.5ZM960.4 657L968.5 654.3L968.5 655.3L960.4 658ZM968.5 654.3L976.5 650.8L976.5 651.8L968.5 655.3ZM976.5 650.8L984.5 647.3L984.5 648.3L976.5 651.8ZM984.5 647.3L992.6 644L992.6 645L984.5 648.3ZM992.6 644L1000.6 641.1L1000.6 642.1L992.6 645ZM1000.6 641.1L1016.5 634.3L1016.5 635.3L1000.6 642.1ZM1016.5 634.3L1025 633.3L1025 634.3L1016.5 635.3ZM1025 633.3L1040.5 624.6L1040.5 625.6L1025 634.3ZM1040.5 624.6L1056.5 621.3L1056.5 622.3L1040.5 625.6ZM1056.5 621.3L1072.4 619.9L1072.4 620.9L1056.5 622.3ZM1072.4 619.9L1088.5 616.8L1088.5 617.8L1072.4 620.9ZM1088.5 616.8L1104.6 615.1L1104.6 616.1L1088.5 617.8ZM1104.6 615.1L1120.5 611.6L1120.5 612.6L1104.6 616.1ZM1120.5 611.6L1136.5 607.5L1136.5 608.5L1120.5 612.6ZM1136.5 607.5L1152.4 603.4L1152.4 604.4L1136.5 608.5ZM1152.4 603.4L1168.5 599.2L1168.5 600.2L1152.4 604.4ZM1168.5 599.2L1184.6 594.1L1184.6 595.1L1168.5 600.2ZM1184.6 594.1L1200.5 588.9L1200.5 589.9L1184.6 595.1ZM1200.5 588.9L1216.5 582.7L1216.5 583.7L1200.5 589.9ZM1216.5 582.7L1224.6 579.7L1224.6 580.7L1216.5 583.7ZM1224.6 579.7L1232.4 574.5L1232.4 575.5L1224.6 580.7ZM1232.4 574.5L1240.5 569.3L1240.5 570.3L1232.4 575.5ZM1240.5 569.3L1247.7 565.6L1247.7 566.6L1240.5 570.3Z" fill="#1fa5a5"/>
<path d="M704.5 736.4L720.6 734.3L720.6 735.3L704.5 737.4ZM720.6 734.3L737.1 731.3L737.1 732.3L720.6 735.3ZM737.1 731.3L753.6 723L753.6 724L737.1 732.3ZM753.6 723L770.1 712.7L770.1 713.7L753.6 724ZM770.1 712.7L784.5 703.4L784.5 704.4L770.1 713.7ZM784.5 703.4L799 696.2L799 697.2L784.5 704.4ZM799 696.2L813.4 690L813.4 691L799 697.2ZM813.4 690L824.5 686.5L824.5 687.5L813.4 691ZM824.5 686.5L840.4 684.4L840.4 685.4L824.5 687.5ZM840.4 684.4L856.5 683.2L856.5 684.2L840.4 685.4ZM856.5 683.2L872.4 683.2L872.4 684.2L856.5 684.2ZM872.4 683.2L888.5 683.2L888.5 684.2L872.4 684.2ZM888.5 683.2L896.5 683.8L896.5 684.8L888.5 684.2ZM896.5 683.8L912.6 685.3L912.6 686.3L896.5 684.8ZM912.6 685.3L928.5 686.9L928.5 687.9L912.6 686.3ZM928.5 686.9L944.5 685.9L944.5 686.9L928.5 687.9ZM944.5 685.9L960.4 681.8L960.4 682.8L944.5 686.9ZM960.4 681.8L976.5 678.7L976.5 679.7L960.4 682.8ZM976.5 678.7L992.6 670.4L992.6 671.4L976.5 679.7ZM992.6 670.4L1008.5 661.1L1008.5 662.1L992.6 671.4ZM1008.5 661.1L1020 655.6L1020 656.6L1008.5 662.1ZM1020 655.6L1025 653.9L1025 654.9L1020 656.6ZM1025 653.9L1040.5 643.6L1040.5 644.6L1025 654.9ZM1040.5 643.6L1056.5 637.4L1056.5 638.4L1040.5 644.6ZM1056.5 637.4L1072.4 631.2L1072.4 632.2L1056.5 638.4ZM1072.4 631.2L1088.5 628.1L1088.5 629.1L1072.4 632.2ZM1088.5 628.1L1104.6 626L1104.6 627L1088.5 629.1ZM1104.6 626L1112.4 623.4L1112.4 624.4L1104.6 627ZM1112.4 623.4L1120.5 618.8L1120.5 619.8L1112.4 624.4ZM1120.5 618.8L1128.5 616.8L1128.5 617.8L1120.5 619.8ZM1128.5 616.8L1136.5 616.8L1136.5 617.8L1128.5 617.8ZM1136.5 616.8L1152.4 617.8L1152.4 618.8L1136.5 617.8ZM1152.4 617.8L1168.5 618.8L1168.5 619.8L1152.4 618.8ZM1168.5 618.8L1184.6 616.8L1184.6 617.8L1168.5 619.8ZM1184.6 616.8L1200.5 612.6L1200.5 613.6L1184.6 617.8ZM1200.5 612.6L1216.5 608.5L1216.5 609.5L1200.5 613.6ZM1216.5 608.5L1224.6 606L1224.6 607L1216.5 609.5ZM1224.6 606L1232.4 601.3L1232.4 602.3L1224.6 607ZM1232.4 601.3L1240.5 597.2L1240.5 598.2L1232.4 602.3ZM1240.5 597.2L1247.7 593.7L1247.7 594.7L1240.5 598.2Z" fill="#505050"/>
<path d="M704.5 758.7L720.6 760.7L720.6 761.7L704.5 759.7ZM720.6 760.7L737.1 759.1L737.1 760.1L720.6 761.7ZM737.1 759.1L749.5 752.5L749.5 753.5L737.1 760.1ZM749.5 752.5L761.9 745.7L761.9 746.7L749.5 753.5ZM761.9 745.7L774.2 734.8L774.2 735.8L761.9 746.7ZM774.2 734.8L786.6 724.4L786.6 725.4L774.2 735.8ZM786.6 724.4L799 714.1L799 715.1L786.6 725.4ZM799 714.1L811.3 705.1L811.3 706.1L799 715.1ZM811.3 705.1L824.5 697.2L824.5 698.2L811.3 706.1ZM824.5 697.2L840.4 693.1L840.4 694.1L824.5 698.2ZM840.4 693.1L856.5 693.5L856.5 694.5L840.4 694.1ZM856.5 693.5L864.5 694.1L864.5 695.1L856.5 694.5ZM864.5 694.1L880.4 692.7L880.4 693.7L864.5 695.1ZM880.4 692.7L888.5 692.1L888.5 693.1L880.4 693.7ZM888.5 692.1L896.5 692.1L896.5 693.1L888.5 693.1ZM896.5 692.1L904.5 696.2L904.5 697.2L896.5 693.1ZM904.5 696.2L912.6 698.3L912.6 699.3L904.5 697.2ZM912.6 698.3L920.4 700.9L920.4 701.9L912.6 699.3ZM920.4 700.9L928.5 703.8L928.5 704.8L920.4 701.9ZM928.5 703.8L936.5 705.5L936.5 706.5L928.5 704.8ZM936.5 705.5L944.5 706.5L944.5 707.5L936.5 706.5ZM944.5 706.5L952.6 707.5L952.6 708.5L944.5 707.5ZM952.6 707.5L960.4 705.1L960.4 706.1L952.6 708.5ZM960.4 705.1L976.5 700.9L976.5 701.9L960.4 706.1ZM976.5 700.9L984.5 697.2L984.5 698.2L976.5 701.9ZM984.5 697.2L1000.6 691L1000.6 692L984.5 698.2ZM1000.6 691L1008.5 686.5L1008.5 687.5L1000.6 692ZM1008.5 686.5L1020 677.6L1020 678.6L1008.5 687.5ZM1019.5 678.1L1024.5 673L1025.5 673L1020.5 678.1ZM1025 672.5L1040.5 664.2L1040.5 665.2L1025 673.5ZM1040.5 664.2L1056.5 648.8L1056.5 649.8L1040.5 665.2ZM1056.5 648.8L1072.4 642.6L1072.4 643.6L1056.5 649.8ZM1072.4 642.6L1088.5 638.4L1088.5 639.4L1072.4 643.6ZM1088.5 638.4L1104.6 637.4L1104.6 638.4L1088.5 639.4ZM1104.6 637.4L1112.4 636.4L1112.4 637.4L1104.6 638.4ZM1111.9 636.9L1120 628.6L1121 628.6L1112.9 636.9ZM1120.5 628.1L1128.5 625L1128.5 626L1120.5 629.1ZM1128.5 625L1136.5 626.7L1136.5 627.7L1128.5 626ZM1136.5 626.7L1144.6 630.2L1144.6 631.2L1136.5 627.7ZM1144.6 630.2L1152.4 633.3L1152.4 634.3L1144.6 631.2ZM1152.4 633.3L1160.5 636.4L1160.5 637.4L1152.4 634.3ZM1160.5 636.4L1168.5 638.4L1168.5 639.4L1160.5 637.4ZM1168.5 638.4L1176.5 639L1176.5 640L1168.5 639.4ZM1176.5 639L1192.4 639L1192.4 640L1176.5 640ZM1192.4 639L1200.5 637.4L1200.5 638.4L1192.4 640ZM1200.5 637.4L1208.5 636.4L1208.5 637.4L1200.5 638.4ZM1208.5 636.4L1216.5 635.3L1216.5 636.3L1208.5 637.4ZM1216.5 635.3L1224.6 633.3L1224.6 634.3L1216.5 636.3ZM1224.6 633.3L1232.4 629.1L1232.4 630.1L1224.6 634.3ZM1232.4 629.1L1240.5 626L1240.5 627L1232.4 630.1ZM1240.5 626L1247.7 623L1247.7 624L1240.5 627Z" fill="#505050"/>
<line x1="703" y1="534.5" x2="1342" y2="534.5" stroke="#daa520" stroke-width="1"/>
<line x1="703" y1="670.5" x2="1320" y2="670.5" stroke="#dc143c" stroke-width="1"/>
<path d="M704.5 616.8L1286.9 478.2L1286.9 479.2L704.5 617.8Z" fill="#ff8c00"/>
<path d="M704.5 719.9L1342 569.5L1342 570.5L704.5 720.9Z" fill="#ff8c00"/>
<path d="M704.5 668.4L707 667.8L707 668.8L704.5 669.4ZM710 667.1L713 666.4L713 667.4L710 668.1ZM716 665.7L719 665L719 666L716 666.7ZM722 664.3L725 663.5L725 664.5L722 665.3ZM728 662.8L731 662.1L731 663.1L728 663.8ZM734 661.4L737 660.7L737 661.7L734 662.4ZM740 660L743 659.3L743 660.3L740 661ZM746 658.6L749 657.9L749 658.9L746 659.6ZM752 657.1L755 656.4L755 657.4L752 658.1ZM758 655.7L761 655L761 656L758 656.7ZM764 654.3L767 653.6L767 654.6L764 655.3ZM770 652.9L773 652.2L773 653.2L770 653.9ZM776 651.5L779 650.8L779 651.8L776 652.5ZM782 650L785 649.3L785 650.3L782 651ZM788 648.6L791 647.9L791 648.9L788 649.6ZM794 647.2L797 646.5L797 647.5L794 648.2ZM800 645.8L803 645.1L803 646.1L800 646.8ZM806 644.4L809 643.6L809 644.6L806 645.4ZM812 642.9L815 642.2L815 643.2L812 643.9ZM818 641.5L821 640.8L821 641.8L818 642.5ZM824 640.1L827 639.4L827 640.4L824 641.1ZM830 638.7L833 638L833 639L830 639.7ZM836 637.3L839 636.5L839 637.5L836 638.3ZM842 635.8L845 635.1L845 636.1L842 636.8ZM848 634.4L851 633.7L851 634.7L848 635.4ZM854 633L857 632.3L857 633.3L854 634ZM860 631.6L863 630.9L863 631.9L860 632.6ZM866 630.1L869 629.4L869 630.4L866 631.1ZM872 628.7L875 628L875 629L872 629.7ZM878 627.3L881 626.6L881 627.6L878 628.3ZM884 625.9L887 625.2L887 626.2L884 626.9ZM890 624.5L893 623.8L893 624.8L890 625.5ZM896 623L899 622.3L899 623.3L896 624ZM902 621.6L905 620.9L905 621.9L902 622.6ZM908 620.2L911 619.5L911 620.5L908 621.2ZM914 618.8L917 618.1L917 619.1L914 619.8ZM920 617.4L923 616.6L923 617.6L920 618.4ZM926 615.9L929 615.2L929 616.2L926 616.9ZM932 614.5L935 613.8L935 614.8L932 615.5ZM938 613.1L941 612.4L941 613.4L938 614.1ZM944 611.7L947 611L947 612L944 612.7ZM950 610.3L953 609.5L953 610.5L950 611.3ZM956 608.8L959 608.1L959 609.1L956 609.8ZM962 607.4L965 606.7L965 607.7L962 608.4ZM968 606L971 605.3L971 606.3L968 607ZM974 604.6L977 603.9L977 604.9L974 605.6ZM980 603.1L983 602.4L983 603.4L980 604.1ZM986 601.7L989 601L989 602L986 602.7ZM992 600.3L995 599.6L995 600.6L992 601.3ZM998 598.9L1001 598.2L1001 599.2L998 599.9ZM1004 597.5L1007 596.7L1007 597.7L1004 598.5ZM1010 596L1013 595.3L1013 596.3L1010 597ZM1016 594.6L1019 593.9L1019 594.9L1016 595.6ZM1022 593.2L1025 592.5L1025 593.5L1022 594.2ZM1028 591.8L1031 591.1L1031 592.1L1028 592.8ZM1034 590.4L1037 589.6L1037 590.6L1034 591.4ZM1040 588.9L1043 588.2L1043 589.2L1040 589.9ZM1046 587.5L1049 586.8L1049 587.8L1046 588.5ZM1052 586.1L1055 585.4L1055 586.4L1052 587.1ZM1058 584.7L1061 584L1061 585L1058 585.7ZM1064 583.2L1067 582.5L1067 583.5L1064 584.2ZM1070 581.8L1073 581.1L1073 582.1L1070 582.8ZM1076 580.4L1079 579.7L1079 580.7L1076 581.4ZM1082 579L1085 578.3L1085 579.3L1082 580ZM1088 577.6L1091 576.9L1091 577.9L1088 578.6ZM1094 576.1L1097 575.4L1097 576.4L1094 577.1ZM1100 574.7L1103 574L1103 575L1100 575.7ZM1106 573.3L1109 572.6L1109 573.6L1106 574.3ZM1112 571.9L1115 571.2L1115 572.2L1112 572.9ZM1118 570.5L1121 569.7L1121 570.7L1118 571.5ZM1124 569L1127 568.3L1127 569.3L1124 570ZM1130 567.6L1133 566.9L1133 567.9L1130 568.6ZM1136 566.2L1139 565.5L1139 566.5L1136 567.2ZM1142 564.8L1145 564.1L1145 565.1L1142 565.8ZM1148 563.4L1151 562.6L1151 563.6L1148 564.4ZM1154 561.9L1157 561.2L1157 562.2L1154 562.9ZM1160 560.5L1163 559.8L1163 560.8L1160 561.5ZM1166 559.1L1169 558.4L1169 559.4L1166 560.1ZM1172 557.7L1175 557L1175 558L1172 558.7ZM1178 556.2L1181 555.5L1181 556.5L1178 557.2ZM1184 554.8L1187 554.1L1187 555.1L1184 555.8ZM1190 553.4L1193 552.7L1193 553.7L1190 554.4ZM1196 552L1199 551.3L1199 552.3L1196 553ZM1202 550.6L1205 549.9L1205 550.9L1202 551.6ZM1208 549.1L1211 548.4L1211 549.4L1208 550.1ZM1214 547.7L1217 547L1217 548L1214 548.7ZM1220 546.3L1223 545.6L1223 546.6L1220 547.3ZM1226 544.9L1229 544.2L1229 545.2L1226 545.9ZM1232 543.5L1235 542.7L1235 543.7L1232 544.5ZM1238 542L1241 541.3L1241 542.3L1238 543ZM1244 540.6L1247 539.9L1247 540.9L1244 541.6ZM1250 539.2L1253 538.5L1253 539.5L1250 540.2ZM1256 537.8L1259 537.1L1259 538.1L1256 538.8ZM1262 536.3L1265 535.6L1265 536.6L1262 537.3ZM1268 534.9L1271 534.2L1271 535.2L1268 535.9ZM1274 533.5L1277 532.8L1277 533.8L1274 534.5ZM1280 532.1L1283 531.4L1283 532.4L1280 533.1ZM1286 530.7L1289 530L1289 531L1286 531.7ZM1292 529.2L1295 528.5L1295 529.5L1292 530.2ZM1298 527.8L1301 527.1L1301 528.1L1298 528.8ZM1304 526.4L1307 525.7L1307 526.7L1304 527.4ZM1310 525L1313 524.3L1313 525.3L1310 526ZM1316 523.6L1319 522.8L1319 523.8L1316 524.6ZM1322 522.1L1325 521.4L1325 522.4L1322 523.1ZM1328 520.7L1331 520L1331 521L1328 521.7ZM1334 519.3L1337 518.6L1337 519.6L1334 520.3ZM1340 517.9L1342 517.4L1342 518.4L1340 518.9Z" fill="#ff8c00"/>
<path d="M724.7 656L1342 527.4L1342 528.4L724.7 657Z" fill="#4169e1"/>
<path d="M970.1 647.7L1342 563.9L1342 564.9L970.1 648.7Z" fill="#4169e1"/>
<line x1="968" y1="598.5" x2="1249" y2="598.5" stroke="#4169e1" stroke-width="1"/>
<line x1="920" y1="609.5" x2="1128" y2="609.5" stroke="#4169e1" stroke-width="1"/>
<line x1="912" y1="626.5" x2="1216" y2="626.5" stroke="#4169e1" stroke-width="1"/>
<rect x="754.5" y="705.5" width="4" height="4" fill="#fff" stroke="#ff8c00"/>
<rect x="894.5" y="672.5" width="4" height="4" fill="#fff" stroke="#ff8c00"/>
<rect x="1216" y="479" width="3" height="1" fill="#ff1493"/>
<rect x="1214" y="481" width="1" height="1" fill="#ff1493"/>
<rect x="1214" y="483" width="1" height="1" fill="#ff1493"/>
<rect x="1218" y="481" width="1" height="1" fill="#ff1493"/>
<rect x="1218" y="483" width="1" height="1" fill="#ff1493"/>
<rect x="1216" y="809" width="3" height="1" fill="#ff1493"/>
<rect x="1214" y="810" width="1" height="1" fill="#ff1493"/>
<rect x="1214" y="812" width="1" height="1" fill="#ff1493"/>
<rect x="1218" y="810" width="1" height="1" fill="#ff1493"/>
<rect x="1218" y="812" width="1" height="1" fill="#ff1493"/>
<rect x="1248" y="479" width="3" height="1" fill="#6e6e6e"/>
<rect x="1246" y="481" width="1" height="1" fill="#6e6e6e"/>
<rect x="1246" y="483" width="1" height="1" fill="#6e6e6e"/>
<rect x="1250" y="481" width="1" height="1" fill="#6e6e6e"/>
<rect x="1250" y="483" width="1" height="1" fill="#6e6e6e"/>
<rect x="1248" y="809" width="3" height="1" fill="#6e6e6e"/>
<rect x="1246" y="810" width="1" height="1" fill="#6e6e6e"/>
<rect x="1246" y="812" width="1" height="1" fill="#6e6e6e"/>
<rect x="1250" y="810" width="1" height="1" fill="#6e6e6e"/>
<rect x="1250" y="812" width="1" height="1" fill="#6e6e6e"/>
<text x="1216.2" y="672.8" font-size="16.8" fill="#808080" letter-spacing="-0.4">01:00</text>
<rect x="1326" y="798" width="15" height="15" fill="#e00000"/>
<rect x="1331" y="806" width="7" height="1" fill="#fff"/><rect x="1334" y="803" width="1" height="7" fill="#fff"/>
<text x="704.5" y="513" font-size="17" fill="#ff1493" font-family='"Liberation Mono", IPAGothic, "Noto Sans CJK JP", monospace' textLength="228" lengthAdjust="spacing" xml:space="preserve">残り 1 時間 19 分 32 秒</text>
</g>
<rect x="703.5" y="478.5" width="638" height="335" fill="none" stroke="#000"/>
<rect x="703.5" y="815.5" width="638" height="23" fill="none" stroke="#000"/>
<polygon points="704,832 704,838 710,838" fill="#c0c0c0"/>
<g clip-path="url(#s139881245754768)">
</g>
<rect x="1342" y="821" width="3" height="1" fill="#000"/><rect x="1342" y="830" width="3" height="1" fill="#000"/>
<text x="1346" y="827.6" font-size="12.6">2</text><text x="1345" y="835" font-size="12.6">0.00</text>
<line x1="896.5" y1="816" x2="896.5" y2="838" stroke="#000" stroke-dasharray="3 3"/>
<line x1="1136.5" y1="816" x2="1136.5" y2="838" stroke="#000" stroke-dasharray="3 3"/>
<line x1="1216.5" y1="816" x2="1216.5" y2="838" stroke="#ff1493" stroke-dasharray="3 3"/>
<line x1="1248.5" y1="816" x2="1248.5" y2="824" stroke="#6e6e6e"/>
<rect x="1340" y="504" width="3" height="44" fill="#dc143c"/><rect x="1341" y="504" width="1" height="44" fill="#000"/>
<polygon points="707,486 716,486 711.5,491" fill="#000"/>
<text x="722.5" y="493" font-size="12" fill="#000" textLength="64" lengthAdjust="spacing">XAUUSD,H4</text>
<rect x="1342" y="500" width="3" height="1" fill="#000"/>
<text x="1348" y="505" font-size="12.6" fill="#000">4060.00</text>
<rect x="1342" y="549" width="3" height="1" fill="#000"/>
<text x="1348" y="554" font-size="12.6" fill="#000">3975.00</text>
<rect x="1342" y="598" width="3" height="1" fill="#000"/>
<text x="1348" y="603" font-size="12.6" fill="#000">3888.30</text>
<rect x="1342" y="647" width="3" height="1" fill="#000"/>
<text x="1348" y="652" font-size="12.6" fill="#000">3803.30</text>
<rect x="1342" y="696" width="3" height="1" fill="#000"/>
<text x="1348" y="701" font-size="12.6" fill="#000">3716.60</text>
<rect x="1342" y="745" width="3" height="1" fill="#000"/>
<text x="1348" y="750" font-size="12.6" fill="#000">3631.60</text>
<rect x="1342" y="794" width="3" height="1" fill="#000"/>
<text x="1348" y="799" font-size="12.6" fill="#000">3544.90</text>
<rect x="1343" y="506" width="56" height="14" fill="#c0c0c0"/>
<text x="1348" y="517.6" font-size="12.6" fill="#fff">4038.69</text>
<rect x="1343" y="528" width="56" height="14" fill="#daa520"/>
<text x="1348" y="539.6" font-size="12.6" fill="#fff">4000.00</text>
<rect x="704" y="839" width="1" height="3" fill="#000"/>
<text x="702.7" y="854" font-size="12.8" fill="#000">23 Sep 2025</text>
<rect x="800" y="839" width="1" height="3" fill="#000"/>
<text x="798.7" y="854" font-size="12.8" fill="#000">25 Sep 01:00</text>
<rect x="896" y="839" width="1" height="3" fill="#000"/>
<text x="894.7" y="854" font-size="12.8" fill="#000">29 Sep 01:00</text>
<rect x="992" y="839" width="1" height="3" fill="#000"/>
<text x="990.7" y="854" font-size="12.8" fill="#000">1 Oct 01:00</text>
<rect x="1088" y="839" width="1" height="3" fill="#000"/>
<text x="1086.7" y="854" font-size="12.8" fill="#000">3 Oct 01:00</text>
<rect x="1184" y="839" width="1" height="3" fill="#000"/>
<text x="1182.7" y="854" font-size="12.8" fill="#000">7 Oct 01:00</text>
<rect x="1280" y="839" width="1" height="3" fill="#000"/>
<text x="1278.7" y="854" font-size="12.8" fill="#000">9 Oct 01:00</text>
</svg>
</div></div>
<div class="win" style="left:1416px;top:435px;width:497px;height:437px">
<svg class="ico" width="19" height="19" viewBox="0 0 19 19" shape-rendering="crispEdges"><rect x="0" y="0" width="15" height="11" fill="#5b8ff9"/><rect x="1" y="3" width="13" height="7" fill="#fff"/><path d="M3 5.5h2M4.5 4v2M8.5 4v2M8.5 5.5h2" stroke="#5b8ff9" fill="none"/><rect x="1" y="0" width="2" height="1" fill="#4c8d6a"/><rect x="5" y="0" width="1" height="3" fill="#4c8d6a"/><rect x="10" y="0" width="1" height="3" fill="#4c8d6a"/><rect x="13" y="0" width="1" height="1" fill="#4c8d6a"/><rect x="0" y="3" width="1" height="1" fill="#4c8d6a"/><rect x="0" y="6" width="1" height="1" fill="#4c8d6a"/><rect x="0" y="9" width="1" height="1" fill="#4c8d6a"/><rect x="14" y="2" width="1" height="2" fill="#4c8d6a"/><rect x="14" y="5" width="1" height="1" fill="#4c8d6a"/><rect x="2" y="10" width="1" height="1" fill="#4c8d6a"/><rect x="4" y="6" width="14" height="12" fill="#5b8ff9"/><rect x="5" y="9" width="11" height="7" fill="#fff"/><rect x="6" y="6" width="2" height="1" fill="#4c8d6a"/><rect x="10" y="6" width="1" height="2" fill="#4c8d6a"/><rect x="14" y="6" width="1" height="2" fill="#4c8d6a"/><rect x="4" y="10" width="1" height="1" fill="#4c8d6a"/><rect x="4" y="13" width="1" height="1" fill="#4c8d6a"/><rect x="4" y="16" width="1" height="1" fill="#4c8d6a"/><rect x="16" y="9" width="2" height="1" fill="#4c8d6a"/><rect x="16" y="12" width="2" height="2" fill="#4c8d6a"/><rect x="16" y="15" width="2" height="1" fill="#4c8d6a"/><rect x="6" y="16" width="2" height="2" fill="#4c8d6a"/><rect x="11" y="16" width="1" height="2" fill="#4c8d6a"/><rect x="14" y="16" width="1" height="2" fill="#4c8d6a"/><rect x="6" y="10" width="2" height="1" fill="#5b8ff9"/><rect x="8" y="11" width="1" height="3" fill="#5b8ff9"/><rect x="9" y="14" width="1" height="1" fill="#5b8ff9"/><rect x="10" y="11" width="1" height="3" fill="#5b8ff9"/><rect x="11" y="10" width="2" height="1" fill="#5b8ff9"/><rect x="13" y="11" width="1" height="3" fill="#5b8ff9"/><rect x="14" y="14" width="1" height="1" fill="#5b8ff9"/></svg>
<div class="tt">XAUUSD,<span class="lc">Weekly</span></div>
<div class="b n" style="left:355px"><svg width="42" height="24" viewBox="0 0 42 24"><rect x="12.5" y="10.5" width="16" height="5" rx="1" fill="url(#gw)" stroke="#4b4f63"/></svg></div>
<div class="b m" style="left:399px"><svg width="42" height="24" viewBox="0 0 42 24"><path fill-rule="evenodd" d="M12.5 4.5h16v14h-16zM16.5 8.5v6h8v-6z" fill="url(#gw)" stroke="#4b4f63" stroke-linejoin="round"/></svg></div>
<div class="b x" style="left:443px"><svg width="42" height="24" viewBox="0 0 42 24"><path d="M11.8 5.9L13.3 4.4H17L20.3 8L23.6 4.4H27.3L28.8 5.9L23.2 11.4L28.8 16.9L27.3 18.4H23.6L20.3 14.8L17 18.4H13.3L11.8 16.9L17.4 11.4Z" fill="url(#gw)" stroke="#4b4f63" stroke-linejoin="round"/></svg></div>
<div class="cl" style="width:479px;height:390px">
<svg width="479" height="390" viewBox="1425 473 479 390" font-family='"Liberation Sans", sans-serif' shape-rendering="crispEdges">
<defs><clipPath id="c139881245754960"><rect x="1430" y="478" width="408" height="334"/></clipPath><clipPath id="s139881245754960"><rect x="1430" y="815" width="408" height="22"/></clipPath></defs>
<rect x="1425" y="473" width="479" height="390" fill="#fff"/>
<rect x="1425" y="473" width="479" height="1" fill="#a0a0a0"/><rect x="1425" y="473" width="1" height="390" fill="#a0a0a0"/>
<rect x="1426" y="474" width="477" height="1" fill="#696969"/><rect x="1426" y="474" width="1" height="388" fill="#696969"/>
<rect x="1426" y="861" width="477" height="1" fill="#e3e3e3"/><rect x="1902" y="474" width="1" height="388" fill="#e3e3e3"/>
<rect x="1425" y="862" width="479" height="1" fill="#fff"/><rect x="1903" y="473" width="1" height="390" fill="#fff"/>
<g clip-path="url(#c139881245754960)">
<line x1="1494.5" y1="478" x2="1494.5" y2="812" stroke="#000" stroke-width="1" stroke-dasharray="3 3"/>
<line x1="1806.5" y1="478" x2="1806.5" y2="812" stroke="#6e6e6e" stroke-width="1" stroke-dasharray="12 4.5 3 4.5"/>
<line x1="1806.5" y1="478" x2="1806.5" y2="812" stroke="#ff1493" stroke-width="1" stroke-dasharray="3 3"/>
<line x1="1429" y1="514.5" x2="1839" y2="514.5" stroke="#c0c0c0" stroke-width="1"/>
<line x1="1429" y1="545.5" x2="1839" y2="545.5" stroke="#c0c0c0" stroke-width="1"/>
<rect x="1510" y="810" width="1" height="7" fill="#00bfff"/>
<rect x="1508" y="811" width="5" height="6" fill="#00bfff"/>
<rect x="1518" y="805" width="1" height="12" fill="#00bfff"/>
<rect x="1516" y="809" width="5" height="8" fill="#00bfff"/>
<rect x="1526" y="791" width="1" height="22" fill="#00bfff"/>
<rect x="1524" y="796" width="5" height="15" fill="#00bfff"/>
<rect x="1534" y="779" width="1" height="19" fill="#00bfff"/>
<rect x="1532" y="791" width="5" height="7" fill="#00bfff"/>
<rect x="1542" y="776" width="1" height="18" fill="#00bfff"/>
<rect x="1540" y="780" width="5" height="12" fill="#00bfff"/>
<rect x="1550" y="776" width="1" height="27" fill="#000"/>
<rect x="1548" y="780" width="5" height="17" fill="#000"/>
<rect x="1558" y="781" width="1" height="17" fill="#00bfff"/>
<rect x="1556" y="785" width="5" height="13" fill="#00bfff"/>
<rect x="1566" y="765" width="1" height="28" fill="#00bfff"/>
<rect x="1564" y="769" width="5" height="17" fill="#00bfff"/>
<rect x="1574" y="754" width="1" height="17" fill="#00bfff"/>
<rect x="1572" y="762" width="5" height="9" fill="#00bfff"/>
<rect x="1582" y="748" width="1" height="19" fill="#00bfff"/>
<rect x="1580" y="749" width="5" height="14" fill="#00bfff"/>
<rect x="1590" y="731" width="1" height="33" fill="#000"/>
<rect x="1588" y="748" width="5" height="11" fill="#000"/>
<rect x="1598" y="714" width="1" height="62" fill="#00bfff"/>
<rect x="1596" y="716" width="5" height="50" fill="#00bfff"/>
<rect x="1606" y="690" width="1" height="36" fill="#00bfff"/>
<rect x="1604" y="697" width="5" height="22" fill="#00bfff"/>
<rect x="1614" y="660" width="1" height="52" fill="#000"/>
<rect x="1612" y="696" width="5" height="4" fill="#000"/>
<rect x="1622" y="691" width="1" height="33" fill="#000"/>
<rect x="1620" y="697" width="5" height="19" fill="#000"/>
<rect x="1630" y="673" width="1" height="44" fill="#00bfff"/>
<rect x="1628" y="697" width="5" height="19" fill="#00bfff"/>
<rect x="1638" y="702" width="1" height="39" fill="#000"/>
<rect x="1636" y="705" width="5" height="20" fill="#000"/>
<rect x="1646" y="689" width="1" height="35" fill="#00bfff"/>
<rect x="1644" y="690" width="5" height="31" fill="#00bfff"/>
<rect x="1654" y="690" width="1" height="25" fill="#000"/>
<rect x="1652" y="691" width="5" height="15" fill="#000"/>
<rect x="1662" y="681" width="1" height="23" fill="#00bfff"/>
<rect x="1660" y="700" width="5" height="4" fill="#00bfff"/>
<rect x="1670" y="671" width="1" height="34" fill="#00bfff"/>
<rect x="1668" y="674" width="5" height="27" fill="#00bfff"/>
<rect x="1678" y="670" width="1" height="24" fill="#000"/>
<rect x="1676" y="671" width="5" height="18" fill="#000"/>
<rect x="1686" y="682" width="1" height="31" fill="#000"/>
<rect x="1684" y="683" width="5" height="25" fill="#000"/>
<rect x="1694" y="689" width="1" height="26" fill="#00bfff"/>
<rect x="1692" y="695" width="5" height="13" fill="#00bfff"/>
<rect x="1702" y="688" width="1" height="18" fill="#00bfff"/>
<rect x="1700" y="691" width="5" height="5" fill="#00bfff"/>
<rect x="1710" y="686" width="1" height="15" fill="#000"/>
<rect x="1708" y="689" width="5" height="4" fill="#000"/>
<rect x="1718" y="673" width="1" height="25" fill="#000"/>
<rect x="1716" y="693" width="5" height="3" fill="#000"/>
<rect x="1726" y="689" width="1" height="21" fill="#00bfff"/>
<rect x="1724" y="689" width="5" height="10" fill="#00bfff"/>
<rect x="1734" y="679" width="1" height="15" fill="#00bfff"/>
<rect x="1732" y="682" width="5" height="7" fill="#00bfff"/>
<rect x="1742" y="680" width="1" height="17" fill="#000"/>
<rect x="1740" y="682" width="5" height="14" fill="#000"/>
<rect x="1750" y="686" width="1" height="15" fill="#00bfff"/>
<rect x="1748" y="687" width="5" height="9" fill="#00bfff"/>
<rect x="1758" y="671" width="1" height="22" fill="#00bfff"/>
<rect x="1756" y="671" width="5" height="17" fill="#00bfff"/>
<rect x="1766" y="639" width="1" height="35" fill="#00bfff"/>
<rect x="1764" y="641" width="5" height="31" fill="#00bfff"/>
<rect x="1774" y="623" width="1" height="21" fill="#00bfff"/>
<rect x="1772" y="629" width="5" height="15" fill="#00bfff"/>
<rect x="1782" y="616" width="1" height="17" fill="#00bfff"/>
<rect x="1780" y="621" width="5" height="9" fill="#00bfff"/>
<rect x="1790" y="598" width="1" height="23" fill="#00bfff"/>
<rect x="1788" y="604" width="5" height="17" fill="#00bfff"/>
<rect x="1798" y="576" width="1" height="29" fill="#00bfff"/>
<rect x="1796" y="578" width="5" height="27" fill="#00bfff"/>
<rect x="1806" y="546" width="1" height="32" fill="#00bfff"/>
<rect x="1804" y="546" width="5" height="32" fill="#00bfff"/>
<path d="M1429.5 810.6L1437.4 806.9L1437.4 807.9L1429.5 811.6ZM1437.4 806.9L1455.9 806.5L1455.9 807.5L1437.4 807.9ZM1455.9 806.5L1466.2 809.6L1466.2 810.6L1455.9 807.5ZM1466.2 809.6L1474.5 812.3L1474.5 813.3L1466.2 810.6Z" fill="#505050"/>
<path d="M1515.7 812.3L1527.5 802.4L1527.5 803.4L1515.7 813.3ZM1527 802.9L1535 794.6L1536 794.6L1528 802.9ZM1535.5 794.1L1543.6 786.9L1543.6 787.9L1535.5 795.1ZM1543.6 786.9L1551.4 781.8L1551.4 782.8L1543.6 787.9ZM1551.4 781.8L1559.4 776.6L1559.4 777.6L1551.4 782.8ZM1558.9 777.1L1567 768.9L1568 768.9L1559.9 777.1ZM1567 768.9L1575 758.6L1576 758.6L1568 768.9ZM1575 758.6L1583.1 748.2L1584.1 748.2L1576 758.6ZM1583.6 747.7L1591.4 743.6L1591.4 744.6L1583.6 748.7ZM1590.9 744.1L1598.9 722.5L1599.9 722.5L1591.9 744.1ZM1598.9 722.5L1607 706L1608 706L1599.9 722.5ZM1607 706L1615 695.3L1616 695.3L1608 706ZM1615 695.3L1623.1 685.4L1624.1 685.4L1616 695.3ZM1623.6 684.9L1631.4 677.6L1631.4 678.6L1623.6 685.9ZM1631.4 677.6L1639.4 674.6L1639.4 675.6L1631.4 678.6ZM1639.4 674.6L1647.5 667.3L1647.5 668.3L1639.4 675.6ZM1647.5 667.3L1655.5 664.2L1655.5 665.2L1647.5 668.3ZM1655.5 664.2L1663.6 661.1L1663.6 662.1L1655.5 665.2ZM1663.6 661.1L1671.4 655L1671.4 656L1663.6 662.1ZM1671.4 655L1679.4 652.9L1679.4 653.9L1671.4 656ZM1679.4 652.9L1687.5 652.3L1687.5 653.3L1679.4 653.9ZM1687.5 652.3L1695.5 650.8L1695.5 651.8L1687.5 653.3ZM1695.5 650.8L1703.6 650.8L1703.6 651.8L1695.5 651.8ZM1703.6 650.8L1711.4 653.9L1711.4 654.9L1703.6 651.8ZM1711.4 653.9L1719.4 657.6L1719.4 658.6L1711.4 654.9ZM1719.4 657.6L1727.5 659.1L1727.5 660.1L1719.4 658.6ZM1727.5 659.1L1735.5 661.1L1735.5 662.1L1727.5 660.1ZM1735.5 661.1L1743.6 664.2L1743.6 665.2L1735.5 662.1ZM1743.1 664.7L1750.9 674L1751.9 674L1744.1 664.7ZM1751.4 673.5L1759.5 669.4L1759.5 670.4L1751.4 674.5ZM1759 669.9L1767 652.4L1768 652.4L1760 669.9ZM1767 652.4L1775.1 640L1776.1 640L1768 652.4ZM1775.1 640L1783.1 630.7L1784.1 630.7L1776.1 640ZM1783.1 630.7L1790.9 617.3L1791.9 617.3L1784.1 630.7ZM1790.9 617.3L1799 598.7L1800 598.7L1791.9 617.3ZM1799 598.7L1806 577.1L1807 577.1L1800 598.7Z" fill="#505050"/>
<path d="M1535.3 812.3L1543.6 805.5L1543.6 806.5L1535.3 813.3ZM1543.6 805.5L1551.4 802.8L1551.4 803.8L1543.6 806.5ZM1551.4 802.8L1559.4 800.3L1559.4 801.3L1551.4 803.8ZM1559.4 800.3L1567.5 794.6L1567.5 795.6L1559.4 801.3ZM1567.5 794.6L1575.5 786.9L1575.5 787.9L1567.5 795.6ZM1575.5 786.9L1583.6 780.7L1583.6 781.7L1575.5 787.9ZM1583.6 780.7L1591.4 776L1591.4 777L1583.6 781.7ZM1590.9 776.5L1598.9 764.7L1599.9 764.7L1591.9 776.5ZM1598.9 764.7L1607 752.4L1608 752.4L1599.9 764.7ZM1607 752.4L1615 742.1L1616 742.1L1608 752.4ZM1615 742.1L1623.1 733.8L1624.1 733.8L1616 742.1ZM1623.1 733.8L1630.9 725.6L1631.9 725.6L1624.1 733.8ZM1631.4 725.1L1639.4 720.9L1639.4 721.9L1631.4 726.1ZM1639.4 720.9L1647.5 716.8L1647.5 717.8L1639.4 721.9ZM1647.5 716.8L1655.5 709.6L1655.5 710.6L1647.5 717.8ZM1655.5 709.6L1663.6 703.8L1663.6 704.8L1655.5 710.6ZM1663.6 703.8L1671.4 698.3L1671.4 699.3L1663.6 704.8ZM1671.4 698.3L1679.4 693.5L1679.4 694.5L1671.4 699.3ZM1679.4 693.5L1687.5 692.1L1687.5 693.1L1679.4 694.5ZM1687.5 692.1L1695.5 689L1695.5 690L1687.5 693.1ZM1695.5 689L1703.6 685.9L1703.6 686.9L1695.5 690ZM1703.6 685.9L1711.4 684.4L1711.4 685.4L1703.6 686.9ZM1711.4 684.4L1719.4 683.8L1719.4 684.8L1711.4 685.4ZM1719.4 683.8L1727.5 683.8L1727.5 684.8L1719.4 684.8ZM1727.5 683.8L1735.5 682.8L1735.5 683.8L1727.5 684.8ZM1735.5 682.8L1743.6 682.8L1743.6 683.8L1735.5 683.8ZM1743.6 682.8L1751.4 683.8L1751.4 684.8L1743.6 683.8ZM1751.4 683.8L1759.5 682.4L1759.5 683.4L1751.4 684.8ZM1759 682.9L1767 673L1768 673L1760 682.9ZM1767 673L1775.1 662.7L1776.1 662.7L1768 673ZM1775.1 662.7L1783.1 652.4L1784.1 652.4L1776.1 662.7ZM1783.6 651.9L1791.4 644.7L1791.4 645.7L1783.6 652.9ZM1791.4 644.7L1797.2 639.5L1797.2 640.5L1791.4 645.7ZM1796.7 640L1799 634.8L1800 634.8L1797.7 640ZM1799 634.8L1806 621.4L1807 621.4L1800 634.8Z" fill="#505050"/>
<path d="M1585.8 811L1588 809.2L1588 810.2L1585.8 812ZM1591 806.6L1594 804L1594 805L1591 807.6ZM1597 801.4L1600 798.8L1600 799.8L1597 802.4ZM1603 796.3L1606 793.8L1606 794.8L1603 797.3ZM1609 791.3L1612 788.8L1612 789.8L1609 792.3ZM1615 786.3L1618 783.5L1618 784.5L1615 787.3ZM1621 780.5L1624 777.6L1624 778.6L1621 781.5ZM1627 774.7L1630 771.8L1630 772.8L1627 775.7ZM1633 769.1L1636 766.6L1636 767.6L1633 770.1ZM1639 764.1L1642 761.6L1642 762.6L1639 765.1ZM1645 759.1L1648 756.6L1648 757.6L1645 760.1ZM1651 754.1L1654 751.6L1654 752.6L1651 755.1ZM1657 749.1L1660 746.6L1660 747.6L1657 750.1ZM1663 744.1L1666 741.6L1666 742.6L1663 745.1ZM1669 739L1672 736.5L1672 737.5L1669 740ZM1675 734L1678 731.4L1678 732.4L1675 735ZM1681 729.2L1684 727.3L1684 728.3L1681 730.2ZM1687 725.4L1690 723.4L1690 724.4L1687 726.4ZM1693 721.5L1696 719.7L1696 720.7L1693 722.5ZM1699 718.1L1702 716.5L1702 717.5L1699 719.1ZM1705 715L1708 713.4L1708 714.4L1705 716ZM1711 711.9L1714 710.5L1714 711.5L1711 712.9ZM1717 709.1L1720 707.8L1720 708.8L1717 710.1ZM1723 706.5L1726 705.1L1726 706.1L1723 707.5ZM1729 704L1732 703L1732 704L1729 705ZM1735 702L1738 701.1L1738 702.1L1735 703ZM1741 700.1L1744 699.2L1744 700.2L1741 701.1ZM1747 698.8L1750 698.5L1750 699.5L1747 699.8ZM1753 697.7L1756 696.5L1756 697.5L1753 698.7ZM1759 695.4L1762 693.9L1762 694.9L1759 696.4ZM1765 692.3L1768 690.7L1768 691.7L1765 693.3ZM1771 688.8L1774 686.9L1774 687.9L1771 689.8ZM1777 685L1780 683.1L1780 684.1L1777 686ZM1783 681.1L1786 678.8L1786 679.8L1783 682.1ZM1789 676.5L1792 674.2L1792 675.2L1789 677.5ZM1795 672.3L1798 670.3L1798 671.3L1795 673.3ZM1801 668.5L1804 666.7L1804 667.7L1801 669.5Z" fill="#505050"/>
<path d="M1641.5 812.3L1655.5 798.3L1655.5 799.3L1641.5 813.3ZM1655 798.8L1670.9 782.3L1671.9 782.3L1656 798.8ZM1671.4 781.8L1687.5 767.3L1687.5 768.3L1671.4 782.8ZM1687.5 767.3L1703.6 752.9L1703.6 753.9L1687.5 768.3ZM1703.1 753.4L1718.9 736.9L1719.9 736.9L1704.1 753.4ZM1719.4 736.4L1735.5 722L1735.5 723L1719.4 737.4ZM1735.5 722L1745 715.8L1745 716.8L1735.5 723ZM1744.5 716.3L1750.9 709.1L1751.9 709.1L1745.5 716.3ZM1751.4 708.6L1759.5 707.1L1759.5 708.1L1751.4 709.6ZM1759.5 707.1L1767.5 709.2L1767.5 710.2L1759.5 708.1ZM1767.5 709.2L1775.6 710L1775.6 711L1767.5 710.2ZM1775.6 710L1783.6 709.2L1783.6 710.2L1775.6 711ZM1783.6 709.2L1791.4 708L1791.4 709L1783.6 710.2ZM1791.4 708L1799.5 706.5L1799.5 707.5L1791.4 709ZM1799.5 706.5L1806.5 709.2L1806.5 710.2L1799.5 707.5Z" fill="#505050"/>
<path d="M1681.2 812.8L1695 796.7L1696 796.7L1682.2 812.8ZM1695 796.7L1703.1 786.4L1704.1 786.4L1696 796.7ZM1703.1 786.4L1710.9 776.1L1711.9 776.1L1704.1 786.4ZM1710.9 776.1L1718.9 761.6L1719.9 761.6L1711.9 776.1ZM1718.9 761.6L1727 751.3L1728 751.3L1719.9 761.6ZM1727 751.3L1735 741L1736 741L1728 751.3ZM1735 741L1744.5 728.7L1745.5 728.7L1736 741ZM1744.5 728.7L1750.9 720L1751.9 720L1745.5 728.7ZM1751.4 719.5L1759.5 718.9L1759.5 719.9L1751.4 720.5ZM1759.5 718.9L1767.5 725.7L1767.5 726.7L1759.5 719.9ZM1767.5 725.7L1775.6 731.3L1775.6 732.3L1767.5 726.7ZM1775.6 731.3L1783.6 734.8L1783.6 735.8L1775.6 732.3ZM1783.6 734.8L1791.4 739.5L1791.4 740.5L1783.6 735.8ZM1791.4 739.5L1799.5 742.6L1799.5 743.6L1791.4 740.5ZM1799 743.1L1806 753.4L1807 753.4L1800 743.1Z" fill="#505050"/>
<line x1="1429" y1="554.5" x2="1839" y2="554.5" stroke="#daa520" stroke-width="1"/>
<rect x="1806" y="478" width="3" height="1" fill="#ff1493"/>
<rect x="1804" y="480" width="1" height="1" fill="#ff1493"/>
<rect x="1804" y="482" width="1" height="1" fill="#ff1493"/>
<rect x="1808" y="480" width="1" height="1" fill="#ff1493"/>
<rect x="1808" y="482" width="1" height="1" fill="#ff1493"/>
<rect x="1806" y="808" width="3" height="1" fill="#ff1493"/>
<rect x="1804" y="809" width="1" height="1" fill="#ff1493"/>
<rect x="1804" y="811" width="1" height="1" fill="#ff1493"/>
<rect x="1808" y="809" width="1" height="1" fill="#ff1493"/>
<rect x="1808" y="811" width="1" height="1" fill="#ff1493"/>
<rect x="1823" y="797" width="15" height="15" fill="#e00000"/>
<rect x="1828" y="805" width="7" height="1" fill="#fff"/><rect x="1831" y="802" width="1" height="7" fill="#fff"/>
</g>
<rect x="1429.5" y="477.5" width="409" height="335" fill="none" stroke="#000"/>
<rect x="1429.5" y="814.5" width="409" height="23" fill="none" stroke="#000"/>
<polygon points="1430,831 1430,837 1436,837" fill="#c0c0c0"/>
<g clip-path="url(#s139881245754960)">
</g>
<rect x="1839" y="820" width="3" height="1" fill="#000"/><rect x="1839" y="829" width="3" height="1" fill="#000"/>
<text x="1843" y="826.6" font-size="12.6">2</text><text x="1842" y="834" font-size="12.6">0.00</text>
<line x1="1494.5" y1="815" x2="1494.5" y2="837" stroke="#000" stroke-dasharray="3 3"/>
<line x1="1806.5" y1="815" x2="1806.5" y2="837" stroke="#ff1493" stroke-dasharray="3 3"/>
<polygon points="1433,485 1442,485 1437.5,490" fill="#000"/>
<text x="1448.5" y="492" font-size="12" fill="#000" textLength="90" lengthAdjust="spacing">XAUUSD,Weekly</text>
<rect x="1837" y="484" width="3" height="118" fill="#fff"/><rect x="1838" y="484" width="1" height="118" fill="#000"/><line x1="1838.5" y1="484" x2="1838.5" y2="602" stroke="#333" stroke-width="3" stroke-dasharray="3 3"/><rect x="1840" y="499" width="2" height="1" fill="#000"/>
<text x="1845" y="504" font-size="12.6" fill="#000">4257.78</text>
<text x="1845" y="603" font-size="12.6" fill="#000">3797.43</text>
<rect x="1839" y="646" width="3" height="1" fill="#000"/>
<text x="1845" y="651" font-size="12.6" fill="#000">3564.93</text>
<rect x="1839" y="695" width="3" height="1" fill="#000"/>
<text x="1845" y="700" font-size="12.6" fill="#000">3337.08</text>
<rect x="1839" y="744" width="3" height="1" fill="#000"/>
<text x="1845" y="749" font-size="12.6" fill="#000">3104.58</text>
<rect x="1839" y="793" width="3" height="1" fill="#000"/>
<text x="1845" y="798" font-size="12.6" fill="#000">2876.73</text>
<rect x="1840" y="548" width="56" height="14" fill="#daa520"/>
<text x="1845" y="559.6" font-size="12.6" fill="#fff">4000.00</text>
<rect x="1840" y="539" width="56" height="14" fill="#c0c0c0"/>
<text x="1845" y="550.6" font-size="12.6" fill="#fff">4038.69</text>
<rect x="1840" y="507" width="56" height="14" fill="#000"/>
<text x="1845" y="518.6" font-size="12.6" fill="#fff">4186.75</text>
<rect x="1430" y="838" width="1" height="3" fill="#000"/>
<text x="1428.7" y="853" font-size="12.8" fill="#000">10 Nov 2024</text>
<rect x="1526" y="838" width="1" height="3" fill="#000"/>
<text x="1524.7" y="853" font-size="12.8" fill="#000">2 Feb 2025</text>
<rect x="1622" y="838" width="1" height="3" fill="#000"/>
<text x="1620.7" y="853" font-size="12.8" fill="#000">27 Apr 2025</text>
<rect x="1718" y="838" width="1" height="3" fill="#000"/>
<text x="1716.7" y="853" font-size="12.8" fill="#000">20 Jul 2025</text>
<rect x="1814" y="838" width="1" height="3" fill="#000"/>
<text x="1812.7" y="853" font-size="12.8" fill="#000">12 Oct 2025</text>
</svg>
</div></div>
</body></html>
